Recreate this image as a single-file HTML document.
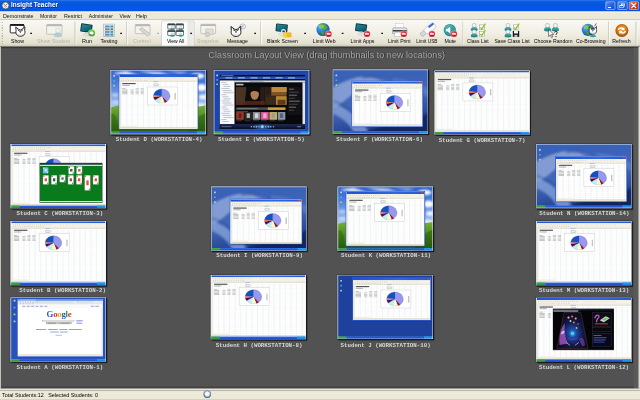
<!DOCTYPE html><html><head><meta charset="utf-8"><title>Insight Teacher</title><style>
*{margin:0;padding:0;box-sizing:border-box}
html,body{width:640px;height:400px;overflow:hidden;background:#525252}
body{position:relative;font-family:"Liberation Sans",sans-serif}
#sc{position:absolute;left:0;top:0;width:2560px;height:1600px;transform:scale(.25);transform-origin:0 0;overflow:hidden}
#zm{position:absolute;left:0;top:0;width:640px;height:400px;zoom:4;overflow:hidden}
.abs,.abs *{position:absolute}
#title{left:0;top:0;width:640px;height:11.2px;background:linear-gradient(to bottom,#2f79ea 0,#0b5ce2 14%,#0454de 45%,#0558ea 78%,#0652ee 93%,#0a3cc0 100%)}
#menu{left:0;top:11.2px;width:640px;height:8.4px;background:linear-gradient(to bottom,#f6f4e8 0,#f4f2e5 1.2px,#ece9d8 1.6px,#ece9d8 100%)}
#tb{left:0;top:19.6px;width:640px;height:27.2px;background:linear-gradient(to bottom,#f9f8f3 0,#f1efe4 50%,#e4e0d0 88%,#c9c5b2 100%)}
#main{left:0;top:46.8px;width:640px;height:341.6px;background:#525252}
#status{left:0;top:388.5px;width:640px;height:11.5px;background:linear-gradient(to bottom,#e7e5d9 0,#e7e5d9 1.3px,#b9b7a9 1.5px,#b9b7a9 2.3px,#edeadb 2.6px,#ece9d8 10.4px,#d6d3c2 10.9px,#d2cfbe 100%)}
.t{white-space:nowrap;line-height:1;color:#000}
.lbl{white-space:nowrap;line-height:1;font-family:"Liberation Mono",monospace;font-size:5.78px;color:#d8d8d8;font-weight:bold;letter-spacing:0}
.th{width:95.4px;height:64.2px;background:#fff;overflow:hidden;box-shadow:0 0 0 0.8px rgba(44,44,44,.55),1px 1px 0 0.15px rgba(10,10,20,.95),1.2px 1.4px 1px rgba(20,20,20,.4)}
.abs span{position:static}
.sep{top:21.5px;width:0.8px;height:23.5px;background:#c9c6b8;box-shadow:0.8px 0 0 #fff}
.dot{width:1.8px;height:1.3px;background:#111;top:32.6px}
</style></head><body><div id="sc"><div id="zm" class="abs">
<div id="title">
<svg style="left:1.4px;top:1.5px" width="8" height="8" viewBox="0 0 9 9"><circle cx="4.5" cy="4.5" r="4" fill="#f4f4f0" stroke="#4a4a48" stroke-width=".9"/><path d="M2.2 2.6 L4.5 4.6 L6.8 2.4" fill="none" stroke="#3a3a38" stroke-width=".8"/><path d="M3 5.2 C3.6 6.8 5.4 6.8 6 5.2" fill="none" stroke="#6a6a68" stroke-width=".6"/></svg>
<div class="t" style="left:11px;top:2.10px;font-size:6.42px;font-weight:bold;color:#fff;text-shadow:0.5px 0.5px 0.3px #0a2a7a">Insight Teacher</div>
<div style="left:605.6px;top:1.4px;width:9.6px;height:8.4px;border-radius:1.3px;border:0.6px solid #e8eefc;background:linear-gradient(135deg,#5c8ef0 0,#2a63dc 50%,#1c4cc0 100%)"><div style="left:1.8px;top:5px;width:3.2px;height:1.2px;background:#fff"></div></div>
<div style="left:617.4px;top:1.4px;width:10px;height:8.4px;border-radius:1.3px;border:0.6px solid #e8eefc;background:linear-gradient(135deg,#5c8ef0 0,#2a63dc 50%,#1c4cc0 100%)"><div style="left:3px;top:1.5px;width:4px;height:3.2px;border:0.7px solid #fff;border-top-width:1.1px"></div><div style="left:1.6px;top:3px;width:4px;height:3.2px;border:0.7px solid #fff;border-top-width:1.1px;background:#2a63dc"></div></div>
<div style="left:629px;top:1.4px;width:9.8px;height:8.4px;border-radius:1.3px;border:0.6px solid #e8eefc;background:linear-gradient(135deg,#e58a6a 0,#d5441c 45%,#b93010 100%)"><svg style="left:0;top:0" width="8.5" height="7.2" viewBox="0 0 8.5 7.2"><path d="M2.2 1.4 L6.3 5.6 M6.3 1.4 L2.2 5.6" stroke="#fff" stroke-width="1.25" stroke-linecap="round"/></svg></div>
</div>
<div id="menu">
<div class="t" style="left:3px;top:2.02px;font-size:5.33px;color:#111">Demonstrate</div>
<div class="t" style="left:40px;top:2.14px;font-size:5.10px;color:#111">Monitor</div>
<div class="t" style="left:64px;top:2.03px;font-size:5.31px;color:#111">Restrict</div>
<div class="t" style="left:88.8px;top:2.13px;font-size:5.12px;color:#111">Administer</div>
<div class="t" style="left:119.4px;top:2.08px;font-size:5.21px;color:#111">View</div>
<div class="t" style="left:136px;top:2.00px;font-size:5.35px;color:#111">Help</div>
</div>
<div id="tb">
<div style="left:1.8px;top:2.5px;width:0.9px;height:22px;background:repeating-linear-gradient(to bottom,#aaa697 0,#aaa697 0.8px,transparent 0.8px,transparent 1.6px)"></div>
<div style="left:161.3px;top:1.1px;width:33.2px;height:25.6px;border:0.7px solid #b9c3d6;border-radius:1.2px;background:linear-gradient(to right,#fdfdfc 0,#fbfbfa 78%,#e7e7e2 81%,#efefea 100%)"></div>
<div class="t" style="left:11px;top:18.89px;font-size:5.20px;color:#000">Show</div>
<div class="t" style="left:37px;top:18.83px;font-size:5.30px;color:#b4b2a6">Show Student</div>
<div class="t" style="left:82px;top:18.75px;font-size:5.45px;color:#000">Run</div>
<div class="t" style="left:100.6px;top:18.81px;font-size:5.33px;color:#000">Testing</div>
<div class="t" style="left:133px;top:18.74px;font-size:5.46px;color:#b4b2a6">Control</div>
<div class="t" style="left:166.9px;top:18.99px;font-size:5.02px;color:#000">View All</div>
<div class="t" style="left:197px;top:18.91px;font-size:5.16px;color:#b4b2a6">Snapshot</div>
<div class="t" style="left:226.9px;top:18.92px;font-size:5.15px;color:#000">Message</div>
<div class="t" style="left:266.9px;top:18.87px;font-size:5.23px;color:#000">Blank Screen</div>
<div class="t" style="left:312.8px;top:18.92px;font-size:5.15px;color:#000">Limit Web</div>
<div class="t" style="left:350.6px;top:18.91px;font-size:5.16px;color:#000">Limit Apps</div>
<div class="t" style="left:388px;top:18.95px;font-size:5.08px;color:#000">Limit Print</div>
<div class="t" style="left:416.3px;top:19.13px;font-size:4.77px;color:#000">Limit USB</div>
<div class="t" style="left:444.4px;top:18.88px;font-size:5.22px;color:#000">Mute</div>
<div class="t" style="left:466.9px;top:18.97px;font-size:5.05px;color:#000">Class List</div>
<div class="t" style="left:494.4px;top:18.92px;font-size:5.14px;color:#000">Save Class List</div>
<div class="t" style="left:533.8px;top:18.91px;font-size:5.16px;color:#000">Choose Random</div>
<div class="t" style="left:576px;top:18.90px;font-size:5.17px;color:#000">Co-Browsing</div>
<div class="t" style="left:612.3px;top:18.87px;font-size:5.23px;color:#000">Refresh</div>
<div class="sep" style="left:74.6px;top:1.9px"></div>
<div class="sep" style="left:126px;top:1.9px"></div>
<div class="sep" style="left:260.3px;top:1.9px"></div>
<div class="sep" style="left:462.5px;top:1.9px"></div>
<div class="sep" style="left:608px;top:1.9px"></div>
<div class="sep" style="left:635.6px;top:1.9px"></div>
<div class="dot" style="left:30.3px;top:13.10px;background:#111"></div>
<div class="dot" style="left:120.3px;top:13.10px;background:#111"></div>
<div class="dot" style="left:157.3px;top:13.10px;background:#aaa"></div>
<div class="dot" style="left:190.20000000000002px;top:13.10px;background:#111"></div>
<div class="dot" style="left:254.3px;top:13.10px;background:#111"></div>
<div class="dot" style="left:304.3px;top:13.10px;background:#111"></div>
<div class="dot" style="left:341.8px;top:13.10px;background:#111"></div>
<div class="dot" style="left:381.3px;top:13.10px;background:#111"></div>
<svg style="left:0;top:0" width="640" height="27.2" viewBox="0 19.6 640 27.2"><defs><radialGradient id="ne" cx=".4" cy=".3" r=".8"><stop offset="0" stop-color="#f0606a"/><stop offset=".5" stop-color="#d41424"/><stop offset="1" stop-color="#a00a18"/></radialGradient><linearGradient id="tl" x1="0" y1="0" x2="1" y2="1"><stop offset="0" stop-color="#2a8a98"/><stop offset=".5" stop-color="#147080"/><stop offset="1" stop-color="#0a4c5c"/></linearGradient><linearGradient id="tp" x1="0" y1="0" x2="0" y2="1"><stop offset="0" stop-color="#4ab4b4"/><stop offset="1" stop-color="#148484"/></linearGradient><radialGradient id="gl" cx=".35" cy=".3" r=".85"><stop offset="0" stop-color="#5ab4f0"/><stop offset=".5" stop-color="#1f7ad0"/><stop offset="1" stop-color="#0c3c8c"/></radialGradient><radialGradient id="og" cx=".5" cy=".45" r=".55"><stop offset="0" stop-color="#f0a850"/><stop offset=".6" stop-color="#dc801c"/><stop offset=".82" stop-color="#b45c0c"/><stop offset="1" stop-color="#8c4408"/></radialGradient><radialGradient id="gg" cx=".4" cy=".3" r=".8"><stop offset="0" stop-color="#8ae05a"/><stop offset=".6" stop-color="#3aa820"/><stop offset="1" stop-color="#1c7410"/></radialGradient><radialGradient id="mt" cx=".4" cy=".35" r=".8"><stop offset="0" stop-color="#4cc0c4"/><stop offset=".6" stop-color="#168c94"/><stop offset="1" stop-color="#0a5c68"/></radialGradient></defs><rect x="10.2" y="24.6" width="13.8" height="8.4" rx=".9" fill="#fff" stroke="#141414" stroke-width=".9"/><rect x="10.2" y="24.3" width="13.8" height="1.7" fill="#141414"/><g transform="translate(20.3 31.6) scale(1.0)"><path d="M-4.6 -4.4 L-1.6 -2.2 L0 -1.4 L1.6 -2.2 L4.6 -4.6 L4.4 -1 C5.2 1.6 4.2 4.4 0.4 4.8 C-3.6 4.8 -5 1.8 -4.2 -0.8 Z" fill="#fff" stroke="#141414" stroke-width=".9" stroke-linejoin="round"/><path d="M-2.6 -1.6 L0 0.2 L2.8 -1.8" fill="none" stroke="#141414" stroke-width=".8"/><path d="M-0.6 0.6 L0 1.8 L0.7 0.6Z" fill="#333"/><path d="M-2.8 2.6 C-1.6 3.8 1.6 3.8 3 2.4" fill="none" stroke="#999" stroke-width=".4"/></g><g opacity=".9"><rect x="46.6" y="24.6" width="15.4" height="9.8" rx=".8" fill="#f4f3ee" stroke="#b2b2ac" stroke-width=".8"/><rect x="46.6" y="24.6" width="15.4" height="1.7" fill="#b0b0aa"/><g transform="translate(58 32.4) scale(1.15)"><path d="M-3.4 3.4 C-3.4 0.8 -1.6 0 0 0 C1.6 0 3.4 0.8 3.4 3.4 C2 4.3 -2 4.3 -3.4 3.4Z" fill="#a8cccc" stroke="#b8c4c4" stroke-width=".35"/><circle cx="0" cy="-1.6" r="2.1" fill="#f0f0ee" stroke="#c4c8c8" stroke-width=".45"/></g></g><g transform="rotate(8 86.40 28.20)"><rect x="80.6" y="24.0" width="11.6" height="8.4" rx=".8" fill="#12343c"/><rect x="81.50" y="24.90" width="9.80" height="6.60" fill="url(#tl)"/></g><ellipse cx="87.00" cy="34.60" rx="3.6" ry="1.5" fill="#e4e6ea" stroke="#aab" stroke-width=".3"/><rect x="85.80" y="32.20" width="2.2" height="2" fill="#c6cad2"/><circle cx="91.6" cy="33.2" r="3.5" fill="url(#gg)" stroke="#e8f4e0" stroke-width=".4"/><path d="M89.6 32.2 H91.6 V30.9 L94 33.2 L91.6 35.5 V34.2 H89.6Z" fill="#fff"/><rect x="103.4" y="24.2" width="11.2" height="12.6" fill="#eef0f2" stroke="#a8acb4" stroke-width=".6"/><rect x="105" y="25.60" width="4.6" height="1.7" fill="#5a8cc0"/><rect x="110.4" y="25.60" width="2.8" height="1.7" fill="#2a9a9c"/><rect x="104.2" y="27.50" width="9.6" height=".5" fill="#888" opacity=".7"/><rect x="105" y="28.40" width="4.6" height="1.7" fill="#5a8cc0"/><rect x="110.4" y="28.40" width="2.8" height="1.7" fill="#2a9a9c"/><rect x="104.2" y="30.30" width="9.6" height=".5" fill="#888" opacity=".7"/><rect x="105" y="31.20" width="4.6" height="1.7" fill="#5a8cc0"/><rect x="110.4" y="31.20" width="2.8" height="1.7" fill="#2a9a9c"/><rect x="104.2" y="33.10" width="9.6" height=".5" fill="#888" opacity=".7"/><rect x="105" y="34.00" width="4.6" height="1.7" fill="#5a8cc0"/><rect x="110.4" y="34.00" width="2.8" height="1.7" fill="#2a9a9c"/><rect x="104.2" y="35.90" width="9.6" height=".5" fill="#888" opacity=".7"/><g opacity=".9"><rect x="135.2" y="24.6" width="14.8" height="9.2" rx=".8" fill="#f4f3ee" stroke="#b2b2ac" stroke-width=".8"/><rect x="135.2" y="24.6" width="14.8" height="1.7" fill="#b0b0aa"/><path d="M139.4 29.4 L142 27.6 L150.4 34.2 L147.6 36.4Z" fill="#d6d6d0" stroke="#a8a8a2" stroke-width=".6"/></g><rect x="167.7" y="23.9" width="7.4" height="5.2" rx=".6" fill="#fbfbfb" stroke="#3a3e44" stroke-width=".7"/><rect x="167.7" y="23.9" width="7.4" height="1.5" fill="#3a3e44"/><ellipse cx="172.30" cy="29.20" rx="2.2" ry="1.1" fill="#20a090"/><circle cx="172.30" cy="27.50" r="1.1" fill="#e8eeee" stroke="#8a9898" stroke-width=".3"/><rect x="176.1" y="23.9" width="7.4" height="5.2" rx=".6" fill="#fbfbfb" stroke="#3a3e44" stroke-width=".7"/><rect x="176.1" y="23.9" width="7.4" height="1.5" fill="#3a3e44"/><ellipse cx="180.70" cy="29.20" rx="2.2" ry="1.1" fill="#20a090"/><circle cx="180.70" cy="27.50" r="1.1" fill="#e8eeee" stroke="#8a9898" stroke-width=".3"/><rect x="167.7" y="30.5" width="7.4" height="5.2" rx=".6" fill="#fbfbfb" stroke="#3a3e44" stroke-width=".7"/><rect x="167.7" y="30.5" width="7.4" height="1.5" fill="#3a3e44"/><ellipse cx="172.30" cy="35.80" rx="2.2" ry="1.1" fill="#20a090"/><circle cx="172.30" cy="34.10" r="1.1" fill="#e8eeee" stroke="#8a9898" stroke-width=".3"/><rect x="176.1" y="30.5" width="7.4" height="5.2" rx=".6" fill="#fbfbfb" stroke="#3a3e44" stroke-width=".7"/><rect x="176.1" y="30.5" width="7.4" height="1.5" fill="#3a3e44"/><ellipse cx="180.70" cy="35.80" rx="2.2" ry="1.1" fill="#20a090"/><circle cx="180.70" cy="34.10" r="1.1" fill="#e8eeee" stroke="#8a9898" stroke-width=".3"/><g opacity=".9"><rect x="200.8" y="24.4" width="14.8" height="9.4" rx=".8" fill="#f4f3ee" stroke="#b2b2ac" stroke-width=".8"/><rect x="200.8" y="24.4" width="14.8" height="1.7" fill="#b0b0aa"/><rect x="205.6" y="29" width="7.6" height="5.6" rx=".7" fill="#dcdcd6" stroke="#b0b0aa" stroke-width=".5"/><circle cx="207.4" cy="34.6" r="2.3" fill="#cfcfc9" stroke="#aeaea8" stroke-width=".5"/></g><ellipse cx="242.6" cy="26.6" rx="2.9" ry="2.5" fill="#f4f4f8" stroke="#8a8e9a" stroke-width=".55"/><path d="M240.6 28.2 L239.2 30 L241.8 28.8Z" fill="#f4f4f8" stroke="#8a8e9a" stroke-width=".4"/><circle cx="242.6" cy="26.5" r="1.1" fill="#b4b8c8"/><g transform="translate(235.9 31.4) scale(1.08)"><path d="M-4.6 -4.4 L-1.6 -2.2 L0 -1.4 L1.6 -2.2 L4.6 -4.6 L4.4 -1 C5.2 1.6 4.2 4.4 0.4 4.8 C-3.6 4.8 -5 1.8 -4.2 -0.8 Z" fill="#fff" stroke="#141414" stroke-width=".9" stroke-linejoin="round"/><path d="M-2.6 -1.6 L0 0.2 L2.8 -1.8" fill="none" stroke="#141414" stroke-width=".8"/><path d="M-0.6 0.6 L0 1.8 L0.7 0.6Z" fill="#333"/><path d="M-2.8 2.6 C-1.6 3.8 1.6 3.8 3 2.4" fill="none" stroke="#999" stroke-width=".4"/></g><g transform="rotate(6 281.70 28.00)"><rect x="275.8" y="24.0" width="11.8" height="8.0" rx=".8" fill="#12343c"/><rect x="276.70" y="24.90" width="10.00" height="6.20" fill="url(#tl)"/></g><ellipse cx="282.30" cy="34.20" rx="3.6" ry="1.5" fill="#e4e6ea" stroke="#aab" stroke-width=".3"/><rect x="281.10" y="31.80" width="2.2" height="2" fill="#c6cad2"/><path d="M281.6 33.6 V31.6 A1.9 1.9 0 0 1 285.4 31.6 V33.6" fill="none" stroke="#eceff4" stroke-width="1.1"/><rect x="283.6" y="32.8" width="7.6" height="4.4" rx=".5" fill="#f4c010" stroke="#c89408" stroke-width=".3"/><rect x="283.6" y="32.8" width="3" height="4.4" fill="#fbd848" opacity=".8"/><circle cx="323.0" cy="29.6" r="6.6" fill="url(#gl)"/><path d="M319.37 24.65 C323.66 23.00 327.62 25.64 327.09 28.94 C324.98 30.26 323.66 28.28 322.34 29.93 C321.02 27.62 319.04 27.62 319.37 24.65Z" fill="#5caa28"/><path d="M321.02 31.25 C323.66 30.92 325.31 32.57 323.66 35.21 C321.68 34.88 320.36 33.23 321.02 31.25Z" fill="#4c9a24"/><ellipse cx="321.02" cy="26.63" rx="2.97" ry="1.98" fill="#fff" opacity=".28"/><circle cx="328.6" cy="34.0" r="3.2" fill="url(#ne)" stroke="#fff" stroke-width=".35"/><rect x="326.62" y="33.30" width="3.97" height="1.47" fill="#fff"/><g transform="rotate(8 361.10 27.90)"><rect x="355.4" y="24.0" width="11.4" height="7.8" rx=".8" fill="#12343c"/><rect x="356.30" y="24.90" width="9.60" height="6.00" fill="url(#tl)"/></g><ellipse cx="361.70" cy="34.00" rx="3.6" ry="1.5" fill="#e4e6ea" stroke="#aab" stroke-width=".3"/><rect x="360.50" y="31.60" width="2.2" height="2" fill="#c6cad2"/><circle cx="367" cy="34.0" r="3.2" fill="url(#ne)" stroke="#fff" stroke-width=".35"/><rect x="365.02" y="33.30" width="3.97" height="1.47" fill="#fff"/><rect x="395.2" y="23.8" width="8.6" height="4.4" fill="#fcfcfc" stroke="#b8bcc4" stroke-width=".4"/><path d="M393.4 28 H406 L407 29.4 V33.6 H392.6 V29.4Z" fill="#e6e8ec" stroke="#6a6e78" stroke-width=".5"/><rect x="393" y="30.2" width="13.6" height="1.4" fill="#2a2c34"/><rect x="394.8" y="33" width="9.6" height="3.6" fill="#fff" stroke="#9a9ea8" stroke-width=".4"/><circle cx="403.8" cy="34.0" r="3.2" fill="url(#ne)" stroke="#fff" stroke-width=".35"/><rect x="401.82" y="33.30" width="3.97" height="1.47" fill="#fff"/><g transform="rotate(-38 428 30)"><rect x="419.4" y="28" width="5" height="4" fill="#d4d8e0" stroke="#8a8e98" stroke-width=".4"/><rect x="424.2" y="27" width="12.6" height="6" rx="2" fill="#f8f9fb" stroke="#aab0bc" stroke-width=".5"/><rect x="430" y="27.2" width="6.4" height="2.2" rx="1" fill="#3a6ad0"/></g><circle cx="431.9" cy="34.0" r="3.2" fill="url(#ne)" stroke="#fff" stroke-width=".35"/><rect x="429.92" y="33.30" width="3.97" height="1.47" fill="#fff"/><circle cx="449.8" cy="30.2" r="6.1" fill="url(#mt)"/><circle cx="449.8" cy="30.2" r="4.6" fill="none" stroke="#bfe4e6" stroke-width=".5" opacity=".6"/><path d="M445.6 28.6 H447.6 L450.6 26 V34.4 L447.6 31.8 H445.6Z" fill="#f4f8f8" stroke="#0a4c54" stroke-width=".3"/><circle cx="454.0" cy="34.0" r="3.2" fill="url(#ne)" stroke="#fff" stroke-width=".35"/><rect x="452.02" y="33.30" width="3.97" height="1.47" fill="#fff"/><g transform="translate(474.2 27.0) scale(0.95)"><path d="M-3.4 3.4 C-3.4 0.8 -1.6 0 0 0 C1.6 0 3.4 0.8 3.4 3.4 C2 4.3 -2 4.3 -3.4 3.4Z" fill="url(#tp)" stroke="#2a5a60" stroke-width=".35"/><circle cx="0" cy="-1.6" r="2.1" fill="#f4f4f4" stroke="#8a9494" stroke-width=".45"/></g><g transform="translate(474.2 33.4) scale(0.95)"><path d="M-3.4 3.4 C-3.4 0.8 -1.6 0 0 0 C1.6 0 3.4 0.8 3.4 3.4 C2 4.3 -2 4.3 -3.4 3.4Z" fill="url(#tp)" stroke="#2a5a60" stroke-width=".35"/><circle cx="0" cy="-1.6" r="2.1" fill="#f4f4f4" stroke="#8a9494" stroke-width=".45"/></g><rect x="479.6" y="25.0" width="4.8" height="4.8" fill="#fff" stroke="#8a8e96" stroke-width=".5"/><path d="M480.50 27.60 L481.80 29.20 L485.40 23.80" fill="none" stroke="#8cc21c" stroke-width="1.25" stroke-linejoin="round"/><rect x="479.6" y="31.4" width="4.8" height="4.8" fill="#fff" stroke="#8a8e96" stroke-width=".5"/><path d="M480.50 34.00 L481.80 35.60 L485.40 30.20" fill="none" stroke="#8cc21c" stroke-width="1.25" stroke-linejoin="round"/><g transform="translate(508.0 27.0) scale(0.95)"><path d="M-3.4 3.4 C-3.4 0.8 -1.6 0 0 0 C1.6 0 3.4 0.8 3.4 3.4 C2 4.3 -2 4.3 -3.4 3.4Z" fill="url(#tp)" stroke="#2a5a60" stroke-width=".35"/><circle cx="0" cy="-1.6" r="2.1" fill="#f4f4f4" stroke="#8a9494" stroke-width=".45"/></g><g transform="translate(508.0 33.4) scale(0.95)"><path d="M-3.4 3.4 C-3.4 0.8 -1.6 0 0 0 C1.6 0 3.4 0.8 3.4 3.4 C2 4.3 -2 4.3 -3.4 3.4Z" fill="url(#tp)" stroke="#2a5a60" stroke-width=".35"/><circle cx="0" cy="-1.6" r="2.1" fill="#f4f4f4" stroke="#8a9494" stroke-width=".45"/></g><rect x="513.4" y="25.0" width="4.8" height="4.8" fill="#fff" stroke="#8a8e96" stroke-width=".5"/><path d="M514.30 27.60 L515.60 29.20 L519.20 23.80" fill="none" stroke="#8cc21c" stroke-width="1.25" stroke-linejoin="round"/><rect x="512.8" y="31" width="6.4" height="6" fill="#16181c"/><rect x="514" y="31" width="4" height="2.6" fill="#f0f2f6"/><rect x="514.4" y="35" width="3" height="2" fill="#c8ccd4"/><g transform="translate(547.6 27.2) scale(1.0)"><path d="M-3.4 3.4 C-3.4 0.8 -1.6 0 0 0 C1.6 0 3.4 0.8 3.4 3.4 C2 4.3 -2 4.3 -3.4 3.4Z" fill="url(#tp)" stroke="#2a5a60" stroke-width=".35"/><circle cx="0" cy="-1.6" r="2.1" fill="#f4f4f4" stroke="#8a9494" stroke-width=".45"/></g><g transform="translate(555.4 27.2) scale(1.0)"><path d="M-3.4 3.4 C-3.4 0.8 -1.6 0 0 0 C1.6 0 3.4 0.8 3.4 3.4 C2 4.3 -2 4.3 -3.4 3.4Z" fill="url(#tp)" stroke="#2a5a60" stroke-width=".35"/><circle cx="0" cy="-1.6" r="2.1" fill="#f4f4f4" stroke="#8a9494" stroke-width=".45"/></g><path d="M548.6 29.4 L548.6 36.6 L550.4 35 L551.6 37.6 L552.8 37 L551.6 34.6 L553.8 34.4Z" fill="#fff" stroke="#141414" stroke-width=".55" stroke-linejoin="round"/><path d="M554.6 32.6 C554.8 31.2 557.4 31.2 557.2 32.8 C557 33.8 556 33.8 556 35" fill="none" stroke="#141414" stroke-width=".9"/><circle cx="556" cy="36.6" r=".6" fill="#141414"/><circle cx="588.0" cy="30.0" r="6.2" fill="url(#gl)"/><path d="M584.59 25.35 C588.62 23.80 592.34 26.28 591.84 29.38 C589.86 30.62 588.62 28.76 587.38 30.31 C586.14 28.14 584.28 28.14 584.59 25.35Z" fill="#5caa28"/><path d="M586.14 31.55 C588.62 31.24 590.17 32.79 588.62 35.27 C586.76 34.96 585.52 33.41 586.14 31.55Z" fill="#4c9a24"/><ellipse cx="586.14" cy="27.21" rx="2.79" ry="1.86" fill="#fff" opacity=".28"/><ellipse cx="593" cy="36.2" rx="3" ry="1.2" fill="#2aa0a0"/><g transform="translate(592.8 30.4) scale(0.82)"><path d="M-4.6 -4.4 L-1.6 -2.2 L0 -1.4 L1.6 -2.2 L4.6 -4.6 L4.4 -1 C5.2 1.6 4.2 4.4 0.4 4.8 C-3.6 4.8 -5 1.8 -4.2 -0.8 Z" fill="#fff" stroke="#141414" stroke-width=".9" stroke-linejoin="round"/><path d="M-2.6 -1.6 L0 0.2 L2.8 -1.8" fill="none" stroke="#141414" stroke-width=".8"/><path d="M-0.6 0.6 L0 1.8 L0.7 0.6Z" fill="#333"/><path d="M-2.8 2.6 C-1.6 3.8 1.6 3.8 3 2.4" fill="none" stroke="#999" stroke-width=".4"/></g><path d="M594.6 26.2 L596.4 23.6" stroke="#222" stroke-width=".7"/><circle cx="621.9" cy="30.6" r="6.5" fill="url(#og)"/><path d="M617.8 30 C618.2 27.4 621.4 26.6 623.2 28.2 L624.2 27 L624.6 30.4 L621.2 30.2 L622.2 29.2 C621 28.4 619.6 28.8 619.2 30.2Z" fill="#fff"/><path d="M626 31.2 C625.6 33.8 622.4 34.6 620.6 33 L619.6 34.2 L619.2 30.8 L622.6 31 L621.6 32 C622.8 32.8 624.2 32.4 624.6 31Z" fill="#fff"/></svg>
</div>
<div id="main">
<div style="left:0;top:0;width:640px;height:1.6px;background:linear-gradient(to bottom,#303030,#444)"></div><div style="left:0;top:339.5px;width:640px;height:2.3px;background:linear-gradient(to bottom,#4a4a4a,#3c3c3c)"></div>
<div style="left:0;top:0;width:0.9px;height:342px;background:#c4c2b6"></div>
<div style="left:633.8px;top:1px;width:4.6px;height:341px;background:#5a5a5a"></div><div style="left:638.4px;top:0;width:1.6px;height:342px;background:#dddbd0"></div>
<div class="t" style="left:208.5px;top:3.10px;font-size:9.10px;color:#a6a6a6;text-shadow:0.7px 0.7px 0.35px #2c2c2c">Classroom Layout View (drag thumbnails to new locations)</div>
<div class="th" style="left:110.6px;top:23.2px"><div style="left:0.00px;top:0.00px;width:95.40px;height:64.20px;background:linear-gradient(to bottom,#2c5fcc 0,#4a7cda 20%,#77a0e6 40%,#a8c4f0 56%,#a8c4f0 100%);"></div><svg style="left:0;top:0" width="95.4" height="64.2" viewBox="0 0 95.4 64.2"><defs><linearGradient id="hg" x1="0" y1="0" x2="0" y2="1"><stop offset="0" stop-color="#7cb038"/><stop offset=".3" stop-color="#5c9a26"/><stop offset=".7" stop-color="#3a7a14"/><stop offset="1" stop-color="#27600c"/></linearGradient><filter id="cb"><feGaussianBlur stdDeviation=".9"/></filter></defs><g filter="url(#cb)" fill="#fff"><path d="M2 3 L16 1 L30 6 L22 7 L10 5Z" opacity=".8"/><path d="M28 1 L50 2 L60 5 L44 5Z" opacity=".7"/><path d="M56 1 L78 2 L70 4Z" opacity=".5"/><ellipse cx="87" cy="6" rx="7" ry="2.8" opacity=".95"/><ellipse cx="91" cy="17.5" rx="5" ry="3.4" opacity=".95"/><ellipse cx="92.5" cy="27" rx="4" ry="2.4" opacity=".85"/><ellipse cx="90" cy="35" rx="5" ry="2" opacity=".7"/><ellipse cx="4.5" cy="25" rx="3.6" ry="2" opacity=".45"/><ellipse cx="5" cy="32" rx="4" ry="1.6" opacity=".5"/></g><path d="M0 37.4 C14 33.4 28 33.4 44 36 C62 39 80 38 95.4 35.4 L95.4 64.2 L0 64.2 Z" fill="url(#hg)"/><path d="M76 64.2 C80 52 88 46 95.4 43 L95.4 64.2 Z" fill="#1c4c06" opacity=".4"/><path d="M0 44 C4 43 7 45 8 64.2 L0 64.2Z" fill="#1c4c06" opacity=".35"/></svg><div style="left:2.70px;top:5.00px;width:1.80px;height:1.70px;background:#e4f4f8;border-radius:0.5px;opacity:.8"></div><div style="left:2.70px;top:9.90px;width:1.80px;height:1.70px;background:#6ab4e8;border-radius:0.5px;opacity:.8"></div><div style="left:2.70px;top:14.80px;width:1.80px;height:1.70px;background:#d8e478;border-radius:0.5px;opacity:.8"></div><div style="left:8.90px;top:4.90px;width:78.10px;height:53.80px;overflow:hidden;background:#fff;box-shadow:0 0 0 0.8px #2c5cd2, 0.8px 1px 1.2px rgba(0,0,20,.4);"><div style="left:0.00px;top:7.10px;width:78.10px;height:46.70px;background:#fff;"></div><svg style="left:0;top:0" width="78.10" height="53.80" viewBox="0 0 78.10 53.80"><path d="M0 8.96H78.10M0 10.82H78.10M0 12.68H78.10M0 14.54H78.10M0 16.40H78.10M0 18.26H78.10M0 20.12H78.10M0 21.98H78.10M0 23.84H78.10M0 25.70H78.10M0 27.56H78.10M0 29.42H78.10M0 31.28H78.10M0 33.14H78.10M0 35.00H78.10M0 36.86H78.10M0 38.72H78.10M0 40.58H78.10M0 42.44H78.10M0 44.30H78.10M0 46.16H78.10M0 48.02H78.10M0 49.88H78.10M0 51.74H78.10M0 53.60H78.10" stroke="#f1f2f4" stroke-width=".35" fill="none"/><path d="M1.60 7.10V53.80M7.18 7.10V53.80M12.76 7.10V53.80M18.34 7.10V53.80M23.92 7.10V53.80M29.50 7.10V53.80M35.08 7.10V53.80M40.66 7.10V53.80M46.24 7.10V53.80M51.82 7.10V53.80M57.40 7.10V53.80M62.98 7.10V53.80M68.56 7.10V53.80M74.14 7.10V53.80" stroke="#e4e6ea" stroke-width=".45" fill="none"/></svg><div style="left:0.00px;top:0.00px;width:78.10px;height:2.30px;background:linear-gradient(to right,#1c50d4,#2f68e2 60%,#2258d4);"></div><div style="left:74.80px;top:0.50px;width:2.30px;height:1.20px;background:#d8482a;"></div><div style="left:0.00px;top:2.30px;width:78.10px;height:4.80px;background:linear-gradient(to bottom,#f1eee0 0,#f6f4ea 30%,#f3f0e3 62%,#eae7da 86%,#dddbd0 100%);"></div><svg style="left:0;top:0" width="78.10" height="8.10" viewBox="0 0 78.10 8.10"><rect x="1.60" y="3.50" width=".8" height=".8" fill="#c8aa50" opacity=".55"/><rect x="3.70" y="3.50" width=".8" height=".8" fill="#7f95c4" opacity=".55"/><rect x="5.80" y="3.50" width=".8" height=".8" fill="#b9a468" opacity=".55"/><rect x="7.90" y="3.50" width=".8" height=".8" fill="#8a98b8" opacity=".55"/><rect x="10.00" y="3.50" width=".8" height=".8" fill="#c4b070" opacity=".55"/><rect x="12.10" y="3.50" width=".8" height=".8" fill="#9aa4bc" opacity=".55"/><rect x="14.20" y="3.50" width=".8" height=".8" fill="#c8aa50" opacity=".55"/><rect x="16.30" y="3.50" width=".8" height=".8" fill="#7f95c4" opacity=".55"/><rect x="18.40" y="3.50" width=".8" height=".8" fill="#b9a468" opacity=".55"/><rect x="20.50" y="3.50" width=".8" height=".8" fill="#8a98b8" opacity=".55"/><rect x="22.60" y="3.50" width=".8" height=".8" fill="#c4b070" opacity=".55"/><rect x="24.70" y="3.50" width=".8" height=".8" fill="#9aa4bc" opacity=".55"/><rect x="26.80" y="3.50" width=".8" height=".8" fill="#c8aa50" opacity=".55"/><rect x="28.90" y="3.50" width=".8" height=".8" fill="#7f95c4" opacity=".55"/><rect x="31.00" y="3.50" width=".8" height=".8" fill="#b9a468" opacity=".55"/><rect x="33.10" y="3.50" width=".8" height=".8" fill="#8a98b8" opacity=".55"/><rect x="1.60" y="5.20" width=".8" height=".8" fill="#b9a468" opacity=".5"/><rect x="3.90" y="5.20" width=".8" height=".8" fill="#8a98b8" opacity=".5"/><rect x="6.20" y="5.20" width=".8" height=".8" fill="#c4b070" opacity=".5"/><rect x="8.50" y="5.20" width=".8" height=".8" fill="#9aa4bc" opacity=".5"/><rect x="10.80" y="5.20" width=".8" height=".8" fill="#c8aa50" opacity=".5"/><rect x="13.10" y="5.20" width=".8" height=".8" fill="#7f95c4" opacity=".5"/><rect x="15.40" y="5.20" width=".8" height=".8" fill="#b9a468" opacity=".5"/><rect x="17.70" y="5.20" width=".8" height=".8" fill="#8a98b8" opacity=".5"/><rect x="20.00" y="5.20" width=".8" height=".8" fill="#c4b070" opacity=".5"/><rect x="22.30" y="5.20" width=".8" height=".8" fill="#9aa4bc" opacity=".5"/><rect x="24.60" y="5.20" width=".8" height=".8" fill="#c8aa50" opacity=".5"/><rect x="26.90" y="5.20" width=".8" height=".8" fill="#7f95c4" opacity=".5"/><rect x="40.61" y="3.50" width=".7" height=".8" fill="#8a98b8" opacity=".45"/><rect x="43.51" y="3.50" width=".7" height=".8" fill="#c4b070" opacity=".45"/><rect x="46.41" y="3.50" width=".7" height=".8" fill="#9aa4bc" opacity=".45"/><rect x="49.31" y="3.50" width=".7" height=".8" fill="#c8aa50" opacity=".45"/><rect x="52.21" y="3.50" width=".7" height=".8" fill="#7f95c4" opacity=".45"/><rect x="55.11" y="3.50" width=".7" height=".8" fill="#b9a468" opacity=".45"/><rect x="58.01" y="3.50" width=".7" height=".8" fill="#8a98b8" opacity=".45"/><rect x="60.91" y="3.50" width=".7" height=".8" fill="#c4b070" opacity=".45"/><rect x="63.81" y="3.50" width=".7" height=".8" fill="#9aa4bc" opacity=".45"/><rect x="33.8" y="6.20" width="5.0" height=".9" fill="#7a9ae0" opacity=".55"/></svg><div style="left:0.00px;top:7.10px;width:1.50px;height:46.70px;background:#ece9dc;"></div><svg style="left:0;top:0" width="78.10" height="53.80" viewBox="0 -0.40 78.10 53.80"><rect x="2.8" y="7.6" width="13.4" height="1.15" fill="#2c2c2c" opacity=".8"/><rect x="2.8" y="9.5" width="7.4" height=".75" fill="#555" opacity=".6"/><rect x="2.6" y="12.90" width="3.4" height=".7" fill="#555" opacity=".45"/><rect x="16.00" y="12.90" width="3.3" height=".7" fill="#666" opacity=".4"/><rect x="21.00" y="12.90" width="3.3" height=".7" fill="#666" opacity=".4"/><rect x="2.6" y="14.20" width="5.4" height=".7" fill="#555" opacity=".45"/><rect x="11.00" y="14.20" width="3.3" height=".7" fill="#666" opacity=".4"/><rect x="16.00" y="14.20" width="3.3" height=".7" fill="#666" opacity=".4"/><rect x="21.00" y="14.20" width="3.3" height=".7" fill="#666" opacity=".4"/><rect x="2.6" y="15.50" width="5.4" height=".7" fill="#555" opacity=".45"/><rect x="11.00" y="15.50" width="3.3" height=".7" fill="#666" opacity=".4"/><rect x="16.00" y="15.50" width="3.3" height=".7" fill="#666" opacity=".4"/><rect x="21.00" y="15.50" width="3.3" height=".7" fill="#666" opacity=".4"/><rect x="2.6" y="16.80" width="5.4" height=".7" fill="#555" opacity=".45"/><rect x="11.00" y="16.80" width="3.3" height=".7" fill="#666" opacity=".4"/><rect x="16.00" y="16.80" width="3.3" height=".7" fill="#666" opacity=".4"/><rect x="21.00" y="16.80" width="3.3" height=".7" fill="#666" opacity=".4"/><rect x="2.6" y="18.10" width="5.4" height=".7" fill="#555" opacity=".45"/><rect x="11.00" y="18.10" width="3.3" height=".7" fill="#666" opacity=".4"/><rect x="16.00" y="18.10" width="3.3" height=".7" fill="#666" opacity=".4"/><rect x="21.00" y="18.10" width="3.3" height=".7" fill="#666" opacity=".4"/><rect x="34.2" y="8.5" width="4.8" height="1.9" rx=".7" fill="#f2f2f2" stroke="#999" stroke-width=".4"/><rect x="27.9" y="11.6" width="30.0" height="18.0" fill="#fff" stroke="#c8c8ce" stroke-width=".45"/><rect x="55.0" y="17.6" width="1.3" height="6.6" fill="#999" opacity=".6"/></svg><svg style="left:32.95px;top:13.05px" width="18.50" height="16.10" viewBox="-9.25 -8.05 18.50 16.10"><path d="M0 0 L0.00 -7.05 A8.25 7.05 0 0 1 5.30 5.40 Z" fill="#9898f0" stroke="#9898f0" stroke-width="0.15"/><path d="M0 0 L5.30 5.40 A8.25 7.05 0 0 1 2.82 6.62 Z" fill="#8c1444" stroke="#8c1444" stroke-width="0.15"/><path d="M0 0 L2.82 6.62 A8.25 7.05 0 0 1 -1.72 6.90 Z" fill="#fdfdc2" stroke="#fdfdc2" stroke-width="0.15"/><path d="M0 0 L-1.72 6.90 A8.25 7.05 0 0 1 -6.84 3.94 Z" fill="#c0f0f0" stroke="#c0f0f0" stroke-width="0.15"/><path d="M0 0 L-6.84 3.94 A8.25 7.05 0 0 1 -8.17 0.98 Z" fill="#50085c" stroke="#50085c" stroke-width="0.15"/><path d="M0 0 L-8.17 0.98 A8.25 7.05 0 0 1 -8.19 -0.86 Z" fill="#fa7a56" stroke="#fa7a56" stroke-width="0.15"/><path d="M0 0 L-8.19 -0.86 A8.25 7.05 0 0 1 -0.00 -7.05 Z" fill="#1452c4" stroke="#1452c4" stroke-width="0.15"/><ellipse cx="0" cy="0" rx="8.25" ry="7.05" fill="none" stroke="#445" stroke-width="0.25" opacity=".5"/></svg><div style="left:0.00px;top:52.20px;width:78.10px;height:1.60px;background:#e8e5d6;border-top:0.3px solid #c8c5b4"></div><div style="left:1.60px;top:50.80px;width:16.00px;height:1.40px;background:#f1efe4;"></div></div><div style="left:0.00px;top:61.60px;width:95.40px;height:2.60px;background:linear-gradient(to bottom,#3a74e6 0,#2458d8 40%,#1f4cc4 100%);"></div><div style="left:0.00px;top:61.60px;width:9.20px;height:2.60px;background:linear-gradient(to bottom,#4cae4c,#2f8a2f);border-radius:0 1px 1px 0"></div><div style="left:86.40px;top:61.60px;width:9.00px;height:2.60px;background:linear-gradient(to bottom,#2aa0f0,#1282dc);"></div><div style="left:0.00px;top:0.00px;width:0.65px;height:64.20px;background:rgba(226,232,244,.7);"></div><div style="left:94.75px;top:0.00px;width:0.65px;height:64.20px;background:rgba(226,232,244,.7);"></div><div style="left:0.00px;top:0.00px;width:95.40px;height:0.65px;background:rgba(226,232,244,.7);"></div><div style="left:0.00px;top:63.55px;width:95.40px;height:0.65px;background:rgba(226,232,244,.7);"></div></div>
<div class="lbl" style="left:115.80px;top:90.25px">Student D (WORKSTATION-4)</div>
<div class="th" style="left:213.8px;top:23.2px"><div style="left:0.00px;top:0.00px;width:95.40px;height:64.20px;background:#1a46b2;"></div><div style="left:2.40px;top:4.60px;width:1.80px;height:1.70px;background:#e4f4f8;border-radius:0.5px;opacity:.8"></div><div style="left:2.40px;top:9.00px;width:1.80px;height:1.70px;background:#6ab4e8;border-radius:0.5px;opacity:.8"></div><div style="left:2.40px;top:13.40px;width:1.80px;height:1.70px;background:#d8e478;border-radius:0.5px;opacity:.8"></div><div style="left:5.8px;top:4.7px;width:85.6px;height:54.4px;overflow:hidden;background:#0a0a0c;box-shadow:0 0 0 0.5px #3f66cc"><div style="left:0.00px;top:0.00px;width:85.60px;height:1.60px;background:#0c1018;"></div><div style="left:0.00px;top:1.60px;width:85.60px;height:3.00px;background:linear-gradient(to bottom,#1c3c98,#3f66c6);"></div><div style="left:0.00px;top:4.60px;width:85.60px;height:1.10px;background:#0a0c14;"></div><svg style="left:0;top:0" width="85.6" height="54.4" viewBox="0 0 85.6 54.4"><defs><filter id="eb"><feGaussianBlur stdDeviation=".35"/></filter><filter id="eb2"><feGaussianBlur stdDeviation=".7"/></filter><linearGradient id="ecb" x1="0" y1="0" x2="0" y2="1"><stop offset="0" stop-color="#1e2e58"/><stop offset="1" stop-color="#070b1c"/></linearGradient></defs><rect x="2" y=".5" width="12" height=".7" fill="#dde" opacity=".6"/><rect x="6.0" y="2.5" width="7" height="1.2" fill="#e8eefc" opacity=".6"/><rect x="18.5" y="2.5" width="7" height="1.2" fill="#e8eefc" opacity=".6"/><rect x="31.0" y="2.5" width="7" height="1.2" fill="#e8eefc" opacity=".6"/><rect x="43.5" y="2.5" width="7" height="1.2" fill="#e8eefc" opacity=".6"/><rect x="56.0" y="2.5" width="7" height="1.2" fill="#e8eefc" opacity=".6"/><rect x="68.5" y="2.5" width="7" height="1.2" fill="#e8eefc" opacity=".6"/><rect x="15.2" y="5.7" width="70.4" height="2.1" fill="#cfdcf2"/><rect x="30" y="6.3" width="14" height="1" fill="#6a90d8" opacity=".6"/><rect x="0" y="5.7" width="15.2" height="43.7" fill="#f6f8fb"/><rect x="2.0" y="7.40" width="5" height=".7" fill="#6a7690" opacity=".55"/><rect x="3.0" y="9.45" width="6" height=".7" fill="#6a7690" opacity=".55"/><rect x="4.0" y="11.50" width="7" height=".7" fill="#6a7690" opacity=".55"/><rect x="2.0" y="13.55" width="8" height=".7" fill="#6a7690" opacity=".55"/><rect x="3.0" y="15.60" width="9" height=".7" fill="#6a7690" opacity=".55"/><rect x="4.0" y="17.65" width="10" height=".7" fill="#6a7690" opacity=".55"/><rect x="2.0" y="19.70" width="5" height=".7" fill="#6a7690" opacity=".55"/><rect x="3.0" y="21.75" width="6" height=".7" fill="#6a7690" opacity=".55"/><rect x="4.0" y="23.80" width="7" height=".7" fill="#6a7690" opacity=".55"/><rect x="2.0" y="25.85" width="8" height=".7" fill="#6a7690" opacity=".55"/><rect x="3.0" y="27.90" width="9" height=".7" fill="#6a7690" opacity=".55"/><rect x="4.0" y="29.95" width="10" height=".7" fill="#6a7690" opacity=".55"/><rect x="2.0" y="32.00" width="5" height=".7" fill="#6a7690" opacity=".55"/><rect x="3.0" y="34.05" width="6" height=".7" fill="#6a7690" opacity=".55"/><rect x="4.0" y="36.10" width="7" height=".7" fill="#6a7690" opacity=".55"/><rect x="2.0" y="38.15" width="8" height=".7" fill="#6a7690" opacity=".55"/><rect x="3.0" y="40.20" width="9" height=".7" fill="#6a7690" opacity=".55"/><rect x="4.0" y="42.25" width="10" height=".7" fill="#6a7690" opacity=".55"/><rect x="2.0" y="44.30" width="5" height=".7" fill="#6a7690" opacity=".55"/><rect x="3.0" y="46.35" width="6" height=".7" fill="#6a7690" opacity=".55"/><rect x="15.2" y="7.8" width="67.8" height="41.6" fill="#09090b"/><rect x="83.0" y="7.8" width="2.6" height="41.6" fill="#dfe3ea"/><rect x="16.6" y="9" width="7.4" height="1.7" fill="#e4e4e4" opacity=".8"/><g filter="url(#eb)"><rect x="16.4" y="12.3" width="28.8" height="17.8" fill="#2a1a12"/><rect x="16.4" y="12.3" width="11" height="17.8" fill="#4a3424"/><path d="M27 12.3 H41 V30.1 H25Z" fill="#0c0a0a"/><ellipse cx="35.2" cy="19.6" rx="4.2" ry="5.4" fill="#b47c54"/><path d="M30.4 18 C30.4 12.6 40.2 12.6 40 18.4 C38 15.6 33 15.4 30.4 18Z" fill="#0a0808"/><rect x="16.4" y="26.4" width="28.8" height="3.7" fill="#5a2a20" opacity=".8"/><rect x="45.7" y="12.3" width="21.5" height="8.7" fill="#7a5228"/><rect x="52" y="12.3" width="15.2" height="5" fill="#c08a3a"/><rect x="45.7" y="12.3" width="6" height="8.7" fill="#2a1c14"/><rect x="45.7" y="21.4" width="10.5" height="8.7" fill="#3a2a1c"/><rect x="56.4" y="21.4" width="10.8" height="8.7" fill="#b8862c"/><rect x="58" y="25" width="8" height="5" fill="#5a3c1c"/></g><rect x="68.2" y="12.3" width="13.8" height="28" fill="#121216"/><rect x="69.4" y="14.0" width="5" height=".8" fill="#ccc" opacity="0.65"/><rect x="69.4" y="17.0" width="10" height=".8" fill="#ccc" opacity="0.35"/><rect x="69.4" y="20.0" width="8" height=".8" fill="#ccc" opacity="0.65"/><rect x="69.4" y="23.0" width="6" height=".8" fill="#ccc" opacity="0.35"/><rect x="69.4" y="26.0" width="11" height=".8" fill="#ccc" opacity="0.65"/><rect x="69.4" y="29.0" width="9" height=".8" fill="#ccc" opacity="0.35"/><rect x="69.4" y="32.0" width="7" height=".8" fill="#ccc" opacity="0.65"/><rect x="69.4" y="35.0" width="5" height=".8" fill="#ccc" opacity="0.35"/><rect x="16.7" y="32.6" width="31.5" height="2.6" fill="#4a4a4e"/><rect x="48.2" y="32.6" width="17.8" height="2.6" fill="#d0a038"/><rect x="18" y="33.5" width="20" height=".8" fill="#bbb" opacity=".5"/><rect x="16.7" y="36.2" width="12" height=".7" fill="#bbb" opacity=".5"/><g filter="url(#eb)"><rect x="16.7" y="37.3" width="7.6" height="7.7" fill="#9a3a2c"/><rect x="18.9" y="38.6" width="3.2" height="4.6" fill="#4a2018" opacity=".8"/><rect x="25.0" y="37.3" width="7.6" height="7.7" fill="#2a2a2e"/><rect x="27.2" y="38.6" width="3.2" height="4.6" fill="#d8d8d8" opacity=".8"/><rect x="33.3" y="37.3" width="7.6" height="7.7" fill="#8a8e96"/><rect x="35.5" y="38.6" width="3.2" height="4.6" fill="#e8e8e8" opacity=".8"/><rect x="41.6" y="37.3" width="7.6" height="7.7" fill="#e25aa0"/><rect x="43.8" y="38.6" width="3.2" height="4.6" fill="#f4c0dc" opacity=".8"/><rect x="49.9" y="37.3" width="7.6" height="7.7" fill="#c8b060"/><rect x="52.1" y="38.6" width="3.2" height="4.6" fill="#8a9aa8" opacity=".8"/><rect x="58.2" y="37.3" width="7.6" height="7.7" fill="#8a98ac"/><rect x="60.4" y="38.6" width="3.2" height="4.6" fill="#4a5668" opacity=".8"/></g><rect x="16.7" y="45.8" width="6" height=".6" fill="#aaa" opacity=".45"/><rect x="25.0" y="45.8" width="6" height=".6" fill="#aaa" opacity=".45"/><rect x="33.3" y="45.8" width="6" height=".6" fill="#aaa" opacity=".45"/><rect x="41.6" y="45.8" width="6" height=".6" fill="#aaa" opacity=".45"/><rect x="49.9" y="45.8" width="6" height=".6" fill="#aaa" opacity=".45"/><rect x="58.2" y="45.8" width="6" height=".6" fill="#aaa" opacity=".45"/><rect x="0" y="49.4" width="85.6" height="5" fill="url(#ecb)"/><ellipse cx="42.8" cy="52" rx="9" ry="2.4" fill="#3a8ae8" opacity=".45" filter="url(#eb2)"/><circle cx="42.8" cy="51.9" r="1.7" fill="#9fd6ff" stroke="#2a6ad0" stroke-width=".5"/><circle cx="31.8" cy="52" r=".75" fill="#c8d4e8" opacity=".8"/><circle cx="46.2" cy="52" r=".75" fill="#c8d4e8" opacity=".8"/><circle cx="34.4" cy="52" r=".75" fill="#c8d4e8" opacity=".8"/><circle cx="48.8" cy="52" r=".75" fill="#c8d4e8" opacity=".8"/><circle cx="37.0" cy="52" r=".75" fill="#c8d4e8" opacity=".8"/><circle cx="51.4" cy="52" r=".75" fill="#c8d4e8" opacity=".8"/><circle cx="39.6" cy="52" r=".75" fill="#c8d4e8" opacity=".8"/><circle cx="54.0" cy="52" r=".75" fill="#c8d4e8" opacity=".8"/><rect x="2" y="51.4" width="10" height="1" fill="#8a9ab8" opacity=".6"/><rect x="77.6" y="51.2" width="4" height="1.4" fill="#8a9ab8" opacity=".6"/></svg></div><div style="left:0.00px;top:61.60px;width:95.40px;height:2.60px;background:linear-gradient(to bottom,#3a74e6 0,#2458d8 40%,#1f4cc4 100%);"></div><div style="left:0.00px;top:61.60px;width:9.20px;height:2.60px;background:linear-gradient(to bottom,#4cae4c,#2f8a2f);border-radius:0 1px 1px 0"></div><div style="left:86.40px;top:61.60px;width:9.00px;height:2.60px;background:linear-gradient(to bottom,#2aa0f0,#1282dc);"></div><div style="left:0.00px;top:0.00px;width:0.65px;height:64.20px;background:rgba(226,232,244,.7);"></div><div style="left:94.75px;top:0.00px;width:0.65px;height:64.20px;background:rgba(226,232,244,.7);"></div><div style="left:0.00px;top:0.00px;width:95.40px;height:0.65px;background:rgba(226,232,244,.7);"></div><div style="left:0.00px;top:63.55px;width:95.40px;height:0.65px;background:rgba(226,232,244,.7);"></div></div>
<div class="lbl" style="left:218.00px;top:89.95px">Student E (WORKSTATION-5)</div>
<div class="th" style="left:332.7px;top:22.7px"><div style="left:0.00px;top:0.00px;width:95.40px;height:64.20px;background:linear-gradient(168deg,#3861b8 0,#3a62b6 28%,#4468b4 50%,#2c4c9c 72%,#1c3276 100%);"></div><svg style="left:0;top:0" width="95.4" height="64.2" viewBox="0 0 95.4 64.2"><defs><filter id="ab"><feGaussianBlur stdDeviation="1.3"/></filter><filter id="ab2"><feGaussianBlur stdDeviation="0.9"/></filter></defs><g filter="url(#ab)"><path d="M0 18 C10 12 22 7 34 7 C44 7 50 9 56 13 C44 11 30 16 16 28 C10 33 4 37 0 39 Z" fill="#8ea6d8" opacity=".85"/><path d="M0 34 C8 36 18 42 28 52 C32 56 35 60 36 64.2 L22 64.2 C18 56 10 48 0 44 Z" fill="#84a0d8" opacity=".8"/><path d="M30 64.2 C36 58 60 56 95.4 44 L95.4 64.2 Z" fill="#13235a" opacity=".9"/><path d="M60 12 C74 14 86 20 95.4 28 L95.4 20 C88 14 76 10 60 9 Z" fill="#6486cc" opacity=".55"/></g><g filter="url(#ab2)" fill="none"><path d="M30 8.0 C38 6.2 46 7.6 53 12.4" stroke="#1c3a8c" stroke-width="2.2" opacity=".5"/><path d="M0 31.4 C8 33.6 14 37 21 43" stroke="#26428e" stroke-width="1.6" opacity=".5"/></g></svg><div style="left:2.70px;top:5.00px;width:1.80px;height:1.70px;background:#e4f4f8;border-radius:0.5px;opacity:.8"></div><div style="left:2.70px;top:9.90px;width:1.80px;height:1.70px;background:#6ab4e8;border-radius:0.5px;opacity:.8"></div><div style="left:2.70px;top:14.80px;width:1.80px;height:1.70px;background:#d8e478;border-radius:0.5px;opacity:.8"></div><div style="left:19.50px;top:11.90px;width:70.10px;height:44.80px;overflow:hidden;background:#fff;box-shadow:0 0 0 0.8px #2c5cd2, 0.8px 1px 1.2px rgba(0,0,20,.4);"><div style="left:0.00px;top:7.10px;width:70.10px;height:37.70px;background:#fff;"></div><svg style="left:0;top:0" width="70.10" height="44.80" viewBox="0 0 70.10 44.80"><path d="M0 8.96H70.10M0 10.82H70.10M0 12.68H70.10M0 14.54H70.10M0 16.40H70.10M0 18.26H70.10M0 20.12H70.10M0 21.98H70.10M0 23.84H70.10M0 25.70H70.10M0 27.56H70.10M0 29.42H70.10M0 31.28H70.10M0 33.14H70.10M0 35.00H70.10M0 36.86H70.10M0 38.72H70.10M0 40.58H70.10M0 42.44H70.10M0 44.30H70.10" stroke="#f1f2f4" stroke-width=".35" fill="none"/><path d="M1.60 7.10V44.80M7.18 7.10V44.80M12.76 7.10V44.80M18.34 7.10V44.80M23.92 7.10V44.80M29.50 7.10V44.80M35.08 7.10V44.80M40.66 7.10V44.80M46.24 7.10V44.80M51.82 7.10V44.80M57.40 7.10V44.80M62.98 7.10V44.80M68.56 7.10V44.80" stroke="#e4e6ea" stroke-width=".45" fill="none"/></svg><div style="left:0.00px;top:0.00px;width:70.10px;height:2.30px;background:linear-gradient(to right,#1c50d4,#2f68e2 60%,#2258d4);"></div><div style="left:66.80px;top:0.50px;width:2.30px;height:1.20px;background:#d8482a;"></div><div style="left:0.00px;top:2.30px;width:70.10px;height:4.80px;background:linear-gradient(to bottom,#f1eee0 0,#f6f4ea 30%,#f3f0e3 62%,#eae7da 86%,#dddbd0 100%);"></div><svg style="left:0;top:0" width="70.10" height="8.10" viewBox="0 0 70.10 8.10"><rect x="1.60" y="3.50" width=".8" height=".8" fill="#c8aa50" opacity=".55"/><rect x="3.70" y="3.50" width=".8" height=".8" fill="#7f95c4" opacity=".55"/><rect x="5.80" y="3.50" width=".8" height=".8" fill="#b9a468" opacity=".55"/><rect x="7.90" y="3.50" width=".8" height=".8" fill="#8a98b8" opacity=".55"/><rect x="10.00" y="3.50" width=".8" height=".8" fill="#c4b070" opacity=".55"/><rect x="12.10" y="3.50" width=".8" height=".8" fill="#9aa4bc" opacity=".55"/><rect x="14.20" y="3.50" width=".8" height=".8" fill="#c8aa50" opacity=".55"/><rect x="16.30" y="3.50" width=".8" height=".8" fill="#7f95c4" opacity=".55"/><rect x="18.40" y="3.50" width=".8" height=".8" fill="#b9a468" opacity=".55"/><rect x="20.50" y="3.50" width=".8" height=".8" fill="#8a98b8" opacity=".55"/><rect x="22.60" y="3.50" width=".8" height=".8" fill="#c4b070" opacity=".55"/><rect x="24.70" y="3.50" width=".8" height=".8" fill="#9aa4bc" opacity=".55"/><rect x="26.80" y="3.50" width=".8" height=".8" fill="#c8aa50" opacity=".55"/><rect x="28.90" y="3.50" width=".8" height=".8" fill="#7f95c4" opacity=".55"/><rect x="1.60" y="5.20" width=".8" height=".8" fill="#b9a468" opacity=".5"/><rect x="3.90" y="5.20" width=".8" height=".8" fill="#8a98b8" opacity=".5"/><rect x="6.20" y="5.20" width=".8" height=".8" fill="#c4b070" opacity=".5"/><rect x="8.50" y="5.20" width=".8" height=".8" fill="#9aa4bc" opacity=".5"/><rect x="10.80" y="5.20" width=".8" height=".8" fill="#c8aa50" opacity=".5"/><rect x="13.10" y="5.20" width=".8" height=".8" fill="#7f95c4" opacity=".5"/><rect x="15.40" y="5.20" width=".8" height=".8" fill="#b9a468" opacity=".5"/><rect x="17.70" y="5.20" width=".8" height=".8" fill="#8a98b8" opacity=".5"/><rect x="20.00" y="5.20" width=".8" height=".8" fill="#c4b070" opacity=".5"/><rect x="22.30" y="5.20" width=".8" height=".8" fill="#9aa4bc" opacity=".5"/><rect x="36.45" y="3.50" width=".7" height=".8" fill="#8a98b8" opacity=".45"/><rect x="39.35" y="3.50" width=".7" height=".8" fill="#c4b070" opacity=".45"/><rect x="42.25" y="3.50" width=".7" height=".8" fill="#9aa4bc" opacity=".45"/><rect x="45.15" y="3.50" width=".7" height=".8" fill="#c8aa50" opacity=".45"/><rect x="48.05" y="3.50" width=".7" height=".8" fill="#7f95c4" opacity=".45"/><rect x="50.95" y="3.50" width=".7" height=".8" fill="#b9a468" opacity=".45"/><rect x="53.85" y="3.50" width=".7" height=".8" fill="#8a98b8" opacity=".45"/><rect x="56.75" y="3.50" width=".7" height=".8" fill="#c4b070" opacity=".45"/><rect x="33.8" y="6.20" width="5.0" height=".9" fill="#7a9ae0" opacity=".55"/></svg><div style="left:0.00px;top:7.10px;width:1.50px;height:37.70px;background:#ece9dc;"></div><svg style="left:0;top:0" width="70.10" height="44.80" viewBox="0 -0.40 70.10 44.80"><rect x="2.8" y="7.6" width="13.4" height="1.15" fill="#2c2c2c" opacity=".8"/><rect x="2.8" y="9.5" width="7.4" height=".75" fill="#555" opacity=".6"/><rect x="2.6" y="12.90" width="3.4" height=".7" fill="#555" opacity=".45"/><rect x="16.00" y="12.90" width="3.3" height=".7" fill="#666" opacity=".4"/><rect x="21.00" y="12.90" width="3.3" height=".7" fill="#666" opacity=".4"/><rect x="2.6" y="14.20" width="5.4" height=".7" fill="#555" opacity=".45"/><rect x="11.00" y="14.20" width="3.3" height=".7" fill="#666" opacity=".4"/><rect x="16.00" y="14.20" width="3.3" height=".7" fill="#666" opacity=".4"/><rect x="21.00" y="14.20" width="3.3" height=".7" fill="#666" opacity=".4"/><rect x="2.6" y="15.50" width="5.4" height=".7" fill="#555" opacity=".45"/><rect x="11.00" y="15.50" width="3.3" height=".7" fill="#666" opacity=".4"/><rect x="16.00" y="15.50" width="3.3" height=".7" fill="#666" opacity=".4"/><rect x="21.00" y="15.50" width="3.3" height=".7" fill="#666" opacity=".4"/><rect x="2.6" y="16.80" width="5.4" height=".7" fill="#555" opacity=".45"/><rect x="11.00" y="16.80" width="3.3" height=".7" fill="#666" opacity=".4"/><rect x="16.00" y="16.80" width="3.3" height=".7" fill="#666" opacity=".4"/><rect x="21.00" y="16.80" width="3.3" height=".7" fill="#666" opacity=".4"/><rect x="2.6" y="18.10" width="5.4" height=".7" fill="#555" opacity=".45"/><rect x="11.00" y="18.10" width="3.3" height=".7" fill="#666" opacity=".4"/><rect x="16.00" y="18.10" width="3.3" height=".7" fill="#666" opacity=".4"/><rect x="21.00" y="18.10" width="3.3" height=".7" fill="#666" opacity=".4"/><rect x="34.2" y="8.5" width="4.8" height="1.9" rx=".7" fill="#f2f2f2" stroke="#999" stroke-width=".4"/><rect x="27.9" y="11.6" width="30.0" height="18.0" fill="#fff" stroke="#c8c8ce" stroke-width=".45"/><rect x="55.0" y="17.6" width="1.3" height="6.6" fill="#999" opacity=".6"/></svg><svg style="left:32.95px;top:13.05px" width="18.50" height="16.10" viewBox="-9.25 -8.05 18.50 16.10"><path d="M0 0 L0.00 -7.05 A8.25 7.05 0 0 1 5.30 5.40 Z" fill="#9898f0" stroke="#9898f0" stroke-width="0.15"/><path d="M0 0 L5.30 5.40 A8.25 7.05 0 0 1 2.82 6.62 Z" fill="#8c1444" stroke="#8c1444" stroke-width="0.15"/><path d="M0 0 L2.82 6.62 A8.25 7.05 0 0 1 -1.72 6.90 Z" fill="#fdfdc2" stroke="#fdfdc2" stroke-width="0.15"/><path d="M0 0 L-1.72 6.90 A8.25 7.05 0 0 1 -6.84 3.94 Z" fill="#c0f0f0" stroke="#c0f0f0" stroke-width="0.15"/><path d="M0 0 L-6.84 3.94 A8.25 7.05 0 0 1 -8.17 0.98 Z" fill="#50085c" stroke="#50085c" stroke-width="0.15"/><path d="M0 0 L-8.17 0.98 A8.25 7.05 0 0 1 -8.19 -0.86 Z" fill="#fa7a56" stroke="#fa7a56" stroke-width="0.15"/><path d="M0 0 L-8.19 -0.86 A8.25 7.05 0 0 1 -0.00 -7.05 Z" fill="#1452c4" stroke="#1452c4" stroke-width="0.15"/><ellipse cx="0" cy="0" rx="8.25" ry="7.05" fill="none" stroke="#445" stroke-width="0.25" opacity=".5"/></svg><div style="left:0.00px;top:43.20px;width:70.10px;height:1.60px;background:#e8e5d6;border-top:0.3px solid #c8c5b4"></div><div style="left:1.60px;top:41.80px;width:16.00px;height:1.40px;background:#f1efe4;"></div></div><div style="left:0.00px;top:61.60px;width:95.40px;height:2.60px;background:linear-gradient(to bottom,#3a74e6 0,#2458d8 40%,#1f4cc4 100%);"></div><div style="left:0.00px;top:61.60px;width:9.20px;height:2.60px;background:linear-gradient(to bottom,#4cae4c,#2f8a2f);border-radius:0 1px 1px 0"></div><div style="left:86.40px;top:61.60px;width:9.00px;height:2.60px;background:linear-gradient(to bottom,#2aa0f0,#1282dc);"></div><div style="left:0.00px;top:0.00px;width:0.65px;height:64.20px;background:rgba(226,232,244,.7);"></div><div style="left:94.75px;top:0.00px;width:0.65px;height:64.20px;background:rgba(226,232,244,.7);"></div><div style="left:0.00px;top:0.00px;width:95.40px;height:0.65px;background:rgba(226,232,244,.7);"></div><div style="left:0.00px;top:63.55px;width:95.40px;height:0.65px;background:rgba(226,232,244,.7);"></div></div>
<div class="lbl" style="left:336.25px;top:89.55px">Student F (WORKSTATION-6)</div>
<div class="th" style="left:434.4px;top:23.6px"><div style="left:0.60px;top:0.20px;width:94.20px;height:61.40px;overflow:hidden;background:#fff;"><div style="left:0.00px;top:7.80px;width:94.20px;height:53.60px;background:#fff;"></div><svg style="left:0;top:0" width="94.20" height="61.40" viewBox="0 0 94.20 61.40"><path d="M0 9.66H94.20M0 11.52H94.20M0 13.38H94.20M0 15.24H94.20M0 17.10H94.20M0 18.96H94.20M0 20.82H94.20M0 22.68H94.20M0 24.54H94.20M0 26.40H94.20M0 28.26H94.20M0 30.12H94.20M0 31.98H94.20M0 33.84H94.20M0 35.70H94.20M0 37.56H94.20M0 39.42H94.20M0 41.28H94.20M0 43.14H94.20M0 45.00H94.20M0 46.86H94.20M0 48.72H94.20M0 50.58H94.20M0 52.44H94.20M0 54.30H94.20M0 56.16H94.20M0 58.02H94.20M0 59.88H94.20" stroke="#f1f2f4" stroke-width=".35" fill="none"/><path d="M1.60 7.80V61.40M7.18 7.80V61.40M12.76 7.80V61.40M18.34 7.80V61.40M23.92 7.80V61.40M29.50 7.80V61.40M35.08 7.80V61.40M40.66 7.80V61.40M46.24 7.80V61.40M51.82 7.80V61.40M57.40 7.80V61.40M62.98 7.80V61.40M68.56 7.80V61.40M74.14 7.80V61.40M79.72 7.80V61.40M85.30 7.80V61.40M90.88 7.80V61.40" stroke="#e4e6ea" stroke-width=".45" fill="none"/></svg><div style="left:0.00px;top:0.00px;width:94.20px;height:2.00px;background:linear-gradient(to right,#2052d6,#336ae2 60%,#2458d6);"></div><div style="left:0.00px;top:2.00px;width:94.20px;height:5.80px;background:linear-gradient(to bottom,#f1eee0 0,#f6f4ea 30%,#f3f0e3 62%,#eae7da 86%,#dddbd0 100%);"></div><svg style="left:0;top:0" width="94.20" height="8.80" viewBox="0 0 94.20 8.80"><rect x="1.60" y="3.20" width=".8" height=".8" fill="#c8aa50" opacity=".55"/><rect x="3.70" y="3.20" width=".8" height=".8" fill="#7f95c4" opacity=".55"/><rect x="5.80" y="3.20" width=".8" height=".8" fill="#b9a468" opacity=".55"/><rect x="7.90" y="3.20" width=".8" height=".8" fill="#8a98b8" opacity=".55"/><rect x="10.00" y="3.20" width=".8" height=".8" fill="#c4b070" opacity=".55"/><rect x="12.10" y="3.20" width=".8" height=".8" fill="#9aa4bc" opacity=".55"/><rect x="14.20" y="3.20" width=".8" height=".8" fill="#c8aa50" opacity=".55"/><rect x="16.30" y="3.20" width=".8" height=".8" fill="#7f95c4" opacity=".55"/><rect x="18.40" y="3.20" width=".8" height=".8" fill="#b9a468" opacity=".55"/><rect x="20.50" y="3.20" width=".8" height=".8" fill="#8a98b8" opacity=".55"/><rect x="22.60" y="3.20" width=".8" height=".8" fill="#c4b070" opacity=".55"/><rect x="24.70" y="3.20" width=".8" height=".8" fill="#9aa4bc" opacity=".55"/><rect x="26.80" y="3.20" width=".8" height=".8" fill="#c8aa50" opacity=".55"/><rect x="28.90" y="3.20" width=".8" height=".8" fill="#7f95c4" opacity=".55"/><rect x="31.00" y="3.20" width=".8" height=".8" fill="#b9a468" opacity=".55"/><rect x="33.10" y="3.20" width=".8" height=".8" fill="#8a98b8" opacity=".55"/><rect x="35.20" y="3.20" width=".8" height=".8" fill="#c4b070" opacity=".55"/><rect x="37.30" y="3.20" width=".8" height=".8" fill="#9aa4bc" opacity=".55"/><rect x="39.40" y="3.20" width=".8" height=".8" fill="#c8aa50" opacity=".55"/><rect x="1.60" y="4.90" width=".8" height=".8" fill="#b9a468" opacity=".5"/><rect x="3.90" y="4.90" width=".8" height=".8" fill="#8a98b8" opacity=".5"/><rect x="6.20" y="4.90" width=".8" height=".8" fill="#c4b070" opacity=".5"/><rect x="8.50" y="4.90" width=".8" height=".8" fill="#9aa4bc" opacity=".5"/><rect x="10.80" y="4.90" width=".8" height=".8" fill="#c8aa50" opacity=".5"/><rect x="13.10" y="4.90" width=".8" height=".8" fill="#7f95c4" opacity=".5"/><rect x="15.40" y="4.90" width=".8" height=".8" fill="#b9a468" opacity=".5"/><rect x="17.70" y="4.90" width=".8" height=".8" fill="#8a98b8" opacity=".5"/><rect x="20.00" y="4.90" width=".8" height=".8" fill="#c4b070" opacity=".5"/><rect x="22.30" y="4.90" width=".8" height=".8" fill="#9aa4bc" opacity=".5"/><rect x="24.60" y="4.90" width=".8" height=".8" fill="#c8aa50" opacity=".5"/><rect x="26.90" y="4.90" width=".8" height=".8" fill="#7f95c4" opacity=".5"/><rect x="29.20" y="4.90" width=".8" height=".8" fill="#b9a468" opacity=".5"/><rect x="31.50" y="4.90" width=".8" height=".8" fill="#8a98b8" opacity=".5"/><rect x="48.98" y="3.20" width=".7" height=".8" fill="#8a98b8" opacity=".45"/><rect x="51.88" y="3.20" width=".7" height=".8" fill="#c4b070" opacity=".45"/><rect x="54.78" y="3.20" width=".7" height=".8" fill="#9aa4bc" opacity=".45"/><rect x="57.68" y="3.20" width=".7" height=".8" fill="#c8aa50" opacity=".45"/><rect x="60.58" y="3.20" width=".7" height=".8" fill="#7f95c4" opacity=".45"/><rect x="63.48" y="3.20" width=".7" height=".8" fill="#b9a468" opacity=".45"/><rect x="66.38" y="3.20" width=".7" height=".8" fill="#8a98b8" opacity=".45"/><rect x="69.28" y="3.20" width=".7" height=".8" fill="#c4b070" opacity=".45"/><rect x="72.18" y="3.20" width=".7" height=".8" fill="#9aa4bc" opacity=".45"/><rect x="75.08" y="3.20" width=".7" height=".8" fill="#c8aa50" opacity=".45"/><rect x="77.98" y="3.20" width=".7" height=".8" fill="#7f95c4" opacity=".45"/><rect x="33.8" y="6.90" width="5.0" height=".9" fill="#7a9ae0" opacity=".55"/></svg><div style="left:0.00px;top:7.80px;width:1.50px;height:53.60px;background:#ece9dc;"></div><svg style="left:0;top:0" width="94.20" height="61.40" viewBox="0 -0.85 94.20 61.40"><rect x="2.8" y="7.6" width="13.4" height="1.15" fill="#2c2c2c" opacity=".8"/><rect x="2.8" y="9.5" width="7.4" height=".75" fill="#555" opacity=".6"/><rect x="2.6" y="12.90" width="3.4" height=".7" fill="#555" opacity=".45"/><rect x="16.00" y="12.90" width="3.3" height=".7" fill="#666" opacity=".4"/><rect x="21.00" y="12.90" width="3.3" height=".7" fill="#666" opacity=".4"/><rect x="2.6" y="14.20" width="5.4" height=".7" fill="#555" opacity=".45"/><rect x="11.00" y="14.20" width="3.3" height=".7" fill="#666" opacity=".4"/><rect x="16.00" y="14.20" width="3.3" height=".7" fill="#666" opacity=".4"/><rect x="21.00" y="14.20" width="3.3" height=".7" fill="#666" opacity=".4"/><rect x="2.6" y="15.50" width="5.4" height=".7" fill="#555" opacity=".45"/><rect x="11.00" y="15.50" width="3.3" height=".7" fill="#666" opacity=".4"/><rect x="16.00" y="15.50" width="3.3" height=".7" fill="#666" opacity=".4"/><rect x="21.00" y="15.50" width="3.3" height=".7" fill="#666" opacity=".4"/><rect x="2.6" y="16.80" width="5.4" height=".7" fill="#555" opacity=".45"/><rect x="11.00" y="16.80" width="3.3" height=".7" fill="#666" opacity=".4"/><rect x="16.00" y="16.80" width="3.3" height=".7" fill="#666" opacity=".4"/><rect x="21.00" y="16.80" width="3.3" height=".7" fill="#666" opacity=".4"/><rect x="2.6" y="18.10" width="5.4" height=".7" fill="#555" opacity=".45"/><rect x="11.00" y="18.10" width="3.3" height=".7" fill="#666" opacity=".4"/><rect x="16.00" y="18.10" width="3.3" height=".7" fill="#666" opacity=".4"/><rect x="21.00" y="18.10" width="3.3" height=".7" fill="#666" opacity=".4"/><rect x="34.2" y="8.5" width="4.8" height="1.9" rx=".7" fill="#f2f2f2" stroke="#999" stroke-width=".4"/><rect x="27.9" y="11.6" width="30.0" height="18.0" fill="#fff" stroke="#c8c8ce" stroke-width=".45"/><rect x="55.0" y="17.6" width="1.3" height="6.6" fill="#999" opacity=".6"/></svg><svg style="left:32.95px;top:13.50px" width="18.50" height="16.10" viewBox="-9.25 -8.05 18.50 16.10"><path d="M0 0 L0.00 -7.05 A8.25 7.05 0 0 1 5.30 5.40 Z" fill="#9898f0" stroke="#9898f0" stroke-width="0.15"/><path d="M0 0 L5.30 5.40 A8.25 7.05 0 0 1 2.82 6.62 Z" fill="#8c1444" stroke="#8c1444" stroke-width="0.15"/><path d="M0 0 L2.82 6.62 A8.25 7.05 0 0 1 -1.72 6.90 Z" fill="#fdfdc2" stroke="#fdfdc2" stroke-width="0.15"/><path d="M0 0 L-1.72 6.90 A8.25 7.05 0 0 1 -6.84 3.94 Z" fill="#c0f0f0" stroke="#c0f0f0" stroke-width="0.15"/><path d="M0 0 L-6.84 3.94 A8.25 7.05 0 0 1 -8.17 0.98 Z" fill="#50085c" stroke="#50085c" stroke-width="0.15"/><path d="M0 0 L-8.17 0.98 A8.25 7.05 0 0 1 -8.19 -0.86 Z" fill="#fa7a56" stroke="#fa7a56" stroke-width="0.15"/><path d="M0 0 L-8.19 -0.86 A8.25 7.05 0 0 1 -0.00 -7.05 Z" fill="#1452c4" stroke="#1452c4" stroke-width="0.15"/><ellipse cx="0" cy="0" rx="8.25" ry="7.05" fill="none" stroke="#445" stroke-width="0.25" opacity=".5"/></svg><div style="left:0.00px;top:59.80px;width:94.20px;height:1.60px;background:#e8e5d6;border-top:0.3px solid #c8c5b4"></div><div style="left:1.60px;top:58.40px;width:16.00px;height:1.40px;background:#f1efe4;"></div></div><div style="left:0.00px;top:61.60px;width:95.40px;height:2.60px;background:linear-gradient(to bottom,#3a74e6 0,#2458d8 40%,#1f4cc4 100%);"></div><div style="left:0.00px;top:61.60px;width:9.20px;height:2.60px;background:linear-gradient(to bottom,#4cae4c,#2f8a2f);border-radius:0 1px 1px 0"></div><div style="left:86.40px;top:61.60px;width:9.00px;height:2.60px;background:linear-gradient(to bottom,#2aa0f0,#1282dc);"></div><div style="left:0.00px;top:0.00px;width:0.65px;height:64.20px;background:rgba(226,232,244,.7);"></div><div style="left:94.75px;top:0.00px;width:0.65px;height:64.20px;background:rgba(226,232,244,.7);"></div></div>
<div class="lbl" style="left:438.80px;top:90.65px">Student G (WORKSTATION-7)</div>
<div class="th" style="left:10.6px;top:97.2px"><div style="left:0.60px;top:0.20px;width:94.20px;height:61.40px;overflow:hidden;background:#fff;"><div style="left:0.00px;top:7.80px;width:94.20px;height:53.60px;background:#fff;"></div><svg style="left:0;top:0" width="94.20" height="61.40" viewBox="0 0 94.20 61.40"><path d="M0 9.66H94.20M0 11.52H94.20M0 13.38H94.20M0 15.24H94.20M0 17.10H94.20M0 18.96H94.20M0 20.82H94.20M0 22.68H94.20M0 24.54H94.20M0 26.40H94.20M0 28.26H94.20M0 30.12H94.20M0 31.98H94.20M0 33.84H94.20M0 35.70H94.20M0 37.56H94.20M0 39.42H94.20M0 41.28H94.20M0 43.14H94.20M0 45.00H94.20M0 46.86H94.20M0 48.72H94.20M0 50.58H94.20M0 52.44H94.20M0 54.30H94.20M0 56.16H94.20M0 58.02H94.20M0 59.88H94.20" stroke="#f1f2f4" stroke-width=".35" fill="none"/><path d="M1.60 7.80V61.40M7.18 7.80V61.40M12.76 7.80V61.40M18.34 7.80V61.40M23.92 7.80V61.40M29.50 7.80V61.40M35.08 7.80V61.40M40.66 7.80V61.40M46.24 7.80V61.40M51.82 7.80V61.40M57.40 7.80V61.40M62.98 7.80V61.40M68.56 7.80V61.40M74.14 7.80V61.40M79.72 7.80V61.40M85.30 7.80V61.40M90.88 7.80V61.40" stroke="#e4e6ea" stroke-width=".45" fill="none"/></svg><div style="left:0.00px;top:0.00px;width:94.20px;height:2.00px;background:linear-gradient(to right,#2052d6,#336ae2 60%,#2458d6);"></div><div style="left:0.00px;top:2.00px;width:94.20px;height:5.80px;background:linear-gradient(to bottom,#f1eee0 0,#f6f4ea 30%,#f3f0e3 62%,#eae7da 86%,#dddbd0 100%);"></div><svg style="left:0;top:0" width="94.20" height="8.80" viewBox="0 0 94.20 8.80"><rect x="1.60" y="3.20" width=".8" height=".8" fill="#c8aa50" opacity=".55"/><rect x="3.70" y="3.20" width=".8" height=".8" fill="#7f95c4" opacity=".55"/><rect x="5.80" y="3.20" width=".8" height=".8" fill="#b9a468" opacity=".55"/><rect x="7.90" y="3.20" width=".8" height=".8" fill="#8a98b8" opacity=".55"/><rect x="10.00" y="3.20" width=".8" height=".8" fill="#c4b070" opacity=".55"/><rect x="12.10" y="3.20" width=".8" height=".8" fill="#9aa4bc" opacity=".55"/><rect x="14.20" y="3.20" width=".8" height=".8" fill="#c8aa50" opacity=".55"/><rect x="16.30" y="3.20" width=".8" height=".8" fill="#7f95c4" opacity=".55"/><rect x="18.40" y="3.20" width=".8" height=".8" fill="#b9a468" opacity=".55"/><rect x="20.50" y="3.20" width=".8" height=".8" fill="#8a98b8" opacity=".55"/><rect x="22.60" y="3.20" width=".8" height=".8" fill="#c4b070" opacity=".55"/><rect x="24.70" y="3.20" width=".8" height=".8" fill="#9aa4bc" opacity=".55"/><rect x="26.80" y="3.20" width=".8" height=".8" fill="#c8aa50" opacity=".55"/><rect x="28.90" y="3.20" width=".8" height=".8" fill="#7f95c4" opacity=".55"/><rect x="31.00" y="3.20" width=".8" height=".8" fill="#b9a468" opacity=".55"/><rect x="33.10" y="3.20" width=".8" height=".8" fill="#8a98b8" opacity=".55"/><rect x="35.20" y="3.20" width=".8" height=".8" fill="#c4b070" opacity=".55"/><rect x="37.30" y="3.20" width=".8" height=".8" fill="#9aa4bc" opacity=".55"/><rect x="39.40" y="3.20" width=".8" height=".8" fill="#c8aa50" opacity=".55"/><rect x="1.60" y="4.90" width=".8" height=".8" fill="#b9a468" opacity=".5"/><rect x="3.90" y="4.90" width=".8" height=".8" fill="#8a98b8" opacity=".5"/><rect x="6.20" y="4.90" width=".8" height=".8" fill="#c4b070" opacity=".5"/><rect x="8.50" y="4.90" width=".8" height=".8" fill="#9aa4bc" opacity=".5"/><rect x="10.80" y="4.90" width=".8" height=".8" fill="#c8aa50" opacity=".5"/><rect x="13.10" y="4.90" width=".8" height=".8" fill="#7f95c4" opacity=".5"/><rect x="15.40" y="4.90" width=".8" height=".8" fill="#b9a468" opacity=".5"/><rect x="17.70" y="4.90" width=".8" height=".8" fill="#8a98b8" opacity=".5"/><rect x="20.00" y="4.90" width=".8" height=".8" fill="#c4b070" opacity=".5"/><rect x="22.30" y="4.90" width=".8" height=".8" fill="#9aa4bc" opacity=".5"/><rect x="24.60" y="4.90" width=".8" height=".8" fill="#c8aa50" opacity=".5"/><rect x="26.90" y="4.90" width=".8" height=".8" fill="#7f95c4" opacity=".5"/><rect x="29.20" y="4.90" width=".8" height=".8" fill="#b9a468" opacity=".5"/><rect x="31.50" y="4.90" width=".8" height=".8" fill="#8a98b8" opacity=".5"/><rect x="48.98" y="3.20" width=".7" height=".8" fill="#8a98b8" opacity=".45"/><rect x="51.88" y="3.20" width=".7" height=".8" fill="#c4b070" opacity=".45"/><rect x="54.78" y="3.20" width=".7" height=".8" fill="#9aa4bc" opacity=".45"/><rect x="57.68" y="3.20" width=".7" height=".8" fill="#c8aa50" opacity=".45"/><rect x="60.58" y="3.20" width=".7" height=".8" fill="#7f95c4" opacity=".45"/><rect x="63.48" y="3.20" width=".7" height=".8" fill="#b9a468" opacity=".45"/><rect x="66.38" y="3.20" width=".7" height=".8" fill="#8a98b8" opacity=".45"/><rect x="69.28" y="3.20" width=".7" height=".8" fill="#c4b070" opacity=".45"/><rect x="72.18" y="3.20" width=".7" height=".8" fill="#9aa4bc" opacity=".45"/><rect x="75.08" y="3.20" width=".7" height=".8" fill="#c8aa50" opacity=".45"/><rect x="77.98" y="3.20" width=".7" height=".8" fill="#7f95c4" opacity=".45"/><rect x="33.8" y="6.90" width="5.0" height=".9" fill="#7a9ae0" opacity=".55"/></svg><div style="left:0.00px;top:7.80px;width:1.50px;height:53.60px;background:#ece9dc;"></div><svg style="left:0;top:0" width="94.20" height="61.40" viewBox="0 -0.85 94.20 61.40"><rect x="2.8" y="7.6" width="13.4" height="1.15" fill="#2c2c2c" opacity=".8"/><rect x="2.8" y="9.5" width="7.4" height=".75" fill="#555" opacity=".6"/><rect x="2.6" y="12.90" width="3.4" height=".7" fill="#555" opacity=".45"/><rect x="16.00" y="12.90" width="3.3" height=".7" fill="#666" opacity=".4"/><rect x="21.00" y="12.90" width="3.3" height=".7" fill="#666" opacity=".4"/><rect x="2.6" y="14.20" width="5.4" height=".7" fill="#555" opacity=".45"/><rect x="11.00" y="14.20" width="3.3" height=".7" fill="#666" opacity=".4"/><rect x="16.00" y="14.20" width="3.3" height=".7" fill="#666" opacity=".4"/><rect x="21.00" y="14.20" width="3.3" height=".7" fill="#666" opacity=".4"/><rect x="2.6" y="15.50" width="5.4" height=".7" fill="#555" opacity=".45"/><rect x="11.00" y="15.50" width="3.3" height=".7" fill="#666" opacity=".4"/><rect x="16.00" y="15.50" width="3.3" height=".7" fill="#666" opacity=".4"/><rect x="21.00" y="15.50" width="3.3" height=".7" fill="#666" opacity=".4"/><rect x="2.6" y="16.80" width="5.4" height=".7" fill="#555" opacity=".45"/><rect x="11.00" y="16.80" width="3.3" height=".7" fill="#666" opacity=".4"/><rect x="16.00" y="16.80" width="3.3" height=".7" fill="#666" opacity=".4"/><rect x="21.00" y="16.80" width="3.3" height=".7" fill="#666" opacity=".4"/><rect x="2.6" y="18.10" width="5.4" height=".7" fill="#555" opacity=".45"/><rect x="11.00" y="18.10" width="3.3" height=".7" fill="#666" opacity=".4"/><rect x="16.00" y="18.10" width="3.3" height=".7" fill="#666" opacity=".4"/><rect x="21.00" y="18.10" width="3.3" height=".7" fill="#666" opacity=".4"/><rect x="34.2" y="8.5" width="4.8" height="1.9" rx=".7" fill="#f2f2f2" stroke="#999" stroke-width=".4"/><rect x="27.9" y="11.6" width="30.0" height="18.0" fill="#fff" stroke="#c8c8ce" stroke-width=".45"/><rect x="55.0" y="17.6" width="1.3" height="6.6" fill="#999" opacity=".6"/></svg><svg style="left:32.95px;top:13.50px" width="18.50" height="16.10" viewBox="-9.25 -8.05 18.50 16.10"><path d="M0 0 L0.00 -7.05 A8.25 7.05 0 0 1 5.30 5.40 Z" fill="#9898f0" stroke="#9898f0" stroke-width="0.15"/><path d="M0 0 L5.30 5.40 A8.25 7.05 0 0 1 2.82 6.62 Z" fill="#8c1444" stroke="#8c1444" stroke-width="0.15"/><path d="M0 0 L2.82 6.62 A8.25 7.05 0 0 1 -1.72 6.90 Z" fill="#fdfdc2" stroke="#fdfdc2" stroke-width="0.15"/><path d="M0 0 L-1.72 6.90 A8.25 7.05 0 0 1 -6.84 3.94 Z" fill="#c0f0f0" stroke="#c0f0f0" stroke-width="0.15"/><path d="M0 0 L-6.84 3.94 A8.25 7.05 0 0 1 -8.17 0.98 Z" fill="#50085c" stroke="#50085c" stroke-width="0.15"/><path d="M0 0 L-8.17 0.98 A8.25 7.05 0 0 1 -8.19 -0.86 Z" fill="#fa7a56" stroke="#fa7a56" stroke-width="0.15"/><path d="M0 0 L-8.19 -0.86 A8.25 7.05 0 0 1 -0.00 -7.05 Z" fill="#1452c4" stroke="#1452c4" stroke-width="0.15"/><ellipse cx="0" cy="0" rx="8.25" ry="7.05" fill="none" stroke="#445" stroke-width="0.25" opacity=".5"/></svg><div style="left:0.00px;top:59.80px;width:94.20px;height:1.60px;background:#e8e5d6;border-top:0.3px solid #c8c5b4"></div><div style="left:1.60px;top:58.40px;width:16.00px;height:1.40px;background:#f1efe4;"></div></div><div style="left:29.4px;top:19.3px;width:62.0px;height:39.2px;overflow:hidden;background:#0b7a1c;box-shadow:0 0 0 0.4px #223"><div style="left:0.00px;top:0.00px;width:62.00px;height:1.50px;background:linear-gradient(to right,#10182c,#2a3a6a 70%,#1a2444);"></div><div style="left:0.00px;top:1.50px;width:62.00px;height:1.30px;background:#e2dfd2;"></div><div style="left:0.00px;top:2.80px;width:62.00px;height:35.00px;background:#0a7b1c;"></div><svg style="left:0;top:0" width="62.0" height="39.2" viewBox="0 0 62.0 39.2"><rect x="2.9" y="3.9" width="5.6" height="6.3" rx=".4" fill="#7cc0f0" stroke="#1a4a22" stroke-width=".2"/><rect x="4.58" y="6.04" width="2.24" height="2.02" fill="#e8f4ff" opacity=".8"/><rect x="3.40" y="4.40" width="1" height="1.3" fill="#e8f4ff" opacity=".8"/><rect x="7.00" y="8.40" width="1" height="1.3" fill="#e8f4ff" opacity=".8"/><rect x="28.4" y="3.0" width="5.8" height="8.0" rx=".4" fill="#fff" stroke="#1a4a22" stroke-width=".2"/><rect x="30.14" y="5.72" width="2.32" height="2.56" fill="#222" opacity=".8"/><rect x="28.90" y="3.50" width="1" height="1.3" fill="#222" opacity=".8"/><rect x="32.70" y="9.20" width="1" height="1.3" fill="#222" opacity=".8"/><rect x="36.4" y="3.0" width="5.8" height="8.0" rx=".4" fill="#fff" stroke="#1a4a22" stroke-width=".2"/><rect x="38.14" y="5.72" width="2.32" height="2.56" fill="#e02020" opacity=".8"/><rect x="36.90" y="3.50" width="1" height="1.3" fill="#e02020" opacity=".8"/><rect x="40.70" y="9.20" width="1" height="1.3" fill="#e02020" opacity=".8"/><rect x="2.9" y="11.9" width="5.8" height="9.3" rx=".4" fill="#fff" stroke="#1a4a22" stroke-width=".2"/><rect x="4.64" y="15.06" width="2.32" height="2.98" fill="#e02020" opacity=".8"/><rect x="3.40" y="12.40" width="1" height="1.3" fill="#e02020" opacity=".8"/><rect x="7.20" y="19.40" width="1" height="1.3" fill="#e02020" opacity=".8"/><rect x="11.2" y="11.9" width="5.8" height="9.3" rx=".4" fill="#fff" stroke="#1a4a22" stroke-width=".2"/><rect x="12.94" y="15.06" width="2.32" height="2.98" fill="#222" opacity=".8"/><rect x="11.70" y="12.40" width="1" height="1.3" fill="#222" opacity=".8"/><rect x="15.50" y="19.40" width="1" height="1.3" fill="#222" opacity=".8"/><rect x="19.6" y="11.5" width="5.8" height="7.6" rx=".4" fill="#fff" stroke="#1a4a22" stroke-width=".2"/><rect x="21.34" y="14.08" width="2.32" height="2.43" fill="#444" opacity=".8"/><rect x="20.10" y="12.00" width="1" height="1.3" fill="#444" opacity=".8"/><rect x="23.90" y="17.30" width="1" height="1.3" fill="#444" opacity=".8"/><rect x="27.9" y="11.9" width="5.8" height="9.3" rx=".4" fill="#fff" stroke="#1a4a22" stroke-width=".2"/><rect x="29.64" y="15.06" width="2.32" height="2.98" fill="#7a2a16" opacity=".8"/><rect x="28.40" y="12.40" width="1" height="1.3" fill="#7a2a16" opacity=".8"/><rect x="32.20" y="19.40" width="1" height="1.3" fill="#7a2a16" opacity=".8"/><rect x="36.2" y="11.9" width="5.8" height="9.3" rx=".4" fill="#fff" stroke="#1a4a22" stroke-width=".2"/><rect x="37.94" y="15.06" width="2.32" height="2.98" fill="#e02020" opacity=".8"/><rect x="36.70" y="12.40" width="1" height="1.3" fill="#e02020" opacity=".8"/><rect x="40.50" y="19.40" width="1" height="1.3" fill="#e02020" opacity=".8"/><rect x="44.6" y="11.9" width="5.8" height="15.3" rx=".4" fill="#fff" stroke="#1a4a22" stroke-width=".2"/><rect x="46.34" y="17.10" width="2.32" height="4.90" fill="#e02020" opacity=".8"/><rect x="45.10" y="12.40" width="1" height="1.3" fill="#e02020" opacity=".8"/><rect x="48.90" y="25.40" width="1" height="1.3" fill="#e02020" opacity=".8"/><rect x="52.9" y="11.9" width="5.8" height="9.3" rx=".4" fill="#fff" stroke="#1a4a22" stroke-width=".2"/><rect x="54.64" y="15.06" width="2.32" height="2.98" fill="#e02020" opacity=".8"/><rect x="53.40" y="12.40" width="1" height="1.3" fill="#e02020" opacity=".8"/><rect x="57.20" y="19.40" width="1" height="1.3" fill="#e02020" opacity=".8"/></svg><div style="left:0.00px;top:37.80px;width:62.00px;height:1.40px;background:#e8e5d8;"></div></div><div style="left:0.00px;top:61.60px;width:95.40px;height:2.60px;background:linear-gradient(to bottom,#3a74e6 0,#2458d8 40%,#1f4cc4 100%);"></div><div style="left:0.00px;top:61.60px;width:9.20px;height:2.60px;background:linear-gradient(to bottom,#4cae4c,#2f8a2f);border-radius:0 1px 1px 0"></div><div style="left:86.40px;top:61.60px;width:9.00px;height:2.60px;background:linear-gradient(to bottom,#2aa0f0,#1282dc);"></div><div style="left:0.00px;top:0.00px;width:0.65px;height:64.20px;background:rgba(226,232,244,.7);"></div><div style="left:94.75px;top:0.00px;width:0.65px;height:64.20px;background:rgba(226,232,244,.7);"></div></div>
<div class="lbl" style="left:16.60px;top:164.05px">Student C (WORKSTATION-3)</div>
<div class="th" style="left:10.6px;top:174.2px"><div style="left:0.60px;top:0.20px;width:94.20px;height:61.40px;overflow:hidden;background:#fff;"><div style="left:0.00px;top:7.80px;width:94.20px;height:53.60px;background:#fff;"></div><svg style="left:0;top:0" width="94.20" height="61.40" viewBox="0 0 94.20 61.40"><path d="M0 9.66H94.20M0 11.52H94.20M0 13.38H94.20M0 15.24H94.20M0 17.10H94.20M0 18.96H94.20M0 20.82H94.20M0 22.68H94.20M0 24.54H94.20M0 26.40H94.20M0 28.26H94.20M0 30.12H94.20M0 31.98H94.20M0 33.84H94.20M0 35.70H94.20M0 37.56H94.20M0 39.42H94.20M0 41.28H94.20M0 43.14H94.20M0 45.00H94.20M0 46.86H94.20M0 48.72H94.20M0 50.58H94.20M0 52.44H94.20M0 54.30H94.20M0 56.16H94.20M0 58.02H94.20M0 59.88H94.20" stroke="#f1f2f4" stroke-width=".35" fill="none"/><path d="M1.60 7.80V61.40M7.18 7.80V61.40M12.76 7.80V61.40M18.34 7.80V61.40M23.92 7.80V61.40M29.50 7.80V61.40M35.08 7.80V61.40M40.66 7.80V61.40M46.24 7.80V61.40M51.82 7.80V61.40M57.40 7.80V61.40M62.98 7.80V61.40M68.56 7.80V61.40M74.14 7.80V61.40M79.72 7.80V61.40M85.30 7.80V61.40M90.88 7.80V61.40" stroke="#e4e6ea" stroke-width=".45" fill="none"/></svg><div style="left:0.00px;top:0.00px;width:94.20px;height:2.00px;background:linear-gradient(to right,#2052d6,#336ae2 60%,#2458d6);"></div><div style="left:0.00px;top:2.00px;width:94.20px;height:5.80px;background:linear-gradient(to bottom,#f1eee0 0,#f6f4ea 30%,#f3f0e3 62%,#eae7da 86%,#dddbd0 100%);"></div><svg style="left:0;top:0" width="94.20" height="8.80" viewBox="0 0 94.20 8.80"><rect x="1.60" y="3.20" width=".8" height=".8" fill="#c8aa50" opacity=".55"/><rect x="3.70" y="3.20" width=".8" height=".8" fill="#7f95c4" opacity=".55"/><rect x="5.80" y="3.20" width=".8" height=".8" fill="#b9a468" opacity=".55"/><rect x="7.90" y="3.20" width=".8" height=".8" fill="#8a98b8" opacity=".55"/><rect x="10.00" y="3.20" width=".8" height=".8" fill="#c4b070" opacity=".55"/><rect x="12.10" y="3.20" width=".8" height=".8" fill="#9aa4bc" opacity=".55"/><rect x="14.20" y="3.20" width=".8" height=".8" fill="#c8aa50" opacity=".55"/><rect x="16.30" y="3.20" width=".8" height=".8" fill="#7f95c4" opacity=".55"/><rect x="18.40" y="3.20" width=".8" height=".8" fill="#b9a468" opacity=".55"/><rect x="20.50" y="3.20" width=".8" height=".8" fill="#8a98b8" opacity=".55"/><rect x="22.60" y="3.20" width=".8" height=".8" fill="#c4b070" opacity=".55"/><rect x="24.70" y="3.20" width=".8" height=".8" fill="#9aa4bc" opacity=".55"/><rect x="26.80" y="3.20" width=".8" height=".8" fill="#c8aa50" opacity=".55"/><rect x="28.90" y="3.20" width=".8" height=".8" fill="#7f95c4" opacity=".55"/><rect x="31.00" y="3.20" width=".8" height=".8" fill="#b9a468" opacity=".55"/><rect x="33.10" y="3.20" width=".8" height=".8" fill="#8a98b8" opacity=".55"/><rect x="35.20" y="3.20" width=".8" height=".8" fill="#c4b070" opacity=".55"/><rect x="37.30" y="3.20" width=".8" height=".8" fill="#9aa4bc" opacity=".55"/><rect x="39.40" y="3.20" width=".8" height=".8" fill="#c8aa50" opacity=".55"/><rect x="1.60" y="4.90" width=".8" height=".8" fill="#b9a468" opacity=".5"/><rect x="3.90" y="4.90" width=".8" height=".8" fill="#8a98b8" opacity=".5"/><rect x="6.20" y="4.90" width=".8" height=".8" fill="#c4b070" opacity=".5"/><rect x="8.50" y="4.90" width=".8" height=".8" fill="#9aa4bc" opacity=".5"/><rect x="10.80" y="4.90" width=".8" height=".8" fill="#c8aa50" opacity=".5"/><rect x="13.10" y="4.90" width=".8" height=".8" fill="#7f95c4" opacity=".5"/><rect x="15.40" y="4.90" width=".8" height=".8" fill="#b9a468" opacity=".5"/><rect x="17.70" y="4.90" width=".8" height=".8" fill="#8a98b8" opacity=".5"/><rect x="20.00" y="4.90" width=".8" height=".8" fill="#c4b070" opacity=".5"/><rect x="22.30" y="4.90" width=".8" height=".8" fill="#9aa4bc" opacity=".5"/><rect x="24.60" y="4.90" width=".8" height=".8" fill="#c8aa50" opacity=".5"/><rect x="26.90" y="4.90" width=".8" height=".8" fill="#7f95c4" opacity=".5"/><rect x="29.20" y="4.90" width=".8" height=".8" fill="#b9a468" opacity=".5"/><rect x="31.50" y="4.90" width=".8" height=".8" fill="#8a98b8" opacity=".5"/><rect x="48.98" y="3.20" width=".7" height=".8" fill="#8a98b8" opacity=".45"/><rect x="51.88" y="3.20" width=".7" height=".8" fill="#c4b070" opacity=".45"/><rect x="54.78" y="3.20" width=".7" height=".8" fill="#9aa4bc" opacity=".45"/><rect x="57.68" y="3.20" width=".7" height=".8" fill="#c8aa50" opacity=".45"/><rect x="60.58" y="3.20" width=".7" height=".8" fill="#7f95c4" opacity=".45"/><rect x="63.48" y="3.20" width=".7" height=".8" fill="#b9a468" opacity=".45"/><rect x="66.38" y="3.20" width=".7" height=".8" fill="#8a98b8" opacity=".45"/><rect x="69.28" y="3.20" width=".7" height=".8" fill="#c4b070" opacity=".45"/><rect x="72.18" y="3.20" width=".7" height=".8" fill="#9aa4bc" opacity=".45"/><rect x="75.08" y="3.20" width=".7" height=".8" fill="#c8aa50" opacity=".45"/><rect x="77.98" y="3.20" width=".7" height=".8" fill="#7f95c4" opacity=".45"/><rect x="33.8" y="6.90" width="5.0" height=".9" fill="#7a9ae0" opacity=".55"/></svg><div style="left:0.00px;top:7.80px;width:1.50px;height:53.60px;background:#ece9dc;"></div><svg style="left:0;top:0" width="94.20" height="61.40" viewBox="0 -0.85 94.20 61.40"><rect x="2.8" y="7.6" width="13.4" height="1.15" fill="#2c2c2c" opacity=".8"/><rect x="2.8" y="9.5" width="7.4" height=".75" fill="#555" opacity=".6"/><rect x="2.6" y="12.90" width="3.4" height=".7" fill="#555" opacity=".45"/><rect x="16.00" y="12.90" width="3.3" height=".7" fill="#666" opacity=".4"/><rect x="21.00" y="12.90" width="3.3" height=".7" fill="#666" opacity=".4"/><rect x="2.6" y="14.20" width="5.4" height=".7" fill="#555" opacity=".45"/><rect x="11.00" y="14.20" width="3.3" height=".7" fill="#666" opacity=".4"/><rect x="16.00" y="14.20" width="3.3" height=".7" fill="#666" opacity=".4"/><rect x="21.00" y="14.20" width="3.3" height=".7" fill="#666" opacity=".4"/><rect x="2.6" y="15.50" width="5.4" height=".7" fill="#555" opacity=".45"/><rect x="11.00" y="15.50" width="3.3" height=".7" fill="#666" opacity=".4"/><rect x="16.00" y="15.50" width="3.3" height=".7" fill="#666" opacity=".4"/><rect x="21.00" y="15.50" width="3.3" height=".7" fill="#666" opacity=".4"/><rect x="2.6" y="16.80" width="5.4" height=".7" fill="#555" opacity=".45"/><rect x="11.00" y="16.80" width="3.3" height=".7" fill="#666" opacity=".4"/><rect x="16.00" y="16.80" width="3.3" height=".7" fill="#666" opacity=".4"/><rect x="21.00" y="16.80" width="3.3" height=".7" fill="#666" opacity=".4"/><rect x="2.6" y="18.10" width="5.4" height=".7" fill="#555" opacity=".45"/><rect x="11.00" y="18.10" width="3.3" height=".7" fill="#666" opacity=".4"/><rect x="16.00" y="18.10" width="3.3" height=".7" fill="#666" opacity=".4"/><rect x="21.00" y="18.10" width="3.3" height=".7" fill="#666" opacity=".4"/><rect x="34.2" y="8.5" width="4.8" height="1.9" rx=".7" fill="#f2f2f2" stroke="#999" stroke-width=".4"/><rect x="27.9" y="11.6" width="30.0" height="18.0" fill="#fff" stroke="#c8c8ce" stroke-width=".45"/><rect x="55.0" y="17.6" width="1.3" height="6.6" fill="#999" opacity=".6"/></svg><svg style="left:32.95px;top:13.50px" width="18.50" height="16.10" viewBox="-9.25 -8.05 18.50 16.10"><path d="M0 0 L0.00 -7.05 A8.25 7.05 0 0 1 5.30 5.40 Z" fill="#9898f0" stroke="#9898f0" stroke-width="0.15"/><path d="M0 0 L5.30 5.40 A8.25 7.05 0 0 1 2.82 6.62 Z" fill="#8c1444" stroke="#8c1444" stroke-width="0.15"/><path d="M0 0 L2.82 6.62 A8.25 7.05 0 0 1 -1.72 6.90 Z" fill="#fdfdc2" stroke="#fdfdc2" stroke-width="0.15"/><path d="M0 0 L-1.72 6.90 A8.25 7.05 0 0 1 -6.84 3.94 Z" fill="#c0f0f0" stroke="#c0f0f0" stroke-width="0.15"/><path d="M0 0 L-6.84 3.94 A8.25 7.05 0 0 1 -8.17 0.98 Z" fill="#50085c" stroke="#50085c" stroke-width="0.15"/><path d="M0 0 L-8.17 0.98 A8.25 7.05 0 0 1 -8.19 -0.86 Z" fill="#fa7a56" stroke="#fa7a56" stroke-width="0.15"/><path d="M0 0 L-8.19 -0.86 A8.25 7.05 0 0 1 -0.00 -7.05 Z" fill="#1452c4" stroke="#1452c4" stroke-width="0.15"/><ellipse cx="0" cy="0" rx="8.25" ry="7.05" fill="none" stroke="#445" stroke-width="0.25" opacity=".5"/></svg><div style="left:0.00px;top:59.80px;width:94.20px;height:1.60px;background:#e8e5d6;border-top:0.3px solid #c8c5b4"></div><div style="left:1.60px;top:58.40px;width:16.00px;height:1.40px;background:#f1efe4;"></div></div><div style="left:0.00px;top:61.60px;width:95.40px;height:2.60px;background:linear-gradient(to bottom,#3a74e6 0,#2458d8 40%,#1f4cc4 100%);"></div><div style="left:0.00px;top:61.60px;width:9.20px;height:2.60px;background:linear-gradient(to bottom,#4cae4c,#2f8a2f);border-radius:0 1px 1px 0"></div><div style="left:86.40px;top:61.60px;width:9.00px;height:2.60px;background:linear-gradient(to bottom,#2aa0f0,#1282dc);"></div><div style="left:0.00px;top:0.00px;width:0.65px;height:64.20px;background:rgba(226,232,244,.7);"></div><div style="left:94.75px;top:0.00px;width:0.65px;height:64.20px;background:rgba(226,232,244,.7);"></div></div>
<div class="lbl" style="left:19.35px;top:240.35px">Student B (WORKSTATION-2)</div>
<div class="th" style="left:10.6px;top:250.6px"><div style="left:0.00px;top:0.00px;width:95.40px;height:64.20px;background:#2752b8;"></div><div style="left:3.00px;top:2.40px;width:1.80px;height:1.70px;background:#e4f4f8;border-radius:0.5px;opacity:.8"></div><div style="left:3.00px;top:9.30px;width:1.80px;height:1.70px;background:#6ab4e8;border-radius:0.5px;opacity:.8"></div><div style="left:3.00px;top:16.20px;width:1.80px;height:1.70px;background:#d8e478;border-radius:0.5px;opacity:.8"></div><div style="left:3.00px;top:23.10px;width:1.80px;height:1.70px;background:#d8e0f0;border-radius:0.5px;opacity:.8"></div><div style="left:7.1px;top:1.85px;width:85.0px;height:57.0px;overflow:hidden;background:#fff;box-shadow:0 0 0 0.5px #3a62c8"><div style="left:0.00px;top:0.00px;width:85.00px;height:1.40px;background:#2a5cd8;"></div><div style="left:0.00px;top:1.40px;width:85.00px;height:3.90px;background:linear-gradient(to bottom,#eef0f4,#dfe2ea);"></div><div style="left:0.00px;top:5.30px;width:85.00px;height:3.40px;background:#fafaf6;"></div><svg style="left:0;top:0" width="85.0" height="57.0" viewBox="0 0 85.0 57.0"><rect x="2" y="0.35" width="16" height=".7" fill="#fff" opacity=".8"/><rect x="2.0" y="2.2" width="1" height="1" fill="#7a88a8" opacity=".6"/><rect x="4.6" y="2.2" width="1" height="1" fill="#7a88a8" opacity=".6"/><rect x="7.2" y="2.2" width="1" height="1" fill="#7a88a8" opacity=".6"/><rect x="9.8" y="2.2" width="1" height="1" fill="#7a88a8" opacity=".6"/><rect x="12.4" y="2.2" width="1" height="1" fill="#7a88a8" opacity=".6"/><rect x="15.0" y="2.2" width="1" height="1" fill="#7a88a8" opacity=".6"/><rect x="17.6" y="2.2" width="1" height="1" fill="#7a88a8" opacity=".6"/><rect x="20" y="1.9" width="36" height="1.5" fill="#fff" stroke="#9aa" stroke-width=".3"/><rect x="60" y="1.9" width="16" height="1.5" fill="#fff" stroke="#9aa" stroke-width=".3"/><rect x="2.0" y="4" width="1.1" height="1" fill="#c8a848" opacity=".7"/><rect x="5.2" y="4" width="1.1" height="1" fill="#c8a848" opacity=".7"/><rect x="8.4" y="4" width="1.1" height="1" fill="#c8a848" opacity=".7"/><rect x="11.6" y="4" width="1.1" height="1" fill="#c8a848" opacity=".7"/><rect x="14.8" y="4" width="1.1" height="1" fill="#c8a848" opacity=".7"/><rect x="4.6" y="6.6" width="3" height=".75" fill="#4452c8" opacity=".7"/><rect x="9.0" y="6.6" width="3" height=".75" fill="#4452c8" opacity=".7"/><rect x="13.4" y="6.6" width="3" height=".75" fill="#4452c8" opacity=".7"/><rect x="17.8" y="6.6" width="3" height=".75" fill="#4452c8" opacity=".7"/><rect x="22.2" y="6.6" width="3" height=".75" fill="#4452c8" opacity=".7"/><rect x="26.6" y="6.6" width="3" height=".75" fill="#4452c8" opacity=".7"/><rect x="73.0" y="6.6" width="3.6" height=".75" fill="#4452c8" opacity=".65"/><rect x="77.6" y="6.6" width="3.6" height=".75" fill="#4452c8" opacity=".65"/><rect x="24.4" y="21.0" width="32" height="1.3" fill="#fff" stroke="#8a8a8a" stroke-width=".3"/><rect x="28.4" y="23.0" width="11.4" height="1.7" fill="#dcdcd6" stroke="#777" stroke-width=".3"/><rect x="40.8" y="23.0" width="13" height="1.7" fill="#dcdcd6" stroke="#777" stroke-width=".3"/><rect x="30" y="23.6" width="8" height=".55" fill="#333" opacity=".6"/><rect x="42.4" y="23.6" width="9.6" height=".55" fill="#333" opacity=".6"/><rect x="58.6" y="21.1" width="6.6" height=".65" fill="#4452c8" opacity=".7"/><rect x="58.6" y="22.4" width="5.4" height=".65" fill="#4452c8" opacity=".7"/><rect x="58.6" y="23.7" width="6" height=".65" fill="#4452c8" opacity=".7"/><rect x="18.2" y="29.9" width="10.4" height=".75" fill="#4452c8" opacity=".75"/><rect x="30.4" y="29.9" width="9.6" height=".75" fill="#4452c8" opacity=".75"/><rect x="41.6" y="29.9" width="8" height=".75" fill="#4452c8" opacity=".75"/><rect x="51" y="29.9" width="13" height=".75" fill="#4452c8" opacity=".75"/><rect x="32.4" y="32.4" width="8.6" height=".75" fill="#4452c8" opacity=".7"/><rect x="42" y="32.4" width="8" height=".75" fill="#4452c8" opacity=".7"/><rect x="37.8" y="35.6" width="6.4" height=".65" fill="#666" opacity=".6"/></svg><div style="left:0;top:10.1px;width:82.6px;text-align:center;font-family:'Liberation Serif',serif;font-size:8.75px;font-weight:bold;line-height:1;letter-spacing:-0.25px"><span style="color:#2a56c6">G</span><span style="color:#d8392c">o</span><span style="color:#e8a80c">o</span><span style="color:#2a56c6">g</span><span style="color:#2a9a3c">l</span><span style="color:#d8392c">e</span></div><div style="left:0.00px;top:55.30px;width:85.00px;height:1.70px;background:#ebe9df;border-top:0.3px solid #c4c2b8"></div><div style="left:83.10px;top:8.70px;width:1.90px;height:46.60px;background:#f0eee8;"></div></div><div style="left:0.00px;top:59.80px;width:95.40px;height:2.00px;background:#2752b8;"></div><div style="left:0.00px;top:61.60px;width:95.40px;height:2.60px;background:linear-gradient(to bottom,#3a74e6 0,#2458d8 40%,#1f4cc4 100%);"></div><div style="left:0.00px;top:61.60px;width:9.20px;height:2.60px;background:linear-gradient(to bottom,#4cae4c,#2f8a2f);border-radius:0 1px 1px 0"></div><div style="left:86.40px;top:61.60px;width:9.00px;height:2.60px;background:linear-gradient(to bottom,#2aa0f0,#1282dc);"></div><div style="left:0.00px;top:0.00px;width:0.65px;height:64.20px;background:rgba(226,232,244,.7);"></div><div style="left:94.75px;top:0.00px;width:0.65px;height:64.20px;background:rgba(226,232,244,.7);"></div><div style="left:0.00px;top:0.00px;width:95.40px;height:0.65px;background:rgba(226,232,244,.7);"></div><div style="left:0.00px;top:63.55px;width:95.40px;height:0.65px;background:rgba(226,232,244,.7);"></div></div>
<div class="lbl" style="left:16.60px;top:317.95px">Student A (WORKSTATION-1)</div>
<div class="th" style="left:211.2px;top:139.7px"><div style="left:0.00px;top:0.00px;width:95.40px;height:64.20px;background:linear-gradient(168deg,#3861b8 0,#3a62b6 28%,#4468b4 50%,#2c4c9c 72%,#1c3276 100%);"></div><svg style="left:0;top:0" width="95.4" height="64.2" viewBox="0 0 95.4 64.2"><defs><filter id="ab"><feGaussianBlur stdDeviation="1.3"/></filter><filter id="ab2"><feGaussianBlur stdDeviation="0.9"/></filter></defs><g filter="url(#ab)"><path d="M0 18 C10 12 22 7 34 7 C44 7 50 9 56 13 C44 11 30 16 16 28 C10 33 4 37 0 39 Z" fill="#8ea6d8" opacity=".85"/><path d="M0 34 C8 36 18 42 28 52 C32 56 35 60 36 64.2 L22 64.2 C18 56 10 48 0 44 Z" fill="#84a0d8" opacity=".8"/><path d="M30 64.2 C36 58 60 56 95.4 44 L95.4 64.2 Z" fill="#13235a" opacity=".9"/><path d="M60 12 C74 14 86 20 95.4 28 L95.4 20 C88 14 76 10 60 9 Z" fill="#6486cc" opacity=".55"/></g><g filter="url(#ab2)" fill="none"><path d="M30 8.0 C38 6.2 46 7.6 53 12.4" stroke="#1c3a8c" stroke-width="2.2" opacity=".5"/><path d="M0 31.4 C8 33.6 14 37 21 43" stroke="#26428e" stroke-width="1.6" opacity=".5"/></g></svg><div style="left:2.70px;top:5.00px;width:1.80px;height:1.70px;background:#e4f4f8;border-radius:0.5px;opacity:.8"></div><div style="left:2.70px;top:9.90px;width:1.80px;height:1.70px;background:#6ab4e8;border-radius:0.5px;opacity:.8"></div><div style="left:2.70px;top:14.80px;width:1.80px;height:1.70px;background:#d8e478;border-radius:0.5px;opacity:.8"></div><div style="left:19.30px;top:12.90px;width:71.00px;height:44.20px;overflow:hidden;background:#fff;box-shadow:0 0 0 0.8px #2c5cd2, 0.8px 1px 1.2px rgba(0,0,20,.4);"><div style="left:0.00px;top:7.10px;width:71.00px;height:37.10px;background:#fff;"></div><svg style="left:0;top:0" width="71.00" height="44.20" viewBox="0 0 71.00 44.20"><path d="M0 8.96H71.00M0 10.82H71.00M0 12.68H71.00M0 14.54H71.00M0 16.40H71.00M0 18.26H71.00M0 20.12H71.00M0 21.98H71.00M0 23.84H71.00M0 25.70H71.00M0 27.56H71.00M0 29.42H71.00M0 31.28H71.00M0 33.14H71.00M0 35.00H71.00M0 36.86H71.00M0 38.72H71.00M0 40.58H71.00M0 42.44H71.00" stroke="#f1f2f4" stroke-width=".35" fill="none"/><path d="M1.60 7.10V44.20M7.18 7.10V44.20M12.76 7.10V44.20M18.34 7.10V44.20M23.92 7.10V44.20M29.50 7.10V44.20M35.08 7.10V44.20M40.66 7.10V44.20M46.24 7.10V44.20M51.82 7.10V44.20M57.40 7.10V44.20M62.98 7.10V44.20M68.56 7.10V44.20" stroke="#e4e6ea" stroke-width=".45" fill="none"/></svg><div style="left:0.00px;top:0.00px;width:71.00px;height:2.30px;background:linear-gradient(to right,#1c50d4,#2f68e2 60%,#2258d4);"></div><div style="left:67.70px;top:0.50px;width:2.30px;height:1.20px;background:#d8482a;"></div><div style="left:0.00px;top:2.30px;width:71.00px;height:4.80px;background:linear-gradient(to bottom,#f1eee0 0,#f6f4ea 30%,#f3f0e3 62%,#eae7da 86%,#dddbd0 100%);"></div><svg style="left:0;top:0" width="71.00" height="8.10" viewBox="0 0 71.00 8.10"><rect x="1.60" y="3.50" width=".8" height=".8" fill="#c8aa50" opacity=".55"/><rect x="3.70" y="3.50" width=".8" height=".8" fill="#7f95c4" opacity=".55"/><rect x="5.80" y="3.50" width=".8" height=".8" fill="#b9a468" opacity=".55"/><rect x="7.90" y="3.50" width=".8" height=".8" fill="#8a98b8" opacity=".55"/><rect x="10.00" y="3.50" width=".8" height=".8" fill="#c4b070" opacity=".55"/><rect x="12.10" y="3.50" width=".8" height=".8" fill="#9aa4bc" opacity=".55"/><rect x="14.20" y="3.50" width=".8" height=".8" fill="#c8aa50" opacity=".55"/><rect x="16.30" y="3.50" width=".8" height=".8" fill="#7f95c4" opacity=".55"/><rect x="18.40" y="3.50" width=".8" height=".8" fill="#b9a468" opacity=".55"/><rect x="20.50" y="3.50" width=".8" height=".8" fill="#8a98b8" opacity=".55"/><rect x="22.60" y="3.50" width=".8" height=".8" fill="#c4b070" opacity=".55"/><rect x="24.70" y="3.50" width=".8" height=".8" fill="#9aa4bc" opacity=".55"/><rect x="26.80" y="3.50" width=".8" height=".8" fill="#c8aa50" opacity=".55"/><rect x="28.90" y="3.50" width=".8" height=".8" fill="#7f95c4" opacity=".55"/><rect x="1.60" y="5.20" width=".8" height=".8" fill="#b9a468" opacity=".5"/><rect x="3.90" y="5.20" width=".8" height=".8" fill="#8a98b8" opacity=".5"/><rect x="6.20" y="5.20" width=".8" height=".8" fill="#c4b070" opacity=".5"/><rect x="8.50" y="5.20" width=".8" height=".8" fill="#9aa4bc" opacity=".5"/><rect x="10.80" y="5.20" width=".8" height=".8" fill="#c8aa50" opacity=".5"/><rect x="13.10" y="5.20" width=".8" height=".8" fill="#7f95c4" opacity=".5"/><rect x="15.40" y="5.20" width=".8" height=".8" fill="#b9a468" opacity=".5"/><rect x="17.70" y="5.20" width=".8" height=".8" fill="#8a98b8" opacity=".5"/><rect x="20.00" y="5.20" width=".8" height=".8" fill="#c4b070" opacity=".5"/><rect x="22.30" y="5.20" width=".8" height=".8" fill="#9aa4bc" opacity=".5"/><rect x="24.60" y="5.20" width=".8" height=".8" fill="#c8aa50" opacity=".5"/><rect x="36.92" y="3.50" width=".7" height=".8" fill="#8a98b8" opacity=".45"/><rect x="39.82" y="3.50" width=".7" height=".8" fill="#c4b070" opacity=".45"/><rect x="42.72" y="3.50" width=".7" height=".8" fill="#9aa4bc" opacity=".45"/><rect x="45.62" y="3.50" width=".7" height=".8" fill="#c8aa50" opacity=".45"/><rect x="48.52" y="3.50" width=".7" height=".8" fill="#7f95c4" opacity=".45"/><rect x="51.42" y="3.50" width=".7" height=".8" fill="#b9a468" opacity=".45"/><rect x="54.32" y="3.50" width=".7" height=".8" fill="#8a98b8" opacity=".45"/><rect x="57.22" y="3.50" width=".7" height=".8" fill="#c4b070" opacity=".45"/><rect x="33.8" y="6.20" width="5.0" height=".9" fill="#7a9ae0" opacity=".55"/></svg><div style="left:0.00px;top:7.10px;width:1.50px;height:37.10px;background:#ece9dc;"></div><svg style="left:0;top:0" width="71.00" height="44.20" viewBox="0 -0.40 71.00 44.20"><rect x="2.8" y="7.6" width="13.4" height="1.15" fill="#2c2c2c" opacity=".8"/><rect x="2.8" y="9.5" width="7.4" height=".75" fill="#555" opacity=".6"/><rect x="2.6" y="12.90" width="3.4" height=".7" fill="#555" opacity=".45"/><rect x="16.00" y="12.90" width="3.3" height=".7" fill="#666" opacity=".4"/><rect x="21.00" y="12.90" width="3.3" height=".7" fill="#666" opacity=".4"/><rect x="2.6" y="14.20" width="5.4" height=".7" fill="#555" opacity=".45"/><rect x="11.00" y="14.20" width="3.3" height=".7" fill="#666" opacity=".4"/><rect x="16.00" y="14.20" width="3.3" height=".7" fill="#666" opacity=".4"/><rect x="21.00" y="14.20" width="3.3" height=".7" fill="#666" opacity=".4"/><rect x="2.6" y="15.50" width="5.4" height=".7" fill="#555" opacity=".45"/><rect x="11.00" y="15.50" width="3.3" height=".7" fill="#666" opacity=".4"/><rect x="16.00" y="15.50" width="3.3" height=".7" fill="#666" opacity=".4"/><rect x="21.00" y="15.50" width="3.3" height=".7" fill="#666" opacity=".4"/><rect x="2.6" y="16.80" width="5.4" height=".7" fill="#555" opacity=".45"/><rect x="11.00" y="16.80" width="3.3" height=".7" fill="#666" opacity=".4"/><rect x="16.00" y="16.80" width="3.3" height=".7" fill="#666" opacity=".4"/><rect x="21.00" y="16.80" width="3.3" height=".7" fill="#666" opacity=".4"/><rect x="2.6" y="18.10" width="5.4" height=".7" fill="#555" opacity=".45"/><rect x="11.00" y="18.10" width="3.3" height=".7" fill="#666" opacity=".4"/><rect x="16.00" y="18.10" width="3.3" height=".7" fill="#666" opacity=".4"/><rect x="21.00" y="18.10" width="3.3" height=".7" fill="#666" opacity=".4"/><rect x="34.2" y="8.5" width="4.8" height="1.9" rx=".7" fill="#f2f2f2" stroke="#999" stroke-width=".4"/><rect x="27.9" y="11.6" width="30.0" height="18.0" fill="#fff" stroke="#c8c8ce" stroke-width=".45"/><rect x="55.0" y="17.6" width="1.3" height="6.6" fill="#999" opacity=".6"/></svg><svg style="left:32.95px;top:13.05px" width="18.50" height="16.10" viewBox="-9.25 -8.05 18.50 16.10"><path d="M0 0 L0.00 -7.05 A8.25 7.05 0 0 1 5.30 5.40 Z" fill="#9898f0" stroke="#9898f0" stroke-width="0.15"/><path d="M0 0 L5.30 5.40 A8.25 7.05 0 0 1 2.82 6.62 Z" fill="#8c1444" stroke="#8c1444" stroke-width="0.15"/><path d="M0 0 L2.82 6.62 A8.25 7.05 0 0 1 -1.72 6.90 Z" fill="#fdfdc2" stroke="#fdfdc2" stroke-width="0.15"/><path d="M0 0 L-1.72 6.90 A8.25 7.05 0 0 1 -6.84 3.94 Z" fill="#c0f0f0" stroke="#c0f0f0" stroke-width="0.15"/><path d="M0 0 L-6.84 3.94 A8.25 7.05 0 0 1 -8.17 0.98 Z" fill="#50085c" stroke="#50085c" stroke-width="0.15"/><path d="M0 0 L-8.17 0.98 A8.25 7.05 0 0 1 -8.19 -0.86 Z" fill="#fa7a56" stroke="#fa7a56" stroke-width="0.15"/><path d="M0 0 L-8.19 -0.86 A8.25 7.05 0 0 1 -0.00 -7.05 Z" fill="#1452c4" stroke="#1452c4" stroke-width="0.15"/><ellipse cx="0" cy="0" rx="8.25" ry="7.05" fill="none" stroke="#445" stroke-width="0.25" opacity=".5"/></svg><div style="left:0.00px;top:42.60px;width:71.00px;height:1.60px;background:#e8e5d6;border-top:0.3px solid #c8c5b4"></div><div style="left:1.60px;top:41.20px;width:16.00px;height:1.40px;background:#f1efe4;"></div></div><div style="left:0.00px;top:61.60px;width:95.40px;height:2.60px;background:linear-gradient(to bottom,#3a74e6 0,#2458d8 40%,#1f4cc4 100%);"></div><div style="left:0.00px;top:61.60px;width:9.20px;height:2.60px;background:linear-gradient(to bottom,#4cae4c,#2f8a2f);border-radius:0 1px 1px 0"></div><div style="left:86.40px;top:61.60px;width:9.00px;height:2.60px;background:linear-gradient(to bottom,#2aa0f0,#1282dc);"></div><div style="left:0.00px;top:0.00px;width:0.65px;height:64.20px;background:rgba(226,232,244,.7);"></div><div style="left:94.75px;top:0.00px;width:0.65px;height:64.20px;background:rgba(226,232,244,.7);"></div><div style="left:0.00px;top:0.00px;width:95.40px;height:0.65px;background:rgba(226,232,244,.7);"></div><div style="left:0.00px;top:63.55px;width:95.40px;height:0.65px;background:rgba(226,232,244,.7);"></div></div>
<div class="lbl" style="left:216.35px;top:205.95px">Student I (WORKSTATION-9)</div>
<div class="th" style="left:337.6px;top:139.8px"><div style="left:0.00px;top:0.00px;width:95.40px;height:64.20px;background:linear-gradient(to bottom,#2c5fcc 0,#4a7cda 20%,#77a0e6 40%,#a8c4f0 56%,#a8c4f0 100%);"></div><svg style="left:0;top:0" width="95.4" height="64.2" viewBox="0 0 95.4 64.2"><defs><linearGradient id="hg" x1="0" y1="0" x2="0" y2="1"><stop offset="0" stop-color="#7cb038"/><stop offset=".3" stop-color="#5c9a26"/><stop offset=".7" stop-color="#3a7a14"/><stop offset="1" stop-color="#27600c"/></linearGradient><filter id="cb"><feGaussianBlur stdDeviation=".9"/></filter></defs><g filter="url(#cb)" fill="#fff"><path d="M2 3 L16 1 L30 6 L22 7 L10 5Z" opacity=".8"/><path d="M28 1 L50 2 L60 5 L44 5Z" opacity=".7"/><path d="M56 1 L78 2 L70 4Z" opacity=".5"/><ellipse cx="87" cy="6" rx="7" ry="2.8" opacity=".95"/><ellipse cx="91" cy="17.5" rx="5" ry="3.4" opacity=".95"/><ellipse cx="92.5" cy="27" rx="4" ry="2.4" opacity=".85"/><ellipse cx="90" cy="35" rx="5" ry="2" opacity=".7"/><ellipse cx="4.5" cy="25" rx="3.6" ry="2" opacity=".45"/><ellipse cx="5" cy="32" rx="4" ry="1.6" opacity=".5"/></g><path d="M0 37.4 C14 33.4 28 33.4 44 36 C62 39 80 38 95.4 35.4 L95.4 64.2 L0 64.2 Z" fill="url(#hg)"/><path d="M76 64.2 C80 52 88 46 95.4 43 L95.4 64.2 Z" fill="#1c4c06" opacity=".4"/><path d="M0 44 C4 43 7 45 8 64.2 L0 64.2Z" fill="#1c4c06" opacity=".35"/></svg><div style="left:2.70px;top:5.00px;width:1.80px;height:1.70px;background:#e4f4f8;border-radius:0.5px;opacity:.8"></div><div style="left:2.70px;top:9.90px;width:1.80px;height:1.70px;background:#6ab4e8;border-radius:0.5px;opacity:.8"></div><div style="left:2.70px;top:14.80px;width:1.80px;height:1.70px;background:#d8e478;border-radius:0.5px;opacity:.8"></div><div style="left:8.90px;top:5.20px;width:77.80px;height:53.80px;overflow:hidden;background:#fff;box-shadow:0 0 0 0.8px #2c5cd2, 0.8px 1px 1.2px rgba(0,0,20,.4);"><div style="left:0.00px;top:7.10px;width:77.80px;height:46.70px;background:#fff;"></div><svg style="left:0;top:0" width="77.80" height="53.80" viewBox="0 0 77.80 53.80"><path d="M0 8.96H77.80M0 10.82H77.80M0 12.68H77.80M0 14.54H77.80M0 16.40H77.80M0 18.26H77.80M0 20.12H77.80M0 21.98H77.80M0 23.84H77.80M0 25.70H77.80M0 27.56H77.80M0 29.42H77.80M0 31.28H77.80M0 33.14H77.80M0 35.00H77.80M0 36.86H77.80M0 38.72H77.80M0 40.58H77.80M0 42.44H77.80M0 44.30H77.80M0 46.16H77.80M0 48.02H77.80M0 49.88H77.80M0 51.74H77.80M0 53.60H77.80" stroke="#f1f2f4" stroke-width=".35" fill="none"/><path d="M1.60 7.10V53.80M7.18 7.10V53.80M12.76 7.10V53.80M18.34 7.10V53.80M23.92 7.10V53.80M29.50 7.10V53.80M35.08 7.10V53.80M40.66 7.10V53.80M46.24 7.10V53.80M51.82 7.10V53.80M57.40 7.10V53.80M62.98 7.10V53.80M68.56 7.10V53.80M74.14 7.10V53.80" stroke="#e4e6ea" stroke-width=".45" fill="none"/></svg><div style="left:0.00px;top:0.00px;width:77.80px;height:2.30px;background:linear-gradient(to right,#1c50d4,#2f68e2 60%,#2258d4);"></div><div style="left:74.50px;top:0.50px;width:2.30px;height:1.20px;background:#d8482a;"></div><div style="left:0.00px;top:2.30px;width:77.80px;height:4.80px;background:linear-gradient(to bottom,#f1eee0 0,#f6f4ea 30%,#f3f0e3 62%,#eae7da 86%,#dddbd0 100%);"></div><svg style="left:0;top:0" width="77.80" height="8.10" viewBox="0 0 77.80 8.10"><rect x="1.60" y="3.50" width=".8" height=".8" fill="#c8aa50" opacity=".55"/><rect x="3.70" y="3.50" width=".8" height=".8" fill="#7f95c4" opacity=".55"/><rect x="5.80" y="3.50" width=".8" height=".8" fill="#b9a468" opacity=".55"/><rect x="7.90" y="3.50" width=".8" height=".8" fill="#8a98b8" opacity=".55"/><rect x="10.00" y="3.50" width=".8" height=".8" fill="#c4b070" opacity=".55"/><rect x="12.10" y="3.50" width=".8" height=".8" fill="#9aa4bc" opacity=".55"/><rect x="14.20" y="3.50" width=".8" height=".8" fill="#c8aa50" opacity=".55"/><rect x="16.30" y="3.50" width=".8" height=".8" fill="#7f95c4" opacity=".55"/><rect x="18.40" y="3.50" width=".8" height=".8" fill="#b9a468" opacity=".55"/><rect x="20.50" y="3.50" width=".8" height=".8" fill="#8a98b8" opacity=".55"/><rect x="22.60" y="3.50" width=".8" height=".8" fill="#c4b070" opacity=".55"/><rect x="24.70" y="3.50" width=".8" height=".8" fill="#9aa4bc" opacity=".55"/><rect x="26.80" y="3.50" width=".8" height=".8" fill="#c8aa50" opacity=".55"/><rect x="28.90" y="3.50" width=".8" height=".8" fill="#7f95c4" opacity=".55"/><rect x="31.00" y="3.50" width=".8" height=".8" fill="#b9a468" opacity=".55"/><rect x="33.10" y="3.50" width=".8" height=".8" fill="#8a98b8" opacity=".55"/><rect x="1.60" y="5.20" width=".8" height=".8" fill="#b9a468" opacity=".5"/><rect x="3.90" y="5.20" width=".8" height=".8" fill="#8a98b8" opacity=".5"/><rect x="6.20" y="5.20" width=".8" height=".8" fill="#c4b070" opacity=".5"/><rect x="8.50" y="5.20" width=".8" height=".8" fill="#9aa4bc" opacity=".5"/><rect x="10.80" y="5.20" width=".8" height=".8" fill="#c8aa50" opacity=".5"/><rect x="13.10" y="5.20" width=".8" height=".8" fill="#7f95c4" opacity=".5"/><rect x="15.40" y="5.20" width=".8" height=".8" fill="#b9a468" opacity=".5"/><rect x="17.70" y="5.20" width=".8" height=".8" fill="#8a98b8" opacity=".5"/><rect x="20.00" y="5.20" width=".8" height=".8" fill="#c4b070" opacity=".5"/><rect x="22.30" y="5.20" width=".8" height=".8" fill="#9aa4bc" opacity=".5"/><rect x="24.60" y="5.20" width=".8" height=".8" fill="#c8aa50" opacity=".5"/><rect x="26.90" y="5.20" width=".8" height=".8" fill="#7f95c4" opacity=".5"/><rect x="40.46" y="3.50" width=".7" height=".8" fill="#8a98b8" opacity=".45"/><rect x="43.36" y="3.50" width=".7" height=".8" fill="#c4b070" opacity=".45"/><rect x="46.26" y="3.50" width=".7" height=".8" fill="#9aa4bc" opacity=".45"/><rect x="49.16" y="3.50" width=".7" height=".8" fill="#c8aa50" opacity=".45"/><rect x="52.06" y="3.50" width=".7" height=".8" fill="#7f95c4" opacity=".45"/><rect x="54.96" y="3.50" width=".7" height=".8" fill="#b9a468" opacity=".45"/><rect x="57.86" y="3.50" width=".7" height=".8" fill="#8a98b8" opacity=".45"/><rect x="60.76" y="3.50" width=".7" height=".8" fill="#c4b070" opacity=".45"/><rect x="63.66" y="3.50" width=".7" height=".8" fill="#9aa4bc" opacity=".45"/><rect x="33.8" y="6.20" width="5.0" height=".9" fill="#7a9ae0" opacity=".55"/></svg><div style="left:0.00px;top:7.10px;width:1.50px;height:46.70px;background:#ece9dc;"></div><svg style="left:0;top:0" width="77.80" height="53.80" viewBox="0 -0.40 77.80 53.80"><rect x="2.8" y="7.6" width="13.4" height="1.15" fill="#2c2c2c" opacity=".8"/><rect x="2.8" y="9.5" width="7.4" height=".75" fill="#555" opacity=".6"/><rect x="2.6" y="12.90" width="3.4" height=".7" fill="#555" opacity=".45"/><rect x="16.00" y="12.90" width="3.3" height=".7" fill="#666" opacity=".4"/><rect x="21.00" y="12.90" width="3.3" height=".7" fill="#666" opacity=".4"/><rect x="2.6" y="14.20" width="5.4" height=".7" fill="#555" opacity=".45"/><rect x="11.00" y="14.20" width="3.3" height=".7" fill="#666" opacity=".4"/><rect x="16.00" y="14.20" width="3.3" height=".7" fill="#666" opacity=".4"/><rect x="21.00" y="14.20" width="3.3" height=".7" fill="#666" opacity=".4"/><rect x="2.6" y="15.50" width="5.4" height=".7" fill="#555" opacity=".45"/><rect x="11.00" y="15.50" width="3.3" height=".7" fill="#666" opacity=".4"/><rect x="16.00" y="15.50" width="3.3" height=".7" fill="#666" opacity=".4"/><rect x="21.00" y="15.50" width="3.3" height=".7" fill="#666" opacity=".4"/><rect x="2.6" y="16.80" width="5.4" height=".7" fill="#555" opacity=".45"/><rect x="11.00" y="16.80" width="3.3" height=".7" fill="#666" opacity=".4"/><rect x="16.00" y="16.80" width="3.3" height=".7" fill="#666" opacity=".4"/><rect x="21.00" y="16.80" width="3.3" height=".7" fill="#666" opacity=".4"/><rect x="2.6" y="18.10" width="5.4" height=".7" fill="#555" opacity=".45"/><rect x="11.00" y="18.10" width="3.3" height=".7" fill="#666" opacity=".4"/><rect x="16.00" y="18.10" width="3.3" height=".7" fill="#666" opacity=".4"/><rect x="21.00" y="18.10" width="3.3" height=".7" fill="#666" opacity=".4"/><rect x="34.2" y="8.5" width="4.8" height="1.9" rx=".7" fill="#f2f2f2" stroke="#999" stroke-width=".4"/><rect x="27.9" y="11.6" width="30.0" height="18.0" fill="#fff" stroke="#c8c8ce" stroke-width=".45"/><rect x="55.0" y="17.6" width="1.3" height="6.6" fill="#999" opacity=".6"/></svg><svg style="left:32.95px;top:13.05px" width="18.50" height="16.10" viewBox="-9.25 -8.05 18.50 16.10"><path d="M0 0 L0.00 -7.05 A8.25 7.05 0 0 1 5.30 5.40 Z" fill="#9898f0" stroke="#9898f0" stroke-width="0.15"/><path d="M0 0 L5.30 5.40 A8.25 7.05 0 0 1 2.82 6.62 Z" fill="#8c1444" stroke="#8c1444" stroke-width="0.15"/><path d="M0 0 L2.82 6.62 A8.25 7.05 0 0 1 -1.72 6.90 Z" fill="#fdfdc2" stroke="#fdfdc2" stroke-width="0.15"/><path d="M0 0 L-1.72 6.90 A8.25 7.05 0 0 1 -6.84 3.94 Z" fill="#c0f0f0" stroke="#c0f0f0" stroke-width="0.15"/><path d="M0 0 L-6.84 3.94 A8.25 7.05 0 0 1 -8.17 0.98 Z" fill="#50085c" stroke="#50085c" stroke-width="0.15"/><path d="M0 0 L-8.17 0.98 A8.25 7.05 0 0 1 -8.19 -0.86 Z" fill="#fa7a56" stroke="#fa7a56" stroke-width="0.15"/><path d="M0 0 L-8.19 -0.86 A8.25 7.05 0 0 1 -0.00 -7.05 Z" fill="#1452c4" stroke="#1452c4" stroke-width="0.15"/><ellipse cx="0" cy="0" rx="8.25" ry="7.05" fill="none" stroke="#445" stroke-width="0.25" opacity=".5"/></svg><div style="left:0.00px;top:52.20px;width:77.80px;height:1.60px;background:#e8e5d6;border-top:0.3px solid #c8c5b4"></div><div style="left:1.60px;top:50.80px;width:16.00px;height:1.40px;background:#f1efe4;"></div></div><div style="left:0.00px;top:61.60px;width:95.40px;height:2.60px;background:linear-gradient(to bottom,#3a74e6 0,#2458d8 40%,#1f4cc4 100%);"></div><div style="left:0.00px;top:61.60px;width:9.20px;height:2.60px;background:linear-gradient(to bottom,#4cae4c,#2f8a2f);border-radius:0 1px 1px 0"></div><div style="left:86.40px;top:61.60px;width:9.00px;height:2.60px;background:linear-gradient(to bottom,#2aa0f0,#1282dc);"></div><div style="left:0.00px;top:0.00px;width:0.65px;height:64.20px;background:rgba(226,232,244,.7);"></div><div style="left:94.75px;top:0.00px;width:0.65px;height:64.20px;background:rgba(226,232,244,.7);"></div><div style="left:0.00px;top:0.00px;width:95.40px;height:0.65px;background:rgba(226,232,244,.7);"></div><div style="left:0.00px;top:63.55px;width:95.40px;height:0.65px;background:rgba(226,232,244,.7);"></div></div>
<div class="lbl" style="left:340.92px;top:206.15px">Student K (WORKSTATION-11)</div>
<div class="th" style="left:210.7px;top:228.2px"><div style="left:0.60px;top:0.20px;width:94.20px;height:61.40px;overflow:hidden;background:#fff;"><div style="left:0.00px;top:7.80px;width:94.20px;height:53.60px;background:#fff;"></div><svg style="left:0;top:0" width="94.20" height="61.40" viewBox="0 0 94.20 61.40"><path d="M0 9.66H94.20M0 11.52H94.20M0 13.38H94.20M0 15.24H94.20M0 17.10H94.20M0 18.96H94.20M0 20.82H94.20M0 22.68H94.20M0 24.54H94.20M0 26.40H94.20M0 28.26H94.20M0 30.12H94.20M0 31.98H94.20M0 33.84H94.20M0 35.70H94.20M0 37.56H94.20M0 39.42H94.20M0 41.28H94.20M0 43.14H94.20M0 45.00H94.20M0 46.86H94.20M0 48.72H94.20M0 50.58H94.20M0 52.44H94.20M0 54.30H94.20M0 56.16H94.20M0 58.02H94.20M0 59.88H94.20" stroke="#f1f2f4" stroke-width=".35" fill="none"/><path d="M1.60 7.80V61.40M7.18 7.80V61.40M12.76 7.80V61.40M18.34 7.80V61.40M23.92 7.80V61.40M29.50 7.80V61.40M35.08 7.80V61.40M40.66 7.80V61.40M46.24 7.80V61.40M51.82 7.80V61.40M57.40 7.80V61.40M62.98 7.80V61.40M68.56 7.80V61.40M74.14 7.80V61.40M79.72 7.80V61.40M85.30 7.80V61.40M90.88 7.80V61.40" stroke="#e4e6ea" stroke-width=".45" fill="none"/></svg><div style="left:0.00px;top:0.00px;width:94.20px;height:2.00px;background:linear-gradient(to right,#2052d6,#336ae2 60%,#2458d6);"></div><div style="left:0.00px;top:2.00px;width:94.20px;height:5.80px;background:linear-gradient(to bottom,#f1eee0 0,#f6f4ea 30%,#f3f0e3 62%,#eae7da 86%,#dddbd0 100%);"></div><svg style="left:0;top:0" width="94.20" height="8.80" viewBox="0 0 94.20 8.80"><rect x="1.60" y="3.20" width=".8" height=".8" fill="#c8aa50" opacity=".55"/><rect x="3.70" y="3.20" width=".8" height=".8" fill="#7f95c4" opacity=".55"/><rect x="5.80" y="3.20" width=".8" height=".8" fill="#b9a468" opacity=".55"/><rect x="7.90" y="3.20" width=".8" height=".8" fill="#8a98b8" opacity=".55"/><rect x="10.00" y="3.20" width=".8" height=".8" fill="#c4b070" opacity=".55"/><rect x="12.10" y="3.20" width=".8" height=".8" fill="#9aa4bc" opacity=".55"/><rect x="14.20" y="3.20" width=".8" height=".8" fill="#c8aa50" opacity=".55"/><rect x="16.30" y="3.20" width=".8" height=".8" fill="#7f95c4" opacity=".55"/><rect x="18.40" y="3.20" width=".8" height=".8" fill="#b9a468" opacity=".55"/><rect x="20.50" y="3.20" width=".8" height=".8" fill="#8a98b8" opacity=".55"/><rect x="22.60" y="3.20" width=".8" height=".8" fill="#c4b070" opacity=".55"/><rect x="24.70" y="3.20" width=".8" height=".8" fill="#9aa4bc" opacity=".55"/><rect x="26.80" y="3.20" width=".8" height=".8" fill="#c8aa50" opacity=".55"/><rect x="28.90" y="3.20" width=".8" height=".8" fill="#7f95c4" opacity=".55"/><rect x="31.00" y="3.20" width=".8" height=".8" fill="#b9a468" opacity=".55"/><rect x="33.10" y="3.20" width=".8" height=".8" fill="#8a98b8" opacity=".55"/><rect x="35.20" y="3.20" width=".8" height=".8" fill="#c4b070" opacity=".55"/><rect x="37.30" y="3.20" width=".8" height=".8" fill="#9aa4bc" opacity=".55"/><rect x="39.40" y="3.20" width=".8" height=".8" fill="#c8aa50" opacity=".55"/><rect x="1.60" y="4.90" width=".8" height=".8" fill="#b9a468" opacity=".5"/><rect x="3.90" y="4.90" width=".8" height=".8" fill="#8a98b8" opacity=".5"/><rect x="6.20" y="4.90" width=".8" height=".8" fill="#c4b070" opacity=".5"/><rect x="8.50" y="4.90" width=".8" height=".8" fill="#9aa4bc" opacity=".5"/><rect x="10.80" y="4.90" width=".8" height=".8" fill="#c8aa50" opacity=".5"/><rect x="13.10" y="4.90" width=".8" height=".8" fill="#7f95c4" opacity=".5"/><rect x="15.40" y="4.90" width=".8" height=".8" fill="#b9a468" opacity=".5"/><rect x="17.70" y="4.90" width=".8" height=".8" fill="#8a98b8" opacity=".5"/><rect x="20.00" y="4.90" width=".8" height=".8" fill="#c4b070" opacity=".5"/><rect x="22.30" y="4.90" width=".8" height=".8" fill="#9aa4bc" opacity=".5"/><rect x="24.60" y="4.90" width=".8" height=".8" fill="#c8aa50" opacity=".5"/><rect x="26.90" y="4.90" width=".8" height=".8" fill="#7f95c4" opacity=".5"/><rect x="29.20" y="4.90" width=".8" height=".8" fill="#b9a468" opacity=".5"/><rect x="31.50" y="4.90" width=".8" height=".8" fill="#8a98b8" opacity=".5"/><rect x="48.98" y="3.20" width=".7" height=".8" fill="#8a98b8" opacity=".45"/><rect x="51.88" y="3.20" width=".7" height=".8" fill="#c4b070" opacity=".45"/><rect x="54.78" y="3.20" width=".7" height=".8" fill="#9aa4bc" opacity=".45"/><rect x="57.68" y="3.20" width=".7" height=".8" fill="#c8aa50" opacity=".45"/><rect x="60.58" y="3.20" width=".7" height=".8" fill="#7f95c4" opacity=".45"/><rect x="63.48" y="3.20" width=".7" height=".8" fill="#b9a468" opacity=".45"/><rect x="66.38" y="3.20" width=".7" height=".8" fill="#8a98b8" opacity=".45"/><rect x="69.28" y="3.20" width=".7" height=".8" fill="#c4b070" opacity=".45"/><rect x="72.18" y="3.20" width=".7" height=".8" fill="#9aa4bc" opacity=".45"/><rect x="75.08" y="3.20" width=".7" height=".8" fill="#c8aa50" opacity=".45"/><rect x="77.98" y="3.20" width=".7" height=".8" fill="#7f95c4" opacity=".45"/><rect x="33.8" y="6.90" width="5.0" height=".9" fill="#7a9ae0" opacity=".55"/></svg><div style="left:0.00px;top:7.80px;width:1.50px;height:53.60px;background:#ece9dc;"></div><svg style="left:0;top:0" width="94.20" height="61.40" viewBox="0 -0.85 94.20 61.40"><rect x="2.8" y="7.6" width="13.4" height="1.15" fill="#2c2c2c" opacity=".8"/><rect x="2.8" y="9.5" width="7.4" height=".75" fill="#555" opacity=".6"/><rect x="2.6" y="12.90" width="3.4" height=".7" fill="#555" opacity=".45"/><rect x="16.00" y="12.90" width="3.3" height=".7" fill="#666" opacity=".4"/><rect x="21.00" y="12.90" width="3.3" height=".7" fill="#666" opacity=".4"/><rect x="2.6" y="14.20" width="5.4" height=".7" fill="#555" opacity=".45"/><rect x="11.00" y="14.20" width="3.3" height=".7" fill="#666" opacity=".4"/><rect x="16.00" y="14.20" width="3.3" height=".7" fill="#666" opacity=".4"/><rect x="21.00" y="14.20" width="3.3" height=".7" fill="#666" opacity=".4"/><rect x="2.6" y="15.50" width="5.4" height=".7" fill="#555" opacity=".45"/><rect x="11.00" y="15.50" width="3.3" height=".7" fill="#666" opacity=".4"/><rect x="16.00" y="15.50" width="3.3" height=".7" fill="#666" opacity=".4"/><rect x="21.00" y="15.50" width="3.3" height=".7" fill="#666" opacity=".4"/><rect x="2.6" y="16.80" width="5.4" height=".7" fill="#555" opacity=".45"/><rect x="11.00" y="16.80" width="3.3" height=".7" fill="#666" opacity=".4"/><rect x="16.00" y="16.80" width="3.3" height=".7" fill="#666" opacity=".4"/><rect x="21.00" y="16.80" width="3.3" height=".7" fill="#666" opacity=".4"/><rect x="2.6" y="18.10" width="5.4" height=".7" fill="#555" opacity=".45"/><rect x="11.00" y="18.10" width="3.3" height=".7" fill="#666" opacity=".4"/><rect x="16.00" y="18.10" width="3.3" height=".7" fill="#666" opacity=".4"/><rect x="21.00" y="18.10" width="3.3" height=".7" fill="#666" opacity=".4"/><rect x="34.2" y="8.5" width="4.8" height="1.9" rx=".7" fill="#f2f2f2" stroke="#999" stroke-width=".4"/><rect x="27.9" y="11.6" width="30.0" height="18.0" fill="#fff" stroke="#c8c8ce" stroke-width=".45"/><rect x="55.0" y="17.6" width="1.3" height="6.6" fill="#999" opacity=".6"/></svg><svg style="left:32.95px;top:13.50px" width="18.50" height="16.10" viewBox="-9.25 -8.05 18.50 16.10"><path d="M0 0 L0.00 -7.05 A8.25 7.05 0 0 1 5.30 5.40 Z" fill="#9898f0" stroke="#9898f0" stroke-width="0.15"/><path d="M0 0 L5.30 5.40 A8.25 7.05 0 0 1 2.82 6.62 Z" fill="#8c1444" stroke="#8c1444" stroke-width="0.15"/><path d="M0 0 L2.82 6.62 A8.25 7.05 0 0 1 -1.72 6.90 Z" fill="#fdfdc2" stroke="#fdfdc2" stroke-width="0.15"/><path d="M0 0 L-1.72 6.90 A8.25 7.05 0 0 1 -6.84 3.94 Z" fill="#c0f0f0" stroke="#c0f0f0" stroke-width="0.15"/><path d="M0 0 L-6.84 3.94 A8.25 7.05 0 0 1 -8.17 0.98 Z" fill="#50085c" stroke="#50085c" stroke-width="0.15"/><path d="M0 0 L-8.17 0.98 A8.25 7.05 0 0 1 -8.19 -0.86 Z" fill="#fa7a56" stroke="#fa7a56" stroke-width="0.15"/><path d="M0 0 L-8.19 -0.86 A8.25 7.05 0 0 1 -0.00 -7.05 Z" fill="#1452c4" stroke="#1452c4" stroke-width="0.15"/><ellipse cx="0" cy="0" rx="8.25" ry="7.05" fill="none" stroke="#445" stroke-width="0.25" opacity=".5"/></svg><div style="left:0.00px;top:59.80px;width:94.20px;height:1.60px;background:#e8e5d6;border-top:0.3px solid #c8c5b4"></div><div style="left:1.60px;top:58.40px;width:16.00px;height:1.40px;background:#f1efe4;"></div></div><div style="left:0.00px;top:61.60px;width:95.40px;height:2.60px;background:linear-gradient(to bottom,#3a74e6 0,#2458d8 40%,#1f4cc4 100%);"></div><div style="left:0.00px;top:61.60px;width:9.20px;height:2.60px;background:linear-gradient(to bottom,#4cae4c,#2f8a2f);border-radius:0 1px 1px 0"></div><div style="left:86.40px;top:61.60px;width:9.00px;height:2.60px;background:linear-gradient(to bottom,#2aa0f0,#1282dc);"></div><div style="left:0.00px;top:0.00px;width:0.65px;height:64.20px;background:rgba(226,232,244,.7);"></div><div style="left:94.75px;top:0.00px;width:0.65px;height:64.20px;background:rgba(226,232,244,.7);"></div></div>
<div class="lbl" style="left:215.80px;top:296.25px">Student H (WORKSTATION-8)</div>
<div class="th" style="left:337.6px;top:228.1px"><div style="left:0.00px;top:0.00px;width:95.40px;height:64.20px;background:#1d419c;"></div><div style="left:2.70px;top:5.00px;width:1.80px;height:1.70px;background:#e4f4f8;border-radius:0.5px;opacity:.8"></div><div style="left:2.70px;top:9.90px;width:1.80px;height:1.70px;background:#6ab4e8;border-radius:0.5px;opacity:.8"></div><div style="left:2.70px;top:14.80px;width:1.80px;height:1.70px;background:#d8e478;border-radius:0.5px;opacity:.8"></div><div style="left:15.30px;top:3.00px;width:77.30px;height:42.10px;overflow:hidden;background:#fff;box-shadow:0 0 0 0.8px #2c5cd2, 0.8px 1px 1.2px rgba(0,0,20,.4);"><div style="left:0.00px;top:7.10px;width:77.30px;height:35.00px;background:#fff;"></div><svg style="left:0;top:0" width="77.30" height="42.10" viewBox="0 0 77.30 42.10"><path d="M0 8.96H77.30M0 10.82H77.30M0 12.68H77.30M0 14.54H77.30M0 16.40H77.30M0 18.26H77.30M0 20.12H77.30M0 21.98H77.30M0 23.84H77.30M0 25.70H77.30M0 27.56H77.30M0 29.42H77.30M0 31.28H77.30M0 33.14H77.30M0 35.00H77.30M0 36.86H77.30M0 38.72H77.30M0 40.58H77.30" stroke="#f1f2f4" stroke-width=".35" fill="none"/><path d="M1.60 7.10V42.10M7.18 7.10V42.10M12.76 7.10V42.10M18.34 7.10V42.10M23.92 7.10V42.10M29.50 7.10V42.10M35.08 7.10V42.10M40.66 7.10V42.10M46.24 7.10V42.10M51.82 7.10V42.10M57.40 7.10V42.10M62.98 7.10V42.10M68.56 7.10V42.10M74.14 7.10V42.10" stroke="#e4e6ea" stroke-width=".45" fill="none"/></svg><div style="left:0.00px;top:0.00px;width:77.30px;height:2.30px;background:linear-gradient(to right,#1c50d4,#2f68e2 60%,#2258d4);"></div><div style="left:74.00px;top:0.50px;width:2.30px;height:1.20px;background:#d8482a;"></div><div style="left:0.00px;top:2.30px;width:77.30px;height:4.80px;background:linear-gradient(to bottom,#f1eee0 0,#f6f4ea 30%,#f3f0e3 62%,#eae7da 86%,#dddbd0 100%);"></div><svg style="left:0;top:0" width="77.30" height="8.10" viewBox="0 0 77.30 8.10"><rect x="1.60" y="3.50" width=".8" height=".8" fill="#c8aa50" opacity=".55"/><rect x="3.70" y="3.50" width=".8" height=".8" fill="#7f95c4" opacity=".55"/><rect x="5.80" y="3.50" width=".8" height=".8" fill="#b9a468" opacity=".55"/><rect x="7.90" y="3.50" width=".8" height=".8" fill="#8a98b8" opacity=".55"/><rect x="10.00" y="3.50" width=".8" height=".8" fill="#c4b070" opacity=".55"/><rect x="12.10" y="3.50" width=".8" height=".8" fill="#9aa4bc" opacity=".55"/><rect x="14.20" y="3.50" width=".8" height=".8" fill="#c8aa50" opacity=".55"/><rect x="16.30" y="3.50" width=".8" height=".8" fill="#7f95c4" opacity=".55"/><rect x="18.40" y="3.50" width=".8" height=".8" fill="#b9a468" opacity=".55"/><rect x="20.50" y="3.50" width=".8" height=".8" fill="#8a98b8" opacity=".55"/><rect x="22.60" y="3.50" width=".8" height=".8" fill="#c4b070" opacity=".55"/><rect x="24.70" y="3.50" width=".8" height=".8" fill="#9aa4bc" opacity=".55"/><rect x="26.80" y="3.50" width=".8" height=".8" fill="#c8aa50" opacity=".55"/><rect x="28.90" y="3.50" width=".8" height=".8" fill="#7f95c4" opacity=".55"/><rect x="31.00" y="3.50" width=".8" height=".8" fill="#b9a468" opacity=".55"/><rect x="33.10" y="3.50" width=".8" height=".8" fill="#8a98b8" opacity=".55"/><rect x="1.60" y="5.20" width=".8" height=".8" fill="#b9a468" opacity=".5"/><rect x="3.90" y="5.20" width=".8" height=".8" fill="#8a98b8" opacity=".5"/><rect x="6.20" y="5.20" width=".8" height=".8" fill="#c4b070" opacity=".5"/><rect x="8.50" y="5.20" width=".8" height=".8" fill="#9aa4bc" opacity=".5"/><rect x="10.80" y="5.20" width=".8" height=".8" fill="#c8aa50" opacity=".5"/><rect x="13.10" y="5.20" width=".8" height=".8" fill="#7f95c4" opacity=".5"/><rect x="15.40" y="5.20" width=".8" height=".8" fill="#b9a468" opacity=".5"/><rect x="17.70" y="5.20" width=".8" height=".8" fill="#8a98b8" opacity=".5"/><rect x="20.00" y="5.20" width=".8" height=".8" fill="#c4b070" opacity=".5"/><rect x="22.30" y="5.20" width=".8" height=".8" fill="#9aa4bc" opacity=".5"/><rect x="24.60" y="5.20" width=".8" height=".8" fill="#c8aa50" opacity=".5"/><rect x="26.90" y="5.20" width=".8" height=".8" fill="#7f95c4" opacity=".5"/><rect x="40.20" y="3.50" width=".7" height=".8" fill="#8a98b8" opacity=".45"/><rect x="43.10" y="3.50" width=".7" height=".8" fill="#c4b070" opacity=".45"/><rect x="46.00" y="3.50" width=".7" height=".8" fill="#9aa4bc" opacity=".45"/><rect x="48.90" y="3.50" width=".7" height=".8" fill="#c8aa50" opacity=".45"/><rect x="51.80" y="3.50" width=".7" height=".8" fill="#7f95c4" opacity=".45"/><rect x="54.70" y="3.50" width=".7" height=".8" fill="#b9a468" opacity=".45"/><rect x="57.60" y="3.50" width=".7" height=".8" fill="#8a98b8" opacity=".45"/><rect x="60.50" y="3.50" width=".7" height=".8" fill="#c4b070" opacity=".45"/><rect x="63.40" y="3.50" width=".7" height=".8" fill="#9aa4bc" opacity=".45"/><rect x="33.8" y="6.20" width="5.0" height=".9" fill="#7a9ae0" opacity=".55"/></svg><div style="left:0.00px;top:7.10px;width:1.50px;height:35.00px;background:#ece9dc;"></div><svg style="left:0;top:0" width="77.30" height="42.10" viewBox="0 -0.40 77.30 42.10"><rect x="2.8" y="7.6" width="13.4" height="1.15" fill="#2c2c2c" opacity=".8"/><rect x="2.8" y="9.5" width="7.4" height=".75" fill="#555" opacity=".6"/><rect x="2.6" y="12.90" width="3.4" height=".7" fill="#555" opacity=".45"/><rect x="16.00" y="12.90" width="3.3" height=".7" fill="#666" opacity=".4"/><rect x="21.00" y="12.90" width="3.3" height=".7" fill="#666" opacity=".4"/><rect x="2.6" y="14.20" width="5.4" height=".7" fill="#555" opacity=".45"/><rect x="11.00" y="14.20" width="3.3" height=".7" fill="#666" opacity=".4"/><rect x="16.00" y="14.20" width="3.3" height=".7" fill="#666" opacity=".4"/><rect x="21.00" y="14.20" width="3.3" height=".7" fill="#666" opacity=".4"/><rect x="2.6" y="15.50" width="5.4" height=".7" fill="#555" opacity=".45"/><rect x="11.00" y="15.50" width="3.3" height=".7" fill="#666" opacity=".4"/><rect x="16.00" y="15.50" width="3.3" height=".7" fill="#666" opacity=".4"/><rect x="21.00" y="15.50" width="3.3" height=".7" fill="#666" opacity=".4"/><rect x="2.6" y="16.80" width="5.4" height=".7" fill="#555" opacity=".45"/><rect x="11.00" y="16.80" width="3.3" height=".7" fill="#666" opacity=".4"/><rect x="16.00" y="16.80" width="3.3" height=".7" fill="#666" opacity=".4"/><rect x="21.00" y="16.80" width="3.3" height=".7" fill="#666" opacity=".4"/><rect x="2.6" y="18.10" width="5.4" height=".7" fill="#555" opacity=".45"/><rect x="11.00" y="18.10" width="3.3" height=".7" fill="#666" opacity=".4"/><rect x="16.00" y="18.10" width="3.3" height=".7" fill="#666" opacity=".4"/><rect x="21.00" y="18.10" width="3.3" height=".7" fill="#666" opacity=".4"/><rect x="34.2" y="8.5" width="4.8" height="1.9" rx=".7" fill="#f2f2f2" stroke="#999" stroke-width=".4"/><rect x="27.9" y="11.6" width="30.0" height="18.0" fill="#fff" stroke="#c8c8ce" stroke-width=".45"/><rect x="55.0" y="17.6" width="1.3" height="6.6" fill="#999" opacity=".6"/></svg><svg style="left:32.95px;top:13.05px" width="18.50" height="16.10" viewBox="-9.25 -8.05 18.50 16.10"><path d="M0 0 L0.00 -7.05 A8.25 7.05 0 0 1 5.30 5.40 Z" fill="#9898f0" stroke="#9898f0" stroke-width="0.15"/><path d="M0 0 L5.30 5.40 A8.25 7.05 0 0 1 2.82 6.62 Z" fill="#8c1444" stroke="#8c1444" stroke-width="0.15"/><path d="M0 0 L2.82 6.62 A8.25 7.05 0 0 1 -1.72 6.90 Z" fill="#fdfdc2" stroke="#fdfdc2" stroke-width="0.15"/><path d="M0 0 L-1.72 6.90 A8.25 7.05 0 0 1 -6.84 3.94 Z" fill="#c0f0f0" stroke="#c0f0f0" stroke-width="0.15"/><path d="M0 0 L-6.84 3.94 A8.25 7.05 0 0 1 -8.17 0.98 Z" fill="#50085c" stroke="#50085c" stroke-width="0.15"/><path d="M0 0 L-8.17 0.98 A8.25 7.05 0 0 1 -8.19 -0.86 Z" fill="#fa7a56" stroke="#fa7a56" stroke-width="0.15"/><path d="M0 0 L-8.19 -0.86 A8.25 7.05 0 0 1 -0.00 -7.05 Z" fill="#1452c4" stroke="#1452c4" stroke-width="0.15"/><ellipse cx="0" cy="0" rx="8.25" ry="7.05" fill="none" stroke="#445" stroke-width="0.25" opacity=".5"/></svg><div style="left:0.00px;top:40.50px;width:77.30px;height:1.60px;background:#e8e5d6;border-top:0.3px solid #c8c5b4"></div><div style="left:1.60px;top:39.10px;width:16.00px;height:1.40px;background:#f1efe4;"></div></div><div style="left:0.00px;top:61.60px;width:95.40px;height:2.60px;background:linear-gradient(to bottom,#3a74e6 0,#2458d8 40%,#1f4cc4 100%);"></div><div style="left:0.00px;top:61.60px;width:9.20px;height:2.60px;background:linear-gradient(to bottom,#4cae4c,#2f8a2f);border-radius:0 1px 1px 0"></div><div style="left:86.40px;top:61.60px;width:9.00px;height:2.60px;background:linear-gradient(to bottom,#2aa0f0,#1282dc);"></div><div style="left:0.00px;top:0.00px;width:0.65px;height:64.20px;background:rgba(226,232,244,.7);"></div><div style="left:94.75px;top:0.00px;width:0.65px;height:64.20px;background:rgba(226,232,244,.7);"></div><div style="left:0.00px;top:0.00px;width:95.40px;height:0.65px;background:rgba(226,232,244,.7);"></div><div style="left:0.00px;top:63.55px;width:95.40px;height:0.65px;background:rgba(226,232,244,.7);"></div></div>
<div class="lbl" style="left:340.52px;top:295.85px">Student J (WORKSTATION-10)</div>
<div class="th" style="left:536.2px;top:97.2px"><div style="left:0.00px;top:0.00px;width:95.40px;height:64.20px;background:linear-gradient(168deg,#3861b8 0,#3a62b6 28%,#4468b4 50%,#2c4c9c 72%,#1c3276 100%);"></div><svg style="left:0;top:0" width="95.4" height="64.2" viewBox="0 0 95.4 64.2"><defs><filter id="ab"><feGaussianBlur stdDeviation="1.3"/></filter><filter id="ab2"><feGaussianBlur stdDeviation="0.9"/></filter></defs><g filter="url(#ab)"><path d="M0 18 C10 12 22 7 34 7 C44 7 50 9 56 13 C44 11 30 16 16 28 C10 33 4 37 0 39 Z" fill="#8ea6d8" opacity=".85"/><path d="M0 34 C8 36 18 42 28 52 C32 56 35 60 36 64.2 L22 64.2 C18 56 10 48 0 44 Z" fill="#84a0d8" opacity=".8"/><path d="M30 64.2 C36 58 60 56 95.4 44 L95.4 64.2 Z" fill="#13235a" opacity=".9"/><path d="M60 12 C74 14 86 20 95.4 28 L95.4 20 C88 14 76 10 60 9 Z" fill="#6486cc" opacity=".55"/></g><g filter="url(#ab2)" fill="none"><path d="M30 8.0 C38 6.2 46 7.6 53 12.4" stroke="#1c3a8c" stroke-width="2.2" opacity=".5"/><path d="M0 31.4 C8 33.6 14 37 21 43" stroke="#26428e" stroke-width="1.6" opacity=".5"/></g></svg><div style="left:2.70px;top:5.00px;width:1.80px;height:1.70px;background:#e4f4f8;border-radius:0.5px;opacity:.8"></div><div style="left:2.70px;top:9.90px;width:1.80px;height:1.70px;background:#6ab4e8;border-radius:0.5px;opacity:.8"></div><div style="left:2.70px;top:14.80px;width:1.80px;height:1.70px;background:#d8e478;border-radius:0.5px;opacity:.8"></div><div style="left:19.80px;top:12.70px;width:70.30px;height:44.50px;overflow:hidden;background:#fff;box-shadow:0 0 0 0.8px #2c5cd2, 0.8px 1px 1.2px rgba(0,0,20,.4);"><div style="left:0.00px;top:7.10px;width:70.30px;height:37.40px;background:#fff;"></div><svg style="left:0;top:0" width="70.30" height="44.50" viewBox="0 0 70.30 44.50"><path d="M0 8.96H70.30M0 10.82H70.30M0 12.68H70.30M0 14.54H70.30M0 16.40H70.30M0 18.26H70.30M0 20.12H70.30M0 21.98H70.30M0 23.84H70.30M0 25.70H70.30M0 27.56H70.30M0 29.42H70.30M0 31.28H70.30M0 33.14H70.30M0 35.00H70.30M0 36.86H70.30M0 38.72H70.30M0 40.58H70.30M0 42.44H70.30M0 44.30H70.30" stroke="#f1f2f4" stroke-width=".35" fill="none"/><path d="M1.60 7.10V44.50M7.18 7.10V44.50M12.76 7.10V44.50M18.34 7.10V44.50M23.92 7.10V44.50M29.50 7.10V44.50M35.08 7.10V44.50M40.66 7.10V44.50M46.24 7.10V44.50M51.82 7.10V44.50M57.40 7.10V44.50M62.98 7.10V44.50M68.56 7.10V44.50" stroke="#e4e6ea" stroke-width=".45" fill="none"/></svg><div style="left:0.00px;top:0.00px;width:70.30px;height:2.30px;background:linear-gradient(to right,#1c50d4,#2f68e2 60%,#2258d4);"></div><div style="left:67.00px;top:0.50px;width:2.30px;height:1.20px;background:#d8482a;"></div><div style="left:0.00px;top:2.30px;width:70.30px;height:4.80px;background:linear-gradient(to bottom,#f1eee0 0,#f6f4ea 30%,#f3f0e3 62%,#eae7da 86%,#dddbd0 100%);"></div><svg style="left:0;top:0" width="70.30" height="8.10" viewBox="0 0 70.30 8.10"><rect x="1.60" y="3.50" width=".8" height=".8" fill="#c8aa50" opacity=".55"/><rect x="3.70" y="3.50" width=".8" height=".8" fill="#7f95c4" opacity=".55"/><rect x="5.80" y="3.50" width=".8" height=".8" fill="#b9a468" opacity=".55"/><rect x="7.90" y="3.50" width=".8" height=".8" fill="#8a98b8" opacity=".55"/><rect x="10.00" y="3.50" width=".8" height=".8" fill="#c4b070" opacity=".55"/><rect x="12.10" y="3.50" width=".8" height=".8" fill="#9aa4bc" opacity=".55"/><rect x="14.20" y="3.50" width=".8" height=".8" fill="#c8aa50" opacity=".55"/><rect x="16.30" y="3.50" width=".8" height=".8" fill="#7f95c4" opacity=".55"/><rect x="18.40" y="3.50" width=".8" height=".8" fill="#b9a468" opacity=".55"/><rect x="20.50" y="3.50" width=".8" height=".8" fill="#8a98b8" opacity=".55"/><rect x="22.60" y="3.50" width=".8" height=".8" fill="#c4b070" opacity=".55"/><rect x="24.70" y="3.50" width=".8" height=".8" fill="#9aa4bc" opacity=".55"/><rect x="26.80" y="3.50" width=".8" height=".8" fill="#c8aa50" opacity=".55"/><rect x="28.90" y="3.50" width=".8" height=".8" fill="#7f95c4" opacity=".55"/><rect x="1.60" y="5.20" width=".8" height=".8" fill="#b9a468" opacity=".5"/><rect x="3.90" y="5.20" width=".8" height=".8" fill="#8a98b8" opacity=".5"/><rect x="6.20" y="5.20" width=".8" height=".8" fill="#c4b070" opacity=".5"/><rect x="8.50" y="5.20" width=".8" height=".8" fill="#9aa4bc" opacity=".5"/><rect x="10.80" y="5.20" width=".8" height=".8" fill="#c8aa50" opacity=".5"/><rect x="13.10" y="5.20" width=".8" height=".8" fill="#7f95c4" opacity=".5"/><rect x="15.40" y="5.20" width=".8" height=".8" fill="#b9a468" opacity=".5"/><rect x="17.70" y="5.20" width=".8" height=".8" fill="#8a98b8" opacity=".5"/><rect x="20.00" y="5.20" width=".8" height=".8" fill="#c4b070" opacity=".5"/><rect x="22.30" y="5.20" width=".8" height=".8" fill="#9aa4bc" opacity=".5"/><rect x="24.60" y="5.20" width=".8" height=".8" fill="#c8aa50" opacity=".5"/><rect x="36.56" y="3.50" width=".7" height=".8" fill="#8a98b8" opacity=".45"/><rect x="39.46" y="3.50" width=".7" height=".8" fill="#c4b070" opacity=".45"/><rect x="42.36" y="3.50" width=".7" height=".8" fill="#9aa4bc" opacity=".45"/><rect x="45.26" y="3.50" width=".7" height=".8" fill="#c8aa50" opacity=".45"/><rect x="48.16" y="3.50" width=".7" height=".8" fill="#7f95c4" opacity=".45"/><rect x="51.06" y="3.50" width=".7" height=".8" fill="#b9a468" opacity=".45"/><rect x="53.96" y="3.50" width=".7" height=".8" fill="#8a98b8" opacity=".45"/><rect x="56.86" y="3.50" width=".7" height=".8" fill="#c4b070" opacity=".45"/><rect x="33.8" y="6.20" width="5.0" height=".9" fill="#7a9ae0" opacity=".55"/></svg><div style="left:0.00px;top:7.10px;width:1.50px;height:37.40px;background:#ece9dc;"></div><svg style="left:0;top:0" width="70.30" height="44.50" viewBox="0 -0.40 70.30 44.50"><rect x="2.8" y="7.6" width="13.4" height="1.15" fill="#2c2c2c" opacity=".8"/><rect x="2.8" y="9.5" width="7.4" height=".75" fill="#555" opacity=".6"/><rect x="2.6" y="12.90" width="3.4" height=".7" fill="#555" opacity=".45"/><rect x="16.00" y="12.90" width="3.3" height=".7" fill="#666" opacity=".4"/><rect x="21.00" y="12.90" width="3.3" height=".7" fill="#666" opacity=".4"/><rect x="2.6" y="14.20" width="5.4" height=".7" fill="#555" opacity=".45"/><rect x="11.00" y="14.20" width="3.3" height=".7" fill="#666" opacity=".4"/><rect x="16.00" y="14.20" width="3.3" height=".7" fill="#666" opacity=".4"/><rect x="21.00" y="14.20" width="3.3" height=".7" fill="#666" opacity=".4"/><rect x="2.6" y="15.50" width="5.4" height=".7" fill="#555" opacity=".45"/><rect x="11.00" y="15.50" width="3.3" height=".7" fill="#666" opacity=".4"/><rect x="16.00" y="15.50" width="3.3" height=".7" fill="#666" opacity=".4"/><rect x="21.00" y="15.50" width="3.3" height=".7" fill="#666" opacity=".4"/><rect x="2.6" y="16.80" width="5.4" height=".7" fill="#555" opacity=".45"/><rect x="11.00" y="16.80" width="3.3" height=".7" fill="#666" opacity=".4"/><rect x="16.00" y="16.80" width="3.3" height=".7" fill="#666" opacity=".4"/><rect x="21.00" y="16.80" width="3.3" height=".7" fill="#666" opacity=".4"/><rect x="2.6" y="18.10" width="5.4" height=".7" fill="#555" opacity=".45"/><rect x="11.00" y="18.10" width="3.3" height=".7" fill="#666" opacity=".4"/><rect x="16.00" y="18.10" width="3.3" height=".7" fill="#666" opacity=".4"/><rect x="21.00" y="18.10" width="3.3" height=".7" fill="#666" opacity=".4"/><rect x="34.2" y="8.5" width="4.8" height="1.9" rx=".7" fill="#f2f2f2" stroke="#999" stroke-width=".4"/><rect x="27.9" y="11.6" width="30.0" height="18.0" fill="#fff" stroke="#c8c8ce" stroke-width=".45"/><rect x="55.0" y="17.6" width="1.3" height="6.6" fill="#999" opacity=".6"/></svg><svg style="left:32.95px;top:13.05px" width="18.50" height="16.10" viewBox="-9.25 -8.05 18.50 16.10"><path d="M0 0 L0.00 -7.05 A8.25 7.05 0 0 1 5.30 5.40 Z" fill="#9898f0" stroke="#9898f0" stroke-width="0.15"/><path d="M0 0 L5.30 5.40 A8.25 7.05 0 0 1 2.82 6.62 Z" fill="#8c1444" stroke="#8c1444" stroke-width="0.15"/><path d="M0 0 L2.82 6.62 A8.25 7.05 0 0 1 -1.72 6.90 Z" fill="#fdfdc2" stroke="#fdfdc2" stroke-width="0.15"/><path d="M0 0 L-1.72 6.90 A8.25 7.05 0 0 1 -6.84 3.94 Z" fill="#c0f0f0" stroke="#c0f0f0" stroke-width="0.15"/><path d="M0 0 L-6.84 3.94 A8.25 7.05 0 0 1 -8.17 0.98 Z" fill="#50085c" stroke="#50085c" stroke-width="0.15"/><path d="M0 0 L-8.17 0.98 A8.25 7.05 0 0 1 -8.19 -0.86 Z" fill="#fa7a56" stroke="#fa7a56" stroke-width="0.15"/><path d="M0 0 L-8.19 -0.86 A8.25 7.05 0 0 1 -0.00 -7.05 Z" fill="#1452c4" stroke="#1452c4" stroke-width="0.15"/><ellipse cx="0" cy="0" rx="8.25" ry="7.05" fill="none" stroke="#445" stroke-width="0.25" opacity=".5"/></svg><div style="left:0.00px;top:42.90px;width:70.30px;height:1.60px;background:#e8e5d6;border-top:0.3px solid #c8c5b4"></div><div style="left:1.60px;top:41.50px;width:16.00px;height:1.40px;background:#f1efe4;"></div></div><div style="left:0.00px;top:61.60px;width:95.40px;height:2.60px;background:linear-gradient(to bottom,#3a74e6 0,#2458d8 40%,#1f4cc4 100%);"></div><div style="left:0.00px;top:61.60px;width:9.20px;height:2.60px;background:linear-gradient(to bottom,#4cae4c,#2f8a2f);border-radius:0 1px 1px 0"></div><div style="left:86.40px;top:61.60px;width:9.00px;height:2.60px;background:linear-gradient(to bottom,#2aa0f0,#1282dc);"></div><div style="left:0.00px;top:0.00px;width:0.65px;height:64.20px;background:rgba(226,232,244,.7);"></div><div style="left:94.75px;top:0.00px;width:0.65px;height:64.20px;background:rgba(226,232,244,.7);"></div><div style="left:0.00px;top:0.00px;width:95.40px;height:0.65px;background:rgba(226,232,244,.7);"></div><div style="left:0.00px;top:63.55px;width:95.40px;height:0.65px;background:rgba(226,232,244,.7);"></div></div>
<div class="lbl" style="left:539.32px;top:164.05px">Student N (WORKSTATION-14)</div>
<div class="th" style="left:536.2px;top:174.2px"><div style="left:0.60px;top:0.20px;width:94.20px;height:61.40px;overflow:hidden;background:#fff;"><div style="left:0.00px;top:7.80px;width:94.20px;height:53.60px;background:#fff;"></div><svg style="left:0;top:0" width="94.20" height="61.40" viewBox="0 0 94.20 61.40"><path d="M0 9.66H94.20M0 11.52H94.20M0 13.38H94.20M0 15.24H94.20M0 17.10H94.20M0 18.96H94.20M0 20.82H94.20M0 22.68H94.20M0 24.54H94.20M0 26.40H94.20M0 28.26H94.20M0 30.12H94.20M0 31.98H94.20M0 33.84H94.20M0 35.70H94.20M0 37.56H94.20M0 39.42H94.20M0 41.28H94.20M0 43.14H94.20M0 45.00H94.20M0 46.86H94.20M0 48.72H94.20M0 50.58H94.20M0 52.44H94.20M0 54.30H94.20M0 56.16H94.20M0 58.02H94.20M0 59.88H94.20" stroke="#f1f2f4" stroke-width=".35" fill="none"/><path d="M1.60 7.80V61.40M7.18 7.80V61.40M12.76 7.80V61.40M18.34 7.80V61.40M23.92 7.80V61.40M29.50 7.80V61.40M35.08 7.80V61.40M40.66 7.80V61.40M46.24 7.80V61.40M51.82 7.80V61.40M57.40 7.80V61.40M62.98 7.80V61.40M68.56 7.80V61.40M74.14 7.80V61.40M79.72 7.80V61.40M85.30 7.80V61.40M90.88 7.80V61.40" stroke="#e4e6ea" stroke-width=".45" fill="none"/></svg><div style="left:0.00px;top:0.00px;width:94.20px;height:2.00px;background:linear-gradient(to right,#2052d6,#336ae2 60%,#2458d6);"></div><div style="left:0.00px;top:2.00px;width:94.20px;height:5.80px;background:linear-gradient(to bottom,#f1eee0 0,#f6f4ea 30%,#f3f0e3 62%,#eae7da 86%,#dddbd0 100%);"></div><svg style="left:0;top:0" width="94.20" height="8.80" viewBox="0 0 94.20 8.80"><rect x="1.60" y="3.20" width=".8" height=".8" fill="#c8aa50" opacity=".55"/><rect x="3.70" y="3.20" width=".8" height=".8" fill="#7f95c4" opacity=".55"/><rect x="5.80" y="3.20" width=".8" height=".8" fill="#b9a468" opacity=".55"/><rect x="7.90" y="3.20" width=".8" height=".8" fill="#8a98b8" opacity=".55"/><rect x="10.00" y="3.20" width=".8" height=".8" fill="#c4b070" opacity=".55"/><rect x="12.10" y="3.20" width=".8" height=".8" fill="#9aa4bc" opacity=".55"/><rect x="14.20" y="3.20" width=".8" height=".8" fill="#c8aa50" opacity=".55"/><rect x="16.30" y="3.20" width=".8" height=".8" fill="#7f95c4" opacity=".55"/><rect x="18.40" y="3.20" width=".8" height=".8" fill="#b9a468" opacity=".55"/><rect x="20.50" y="3.20" width=".8" height=".8" fill="#8a98b8" opacity=".55"/><rect x="22.60" y="3.20" width=".8" height=".8" fill="#c4b070" opacity=".55"/><rect x="24.70" y="3.20" width=".8" height=".8" fill="#9aa4bc" opacity=".55"/><rect x="26.80" y="3.20" width=".8" height=".8" fill="#c8aa50" opacity=".55"/><rect x="28.90" y="3.20" width=".8" height=".8" fill="#7f95c4" opacity=".55"/><rect x="31.00" y="3.20" width=".8" height=".8" fill="#b9a468" opacity=".55"/><rect x="33.10" y="3.20" width=".8" height=".8" fill="#8a98b8" opacity=".55"/><rect x="35.20" y="3.20" width=".8" height=".8" fill="#c4b070" opacity=".55"/><rect x="37.30" y="3.20" width=".8" height=".8" fill="#9aa4bc" opacity=".55"/><rect x="39.40" y="3.20" width=".8" height=".8" fill="#c8aa50" opacity=".55"/><rect x="1.60" y="4.90" width=".8" height=".8" fill="#b9a468" opacity=".5"/><rect x="3.90" y="4.90" width=".8" height=".8" fill="#8a98b8" opacity=".5"/><rect x="6.20" y="4.90" width=".8" height=".8" fill="#c4b070" opacity=".5"/><rect x="8.50" y="4.90" width=".8" height=".8" fill="#9aa4bc" opacity=".5"/><rect x="10.80" y="4.90" width=".8" height=".8" fill="#c8aa50" opacity=".5"/><rect x="13.10" y="4.90" width=".8" height=".8" fill="#7f95c4" opacity=".5"/><rect x="15.40" y="4.90" width=".8" height=".8" fill="#b9a468" opacity=".5"/><rect x="17.70" y="4.90" width=".8" height=".8" fill="#8a98b8" opacity=".5"/><rect x="20.00" y="4.90" width=".8" height=".8" fill="#c4b070" opacity=".5"/><rect x="22.30" y="4.90" width=".8" height=".8" fill="#9aa4bc" opacity=".5"/><rect x="24.60" y="4.90" width=".8" height=".8" fill="#c8aa50" opacity=".5"/><rect x="26.90" y="4.90" width=".8" height=".8" fill="#7f95c4" opacity=".5"/><rect x="29.20" y="4.90" width=".8" height=".8" fill="#b9a468" opacity=".5"/><rect x="31.50" y="4.90" width=".8" height=".8" fill="#8a98b8" opacity=".5"/><rect x="48.98" y="3.20" width=".7" height=".8" fill="#8a98b8" opacity=".45"/><rect x="51.88" y="3.20" width=".7" height=".8" fill="#c4b070" opacity=".45"/><rect x="54.78" y="3.20" width=".7" height=".8" fill="#9aa4bc" opacity=".45"/><rect x="57.68" y="3.20" width=".7" height=".8" fill="#c8aa50" opacity=".45"/><rect x="60.58" y="3.20" width=".7" height=".8" fill="#7f95c4" opacity=".45"/><rect x="63.48" y="3.20" width=".7" height=".8" fill="#b9a468" opacity=".45"/><rect x="66.38" y="3.20" width=".7" height=".8" fill="#8a98b8" opacity=".45"/><rect x="69.28" y="3.20" width=".7" height=".8" fill="#c4b070" opacity=".45"/><rect x="72.18" y="3.20" width=".7" height=".8" fill="#9aa4bc" opacity=".45"/><rect x="75.08" y="3.20" width=".7" height=".8" fill="#c8aa50" opacity=".45"/><rect x="77.98" y="3.20" width=".7" height=".8" fill="#7f95c4" opacity=".45"/><rect x="33.8" y="6.90" width="5.0" height=".9" fill="#7a9ae0" opacity=".55"/></svg><div style="left:0.00px;top:7.80px;width:1.50px;height:53.60px;background:#ece9dc;"></div><svg style="left:0;top:0" width="94.20" height="61.40" viewBox="0 -0.85 94.20 61.40"><rect x="2.8" y="7.6" width="13.4" height="1.15" fill="#2c2c2c" opacity=".8"/><rect x="2.8" y="9.5" width="7.4" height=".75" fill="#555" opacity=".6"/><rect x="2.6" y="12.90" width="3.4" height=".7" fill="#555" opacity=".45"/><rect x="16.00" y="12.90" width="3.3" height=".7" fill="#666" opacity=".4"/><rect x="21.00" y="12.90" width="3.3" height=".7" fill="#666" opacity=".4"/><rect x="2.6" y="14.20" width="5.4" height=".7" fill="#555" opacity=".45"/><rect x="11.00" y="14.20" width="3.3" height=".7" fill="#666" opacity=".4"/><rect x="16.00" y="14.20" width="3.3" height=".7" fill="#666" opacity=".4"/><rect x="21.00" y="14.20" width="3.3" height=".7" fill="#666" opacity=".4"/><rect x="2.6" y="15.50" width="5.4" height=".7" fill="#555" opacity=".45"/><rect x="11.00" y="15.50" width="3.3" height=".7" fill="#666" opacity=".4"/><rect x="16.00" y="15.50" width="3.3" height=".7" fill="#666" opacity=".4"/><rect x="21.00" y="15.50" width="3.3" height=".7" fill="#666" opacity=".4"/><rect x="2.6" y="16.80" width="5.4" height=".7" fill="#555" opacity=".45"/><rect x="11.00" y="16.80" width="3.3" height=".7" fill="#666" opacity=".4"/><rect x="16.00" y="16.80" width="3.3" height=".7" fill="#666" opacity=".4"/><rect x="21.00" y="16.80" width="3.3" height=".7" fill="#666" opacity=".4"/><rect x="2.6" y="18.10" width="5.4" height=".7" fill="#555" opacity=".45"/><rect x="11.00" y="18.10" width="3.3" height=".7" fill="#666" opacity=".4"/><rect x="16.00" y="18.10" width="3.3" height=".7" fill="#666" opacity=".4"/><rect x="21.00" y="18.10" width="3.3" height=".7" fill="#666" opacity=".4"/><rect x="34.2" y="8.5" width="4.8" height="1.9" rx=".7" fill="#f2f2f2" stroke="#999" stroke-width=".4"/><rect x="27.9" y="11.6" width="30.0" height="18.0" fill="#fff" stroke="#c8c8ce" stroke-width=".45"/><rect x="55.0" y="17.6" width="1.3" height="6.6" fill="#999" opacity=".6"/></svg><svg style="left:32.95px;top:13.50px" width="18.50" height="16.10" viewBox="-9.25 -8.05 18.50 16.10"><path d="M0 0 L0.00 -7.05 A8.25 7.05 0 0 1 5.30 5.40 Z" fill="#9898f0" stroke="#9898f0" stroke-width="0.15"/><path d="M0 0 L5.30 5.40 A8.25 7.05 0 0 1 2.82 6.62 Z" fill="#8c1444" stroke="#8c1444" stroke-width="0.15"/><path d="M0 0 L2.82 6.62 A8.25 7.05 0 0 1 -1.72 6.90 Z" fill="#fdfdc2" stroke="#fdfdc2" stroke-width="0.15"/><path d="M0 0 L-1.72 6.90 A8.25 7.05 0 0 1 -6.84 3.94 Z" fill="#c0f0f0" stroke="#c0f0f0" stroke-width="0.15"/><path d="M0 0 L-6.84 3.94 A8.25 7.05 0 0 1 -8.17 0.98 Z" fill="#50085c" stroke="#50085c" stroke-width="0.15"/><path d="M0 0 L-8.17 0.98 A8.25 7.05 0 0 1 -8.19 -0.86 Z" fill="#fa7a56" stroke="#fa7a56" stroke-width="0.15"/><path d="M0 0 L-8.19 -0.86 A8.25 7.05 0 0 1 -0.00 -7.05 Z" fill="#1452c4" stroke="#1452c4" stroke-width="0.15"/><ellipse cx="0" cy="0" rx="8.25" ry="7.05" fill="none" stroke="#445" stroke-width="0.25" opacity=".5"/></svg><div style="left:0.00px;top:59.80px;width:94.20px;height:1.60px;background:#e8e5d6;border-top:0.3px solid #c8c5b4"></div><div style="left:1.60px;top:58.40px;width:16.00px;height:1.40px;background:#f1efe4;"></div></div><div style="left:0.00px;top:61.60px;width:95.40px;height:2.60px;background:linear-gradient(to bottom,#3a74e6 0,#2458d8 40%,#1f4cc4 100%);"></div><div style="left:0.00px;top:61.60px;width:9.20px;height:2.60px;background:linear-gradient(to bottom,#4cae4c,#2f8a2f);border-radius:0 1px 1px 0"></div><div style="left:86.40px;top:61.60px;width:9.00px;height:2.60px;background:linear-gradient(to bottom,#2aa0f0,#1282dc);"></div><div style="left:0.00px;top:0.00px;width:0.65px;height:64.20px;background:rgba(226,232,244,.7);"></div><div style="left:94.75px;top:0.00px;width:0.65px;height:64.20px;background:rgba(226,232,244,.7);"></div></div>
<div class="lbl" style="left:539.02px;top:240.95px">Student M (WORKSTATION-13)</div>
<div class="th" style="left:536.2px;top:250.9px"><div style="left:0.60px;top:0.20px;width:94.20px;height:61.40px;overflow:hidden;background:#fff;"><div style="left:0.00px;top:7.80px;width:94.20px;height:53.60px;background:#fff;"></div><svg style="left:0;top:0" width="94.20" height="61.40" viewBox="0 0 94.20 61.40"><path d="M0 9.66H94.20M0 11.52H94.20M0 13.38H94.20M0 15.24H94.20M0 17.10H94.20M0 18.96H94.20M0 20.82H94.20M0 22.68H94.20M0 24.54H94.20M0 26.40H94.20M0 28.26H94.20M0 30.12H94.20M0 31.98H94.20M0 33.84H94.20M0 35.70H94.20M0 37.56H94.20M0 39.42H94.20M0 41.28H94.20M0 43.14H94.20M0 45.00H94.20M0 46.86H94.20M0 48.72H94.20M0 50.58H94.20M0 52.44H94.20M0 54.30H94.20M0 56.16H94.20M0 58.02H94.20M0 59.88H94.20" stroke="#f1f2f4" stroke-width=".35" fill="none"/><path d="M1.60 7.80V61.40M7.18 7.80V61.40M12.76 7.80V61.40M18.34 7.80V61.40M23.92 7.80V61.40M29.50 7.80V61.40M35.08 7.80V61.40M40.66 7.80V61.40M46.24 7.80V61.40M51.82 7.80V61.40M57.40 7.80V61.40M62.98 7.80V61.40M68.56 7.80V61.40M74.14 7.80V61.40M79.72 7.80V61.40M85.30 7.80V61.40M90.88 7.80V61.40" stroke="#e4e6ea" stroke-width=".45" fill="none"/></svg><div style="left:0.00px;top:0.00px;width:94.20px;height:2.00px;background:linear-gradient(to right,#2052d6,#336ae2 60%,#2458d6);"></div><div style="left:0.00px;top:2.00px;width:94.20px;height:5.80px;background:linear-gradient(to bottom,#f1eee0 0,#f6f4ea 30%,#f3f0e3 62%,#eae7da 86%,#dddbd0 100%);"></div><svg style="left:0;top:0" width="94.20" height="8.80" viewBox="0 0 94.20 8.80"><rect x="1.60" y="3.20" width=".8" height=".8" fill="#c8aa50" opacity=".55"/><rect x="3.70" y="3.20" width=".8" height=".8" fill="#7f95c4" opacity=".55"/><rect x="5.80" y="3.20" width=".8" height=".8" fill="#b9a468" opacity=".55"/><rect x="7.90" y="3.20" width=".8" height=".8" fill="#8a98b8" opacity=".55"/><rect x="10.00" y="3.20" width=".8" height=".8" fill="#c4b070" opacity=".55"/><rect x="12.10" y="3.20" width=".8" height=".8" fill="#9aa4bc" opacity=".55"/><rect x="14.20" y="3.20" width=".8" height=".8" fill="#c8aa50" opacity=".55"/><rect x="16.30" y="3.20" width=".8" height=".8" fill="#7f95c4" opacity=".55"/><rect x="18.40" y="3.20" width=".8" height=".8" fill="#b9a468" opacity=".55"/><rect x="20.50" y="3.20" width=".8" height=".8" fill="#8a98b8" opacity=".55"/><rect x="22.60" y="3.20" width=".8" height=".8" fill="#c4b070" opacity=".55"/><rect x="24.70" y="3.20" width=".8" height=".8" fill="#9aa4bc" opacity=".55"/><rect x="26.80" y="3.20" width=".8" height=".8" fill="#c8aa50" opacity=".55"/><rect x="28.90" y="3.20" width=".8" height=".8" fill="#7f95c4" opacity=".55"/><rect x="31.00" y="3.20" width=".8" height=".8" fill="#b9a468" opacity=".55"/><rect x="33.10" y="3.20" width=".8" height=".8" fill="#8a98b8" opacity=".55"/><rect x="35.20" y="3.20" width=".8" height=".8" fill="#c4b070" opacity=".55"/><rect x="37.30" y="3.20" width=".8" height=".8" fill="#9aa4bc" opacity=".55"/><rect x="39.40" y="3.20" width=".8" height=".8" fill="#c8aa50" opacity=".55"/><rect x="1.60" y="4.90" width=".8" height=".8" fill="#b9a468" opacity=".5"/><rect x="3.90" y="4.90" width=".8" height=".8" fill="#8a98b8" opacity=".5"/><rect x="6.20" y="4.90" width=".8" height=".8" fill="#c4b070" opacity=".5"/><rect x="8.50" y="4.90" width=".8" height=".8" fill="#9aa4bc" opacity=".5"/><rect x="10.80" y="4.90" width=".8" height=".8" fill="#c8aa50" opacity=".5"/><rect x="13.10" y="4.90" width=".8" height=".8" fill="#7f95c4" opacity=".5"/><rect x="15.40" y="4.90" width=".8" height=".8" fill="#b9a468" opacity=".5"/><rect x="17.70" y="4.90" width=".8" height=".8" fill="#8a98b8" opacity=".5"/><rect x="20.00" y="4.90" width=".8" height=".8" fill="#c4b070" opacity=".5"/><rect x="22.30" y="4.90" width=".8" height=".8" fill="#9aa4bc" opacity=".5"/><rect x="24.60" y="4.90" width=".8" height=".8" fill="#c8aa50" opacity=".5"/><rect x="26.90" y="4.90" width=".8" height=".8" fill="#7f95c4" opacity=".5"/><rect x="29.20" y="4.90" width=".8" height=".8" fill="#b9a468" opacity=".5"/><rect x="31.50" y="4.90" width=".8" height=".8" fill="#8a98b8" opacity=".5"/><rect x="48.98" y="3.20" width=".7" height=".8" fill="#8a98b8" opacity=".45"/><rect x="51.88" y="3.20" width=".7" height=".8" fill="#c4b070" opacity=".45"/><rect x="54.78" y="3.20" width=".7" height=".8" fill="#9aa4bc" opacity=".45"/><rect x="57.68" y="3.20" width=".7" height=".8" fill="#c8aa50" opacity=".45"/><rect x="60.58" y="3.20" width=".7" height=".8" fill="#7f95c4" opacity=".45"/><rect x="63.48" y="3.20" width=".7" height=".8" fill="#b9a468" opacity=".45"/><rect x="66.38" y="3.20" width=".7" height=".8" fill="#8a98b8" opacity=".45"/><rect x="69.28" y="3.20" width=".7" height=".8" fill="#c4b070" opacity=".45"/><rect x="72.18" y="3.20" width=".7" height=".8" fill="#9aa4bc" opacity=".45"/><rect x="75.08" y="3.20" width=".7" height=".8" fill="#c8aa50" opacity=".45"/><rect x="77.98" y="3.20" width=".7" height=".8" fill="#7f95c4" opacity=".45"/><rect x="33.8" y="6.90" width="5.0" height=".9" fill="#7a9ae0" opacity=".55"/></svg><div style="left:0.00px;top:7.80px;width:1.50px;height:53.60px;background:#ece9dc;"></div><svg style="left:0;top:0" width="94.20" height="61.40" viewBox="0 -0.85 94.20 61.40"><rect x="2.8" y="7.6" width="13.4" height="1.15" fill="#2c2c2c" opacity=".8"/><rect x="2.8" y="9.5" width="7.4" height=".75" fill="#555" opacity=".6"/><rect x="2.6" y="12.90" width="3.4" height=".7" fill="#555" opacity=".45"/><rect x="16.00" y="12.90" width="3.3" height=".7" fill="#666" opacity=".4"/><rect x="21.00" y="12.90" width="3.3" height=".7" fill="#666" opacity=".4"/><rect x="2.6" y="14.20" width="5.4" height=".7" fill="#555" opacity=".45"/><rect x="11.00" y="14.20" width="3.3" height=".7" fill="#666" opacity=".4"/><rect x="16.00" y="14.20" width="3.3" height=".7" fill="#666" opacity=".4"/><rect x="21.00" y="14.20" width="3.3" height=".7" fill="#666" opacity=".4"/><rect x="2.6" y="15.50" width="5.4" height=".7" fill="#555" opacity=".45"/><rect x="11.00" y="15.50" width="3.3" height=".7" fill="#666" opacity=".4"/><rect x="16.00" y="15.50" width="3.3" height=".7" fill="#666" opacity=".4"/><rect x="21.00" y="15.50" width="3.3" height=".7" fill="#666" opacity=".4"/><rect x="2.6" y="16.80" width="5.4" height=".7" fill="#555" opacity=".45"/><rect x="11.00" y="16.80" width="3.3" height=".7" fill="#666" opacity=".4"/><rect x="16.00" y="16.80" width="3.3" height=".7" fill="#666" opacity=".4"/><rect x="21.00" y="16.80" width="3.3" height=".7" fill="#666" opacity=".4"/><rect x="2.6" y="18.10" width="5.4" height=".7" fill="#555" opacity=".45"/><rect x="11.00" y="18.10" width="3.3" height=".7" fill="#666" opacity=".4"/><rect x="16.00" y="18.10" width="3.3" height=".7" fill="#666" opacity=".4"/><rect x="21.00" y="18.10" width="3.3" height=".7" fill="#666" opacity=".4"/><rect x="34.2" y="8.5" width="4.8" height="1.9" rx=".7" fill="#f2f2f2" stroke="#999" stroke-width=".4"/><rect x="27.9" y="11.6" width="30.0" height="18.0" fill="#fff" stroke="#c8c8ce" stroke-width=".45"/><rect x="55.0" y="17.6" width="1.3" height="6.6" fill="#999" opacity=".6"/></svg><svg style="left:32.95px;top:13.50px" width="18.50" height="16.10" viewBox="-9.25 -8.05 18.50 16.10"><path d="M0 0 L0.00 -7.05 A8.25 7.05 0 0 1 5.30 5.40 Z" fill="#9898f0" stroke="#9898f0" stroke-width="0.15"/><path d="M0 0 L5.30 5.40 A8.25 7.05 0 0 1 2.82 6.62 Z" fill="#8c1444" stroke="#8c1444" stroke-width="0.15"/><path d="M0 0 L2.82 6.62 A8.25 7.05 0 0 1 -1.72 6.90 Z" fill="#fdfdc2" stroke="#fdfdc2" stroke-width="0.15"/><path d="M0 0 L-1.72 6.90 A8.25 7.05 0 0 1 -6.84 3.94 Z" fill="#c0f0f0" stroke="#c0f0f0" stroke-width="0.15"/><path d="M0 0 L-6.84 3.94 A8.25 7.05 0 0 1 -8.17 0.98 Z" fill="#50085c" stroke="#50085c" stroke-width="0.15"/><path d="M0 0 L-8.17 0.98 A8.25 7.05 0 0 1 -8.19 -0.86 Z" fill="#fa7a56" stroke="#fa7a56" stroke-width="0.15"/><path d="M0 0 L-8.19 -0.86 A8.25 7.05 0 0 1 -0.00 -7.05 Z" fill="#1452c4" stroke="#1452c4" stroke-width="0.15"/><ellipse cx="0" cy="0" rx="8.25" ry="7.05" fill="none" stroke="#445" stroke-width="0.25" opacity=".5"/></svg><div style="left:0.00px;top:59.80px;width:94.20px;height:1.60px;background:#e8e5d6;border-top:0.3px solid #c8c5b4"></div><div style="left:1.60px;top:58.40px;width:16.00px;height:1.40px;background:#f1efe4;"></div></div><div style="left:17.0px;top:11.4px;width:60.4px;height:40.7px;overflow:hidden;background:#060608;box-shadow:0 0 0 0.4px #223"><div style="left:0.00px;top:0.00px;width:60.40px;height:1.40px;background:linear-gradient(to right,#2a3a6a,#10182c 60%);"></div><div style="left:0.00px;top:1.40px;width:25.00px;height:1.20px;background:#c8c6bc;"></div><div style="left:0.00px;top:2.60px;width:60.40px;height:38.10px;background:#050507;"></div><svg style="left:2.2px;top:3.0px" width="34" height="37.2" viewBox="0 0 34 37.2"><defs><radialGradient id="pg" cx=".5" cy=".58" r=".55"><stop offset="0" stop-color="#2a8ad0"/><stop offset=".22" stop-color="#1c4aa0"/><stop offset=".6" stop-color="#14184c"/><stop offset="1" stop-color="#0c0a24"/></radialGradient><filter id="pb"><feGaussianBlur stdDeviation=".45"/></filter></defs><path d="M8.6 0.6 L25.4 0.6 L32.6 36.4 L1.4 36.4 Z" fill="url(#pg)" stroke="#5a3a2a" stroke-width=".5"/><g filter="url(#pb)"><path d="M4 33 C3.4 24 5 16 9.4 11.6 C8.6 18 9.6 26 12.4 31.6 Z" fill="#a058c0" opacity=".8"/><path d="M5.4 22 C6 19 8 18 9.4 19.6 C8.6 21.6 7 22.6 5.4 22Z" fill="#e8d0f0" opacity=".8"/><path d="M29.6 33 C28.8 27 26.6 23.6 23.6 27 C24.6 30 25.6 32 27 34.6 Z" fill="#7a48a8" opacity=".6"/><circle cx="13" cy="5.6" r="1.1" fill="#e8c040"/><circle cx="16.6" cy="4.6" r="1.0" fill="#e86a8a"/><circle cx="20.2" cy="6.4" r="1.0" fill="#e8c040"/><circle cx="15" cy="9" r=".9" fill="#f0e0a0"/><circle cx="18.4" cy="10.4" r=".9" fill="#e8a040"/><circle cx="22.6" cy="12" r=".8" fill="#e86a8a"/><circle cx="21" cy="16" r=".9" fill="#e8c040"/><circle cx="17" cy="21.4" r="2.0" fill="#48c8e8"/><circle cx="17" cy="21.4" r="3.4" fill="none" stroke="#2a6ad0" stroke-width=".6" opacity=".8"/><path d="M10.6 30.4 L14.6 33.4 M23.4 30.4 L19.4 33.4" stroke="#c8a0e0" stroke-width=".8"/><path d="M12 26 C14 28 20 28 22 26" stroke="#8a4ab0" stroke-width=".6" fill="none"/></g></svg><div style="left:38.80px;top:3.60px;width:19.60px;height:13.80px;background:#0c0c14;border:0.3px solid #556"></div><svg style="left:39.6px;top:4.2px" width="18" height="12.6" viewBox="0 0 18 12.6"><defs><filter id="pb2"><feGaussianBlur stdDeviation=".45"/></filter></defs><g filter="url(#pb2)"><path d="M2 5 C3 1 7 1 6 4 C5 6 3 6 4 9" stroke="#c050d0" stroke-width="1.4" fill="none"/><path d="M7 7 L13 3 L17 5 L11 9 Z" fill="#d8d8dc"/><path d="M9 6.6 L13 4.2 L15.4 5.2 L11.4 7.6Z" fill="#70c060"/><rect x="2" y="10" width="13" height="1.2" fill="#b03030"/></g></svg><div style="left:38.80px;top:18.40px;width:19.60px;height:4.60px;background:#08080e;border:0.3px solid #556"></div><div style="left:38.80px;top:24.00px;width:19.60px;height:13.60px;background:#08081a;border:0.3px solid #556"></div><div style="left:40.40px;top:26.00px;width:8.00px;height:0.90px;background:#5a6ae8;opacity:.8"></div><div style="left:40.40px;top:28.20px;width:13.00px;height:0.90px;background:#5a6ae8;opacity:.8"></div><div style="left:40.40px;top:30.40px;width:12.00px;height:0.90px;background:#5a6ae8;opacity:.8"></div><div style="left:40.40px;top:32.60px;width:11.00px;height:0.90px;background:#5a6ae8;opacity:.8"></div></div><div style="left:0.00px;top:61.60px;width:95.40px;height:2.60px;background:linear-gradient(to bottom,#3a74e6 0,#2458d8 40%,#1f4cc4 100%);"></div><div style="left:0.00px;top:61.60px;width:9.20px;height:2.60px;background:linear-gradient(to bottom,#4cae4c,#2f8a2f);border-radius:0 1px 1px 0"></div><div style="left:86.40px;top:61.60px;width:9.00px;height:2.60px;background:linear-gradient(to bottom,#2aa0f0,#1282dc);"></div><div style="left:0.00px;top:0.00px;width:0.65px;height:64.20px;background:rgba(226,232,244,.7);"></div><div style="left:94.75px;top:0.00px;width:0.65px;height:64.20px;background:rgba(226,232,244,.7);"></div></div>
<div class="lbl" style="left:538.92px;top:317.55px">Student L (WORKSTATION-12)</div>
</div>
<div id="status">
<div class="t" style="left:2px;top:3.68px;font-size:5.40px;white-space:pre">Total Students:12   Selected Students: 0</div>
<div style="left:203.6px;top:2px;width:7.4px;height:7.4px;border-radius:50%;background:radial-gradient(circle at 50% 45%,#fff 0,#eef 35%,#357 70%,#123 100%)"></div>
</div>
</div></div></body></html>
